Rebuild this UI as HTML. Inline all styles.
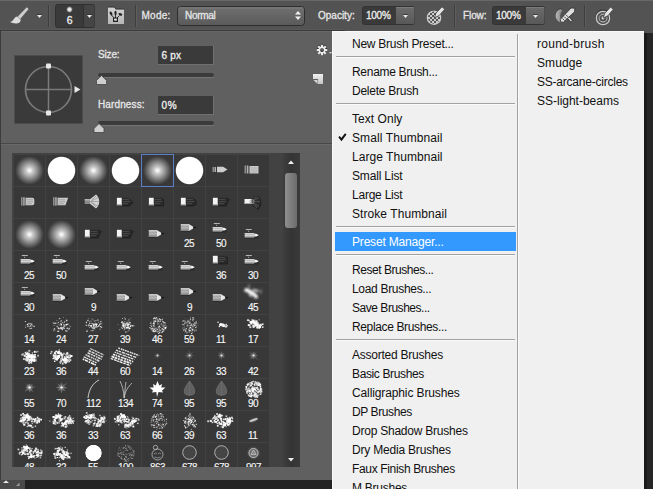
<!DOCTYPE html>
<html><head><meta charset="utf-8"><title>Brush Preset Picker</title><style>
html,body{margin:0;padding:0;background:#262626;}
body{width:653px;height:489px;overflow:hidden;position:relative;font-family:"Liberation Sans",sans-serif;}
#bg{position:absolute;left:0;top:0;}
.t{position:absolute;white-space:nowrap;line-height:1;display:block;}
#glab{position:absolute;left:12px;top:153px;width:288px;height:314px;overflow:hidden;}
.t{-webkit-text-stroke:0.3px currentColor;}
#menu{position:absolute;left:332px;top:31px;width:312px;height:458px;background:#f0f0f0;box-sizing:border-box;border-left:1px solid #f9f9f9;border-top:1px solid #f9f9f9;overflow:hidden;font-size:12px;color:#111;}
.col1{position:absolute;left:2px;top:2px;width:181px;}
.col2{position:absolute;left:187px;top:2px;width:122px;}
.vs{position:absolute;left:184px;top:2px;width:1px;height:460px;background:#a2a2a2;border-right:1px solid #fbfbfb;}
.mi{height:19px;line-height:21px;padding-left:17px;white-space:nowrap;position:relative;}
.col2 .mi{padding-left:17px;}
.mi.hl{background:#3399ff;color:#fff;}
.sep{height:9px;position:relative;}
.sep i{position:absolute;left:1px;right:1px;top:3px;height:1px;background:#a2a2a2;border-bottom:1px solid #fbfbfb;}
.chk{position:absolute;left:2.5px;top:4.500px;}
</style></head><body>
<svg id="bg" width="653" height="489" viewBox="0 0 653 489">
<rect x="0" y="0" width="653" height="33" fill="#535353"/>
<rect x="0" y="0" width="653" height="1" fill="#686868"/>
<rect x="332" y="33" width="321" height="456" fill="#262626"/>
<rect x="0" y="480" width="333" height="9" fill="#232323"/>
<rect x="644" y="33" width="3" height="456" fill="#000" opacity="0.3"/>
<rect x="0" y="29" width="345" height="1" fill="#595959"/>
<rect x="0" y="30" width="333" height="450" fill="#3c3c3c"/>
<rect x="1" y="32" width="331" height="448" fill="#606060"/>
<rect x="1" y="31" width="331" height="1" fill="#676767"/>
<rect x="0" y="30" width="345" height="1" fill="#3a3a3a"/>
<rect x="1" y="143" width="331" height="1" fill="#484848"/>
<rect x="1" y="144" width="331" height="1" fill="#686868"/>
<g transform="translate(10,7)"><path d="M16.8,0.3 L18.6,2 L10.2,12 L7.6,9.8 Z" fill="#cdcdcd"/><path d="M7,9.400 L10.600,12.400 C11.200,16.800 4.500,17.600 -0.300,14.800 C3.800,14.600 3.200,10.600 7,9.400 Z" fill="#dcdcdc"/></g>
<rect x="37" y="14" width="5" height="1" fill="#1e1e1e" opacity="0.55"/><path d="M37,15 h5 l-2.5,3 Z" fill="#e8e8e8"/>
<rect x="48" y="5" width="1" height="22" fill="#3e3e3e"/><rect x="49" y="5" width="1" height="22" fill="#5e5e5e"/>
<rect x="55.5" y="4.5" width="39" height="23" rx="2" fill="#3a3a3a" stroke="#303030"/>
<path d="M83,5 h9.5 a2,2 0 0 1 2,2 v18 a2,2 0 0 1 -2,2 h-9.5 Z" fill="#454545"/>
<rect x="83" y="5" width="1" height="22" fill="#303030"/>
<defs><radialGradient id="dot"><stop offset="0" stop-color="#fff"/><stop offset="0.5" stop-color="#ccc"/><stop offset="1" stop-color="#3a3a3a" stop-opacity="0"/></radialGradient></defs>
<circle cx="69.5" cy="9.5" r="3.8" fill="url(#dot)"/>
<rect x="87" y="14" width="5" height="1" fill="#1e1e1e" opacity="0.55"/><path d="M87,15 h5 l-2.5,3 Z" fill="#e8e8e8"/>
<defs><linearGradient id="fo" x1="0" y1="0" x2="0" y2="1"><stop offset="0" stop-color="#d2d2d2"/><stop offset="1" stop-color="#b6b6b6"/></linearGradient></defs>
<path d="M108,6.700 h6.300 l1.500,2 h8.200 v3 h-16 Z" fill="#1c1c1c"/>
<path d="M108,7.500 h6.300 l1.500,2 h8.200 v14.500 h-16 Z" fill="url(#fo)"/>
<g fill="#222" stroke="#222"><rect x="113" y="17.500" width="5" height="4.500" stroke="none"/><rect x="114.200" y="18.600" width="2.600" height="2" fill="#eee" stroke="none"/><ellipse cx="111" cy="13.500" rx="1.200" ry="2" transform="rotate(-30 111 13.500)" stroke="none"/><ellipse cx="115.500" cy="13" rx="1.100" ry="2.200" stroke="none"/><ellipse cx="120.400" cy="14.300" rx="2" ry="1.200" transform="rotate(20 120.400 14.300)" stroke="none"/><path d="M111.500,15 L114,18 M115.500,15 V18 M119.500,15.500 L117,18" stroke-width="0.9" fill="none"/></g>
<rect x="135" y="5" width="1" height="22" fill="#3e3e3e"/><rect x="136" y="5" width="1" height="22" fill="#5e5e5e"/>
<defs><linearGradient id="dd" x1="0" y1="0" x2="0" y2="1"><stop offset="0" stop-color="#707070"/><stop offset="1" stop-color="#5a5a5a"/></linearGradient></defs>
<rect x="177.5" y="6.5" width="127" height="19" rx="3" fill="url(#dd)" stroke="#2e2e2e"/>
<rect x="179" y="7.5" width="124" height="1" fill="#838383" opacity="0.7"/>
<path d="M295,14.5 h6 l-3,-3.5 Z M295,16.5 h6 l-3,3.5 Z" fill="#f0f0f0"/>
<rect x="362.5" y="6.5" width="52" height="18" rx="2" fill="#3a3a3a" stroke="#333"/>
<defs><linearGradient id="pb362" x1="0" y1="0" x2="0" y2="1"><stop offset="0" stop-color="#6c6c6c"/><stop offset="1" stop-color="#585858"/></linearGradient></defs>
<path d="M396,7 h17 a1.5,1.5 0 0 1 1.5,1.5 v14 a1.5,1.5 0 0 1 -1.5,1.5 h-17 Z" fill="url(#pb362)"/>
<rect x="396" y="7" width="18" height="1" fill="#7c7c7c"/>
<rect x="403" y="14" width="5" height="1" fill="#1e1e1e" opacity="0.55"/><path d="M403,15 h5 l-2.5,3 Z" fill="#e8e8e8"/>
<defs><pattern id="chk" x="0" y="1" width="4" height="4" patternUnits="userSpaceOnUse"><rect width="4" height="4" fill="#555"/><rect width="2" height="2" fill="#cacaca"/><rect x="2" y="2" width="2" height="2" fill="#cacaca"/></pattern><clipPath id="oc"><circle cx="434" cy="17.700" r="6.700"/></clipPath></defs>
<circle cx="434" cy="17" r="7" fill="#222" opacity="0.6"/>
<circle cx="434" cy="17.700" r="6.700" fill="url(#chk)" stroke="#cfcfcf" stroke-width="1.200"/>
<path d="M434.400,17.800 L436,13 L442,6.800 L444.700,9.300 L439,15.700 Z" fill="#e2e2e2" stroke="#3e3e3e" stroke-width="0.800"/>
<rect x="454" y="5" width="1" height="22" fill="#3e3e3e"/><rect x="455" y="5" width="1" height="22" fill="#5e5e5e"/>
<rect x="492.5" y="6.5" width="52" height="18" rx="2" fill="#3a3a3a" stroke="#333"/>
<defs><linearGradient id="pb492" x1="0" y1="0" x2="0" y2="1"><stop offset="0" stop-color="#6c6c6c"/><stop offset="1" stop-color="#585858"/></linearGradient></defs>
<path d="M526,7 h17 a1.5,1.5 0 0 1 1.5,1.5 v14 a1.5,1.5 0 0 1 -1.5,1.5 h-17 Z" fill="url(#pb492)"/>
<rect x="526" y="7" width="18" height="1" fill="#7c7c7c"/>
<rect x="533" y="14" width="5" height="1" fill="#1e1e1e" opacity="0.55"/><path d="M533,15 h5 l-2.5,3 Z" fill="#e8e8e8"/>
<defs><linearGradient id="cr" x1="0" y1="0" x2="1" y2="0"><stop offset="0" stop-color="#b8b8b8"/><stop offset="1" stop-color="#808080"/></linearGradient></defs>
<path d="M560.500,8.200 C554,10.200 554,19.200 560.500,21.700 L562.500,20.200 C559.500,17.700 559.500,12.200 562.800,9.700 Z" fill="#222" opacity="0.6"/>
<path d="M560.500,9 C554,11 554,20 560.500,22.500 L562.500,21 C559.500,18.500 559.500,13 562.800,10.500 Z" fill="url(#cr)"/>
<path d="M567.500,16.500 L571.500,21.300" stroke="#2e2e2e" stroke-width="3" fill="none"/><path d="M567.500,16.500 L571.300,21" stroke="#d8d8d8" stroke-width="1.600" fill="none"/>
<path d="M560.600,21.900 L560.400,19.300 L571,8 L574.800,8.200 L574.600,11.800 L563.400,22.200 Z" fill="#dedede" stroke="#2e2e2e" stroke-width="0.800"/>
<path d="M562.500,18.500 L564.500,20.500 M564.300,16.700 L566.300,18.700 M566.100,14.900 L568.100,16.900" stroke="#3a3a3a" stroke-width="0.900" fill="none"/>
<rect x="584" y="5" width="1" height="22" fill="#3e3e3e"/><rect x="585" y="5" width="1" height="22" fill="#5e5e5e"/>
<circle cx="603" cy="17.200" r="7" fill="none" stroke="#222" stroke-width="1.200" opacity="0.6"/>
<circle cx="603" cy="18" r="6.700" fill="none" stroke="#cdcdcd" stroke-width="1.200"/><circle cx="603" cy="18" r="3.800" fill="none" stroke="#cdcdcd" stroke-width="1.200"/><circle cx="603" cy="17.400" r="3.800" fill="none" stroke="#222" stroke-width="0.800" opacity="0.5"/><circle cx="603" cy="18" r="1.400" fill="#e4e4e4"/>
<path d="M603.200,18 L604.800,13.300 L610.600,7 L613.300,9.400 L607.800,15.800 Z" fill="#e4e4e4" stroke="#3e3e3e" stroke-width="0.800"/>
<rect x="14.5" y="55.5" width="68" height="68" fill="#3a3a3a" stroke="#4c4c4c"/>
<circle cx="48.5" cy="89.5" r="23" fill="none" stroke="#7a7a7a" stroke-width="1.7"/>
<path d="M26,89.5 H71 M48.500,67 V112" stroke="#7a7a7a" stroke-width="1.5"/>
<rect x="46" y="63.500" width="5" height="5" rx="1" fill="#e8e8e8"/><rect x="46" y="110.5" width="5" height="5" rx="1" fill="#e8e8e8"/>
<path d="M74.500,86 L80.500,89.500 L74.500,93 Z" fill="#e8e8e8"/>
<rect x="158" y="46" width="56" height="19" fill="#707070"/><rect x="158" y="46" width="55" height="18" fill="#3a3a3a"/>
<rect x="158" y="96" width="56" height="19" fill="#707070"/><rect x="158" y="96" width="55" height="18" fill="#3a3a3a"/>
<rect x="98" y="73" width="116" height="5" rx="2.5" fill="#747474"/><rect x="98" y="73" width="116" height="4" rx="2" fill="#3b3b3b"/>
<path d="M101.5,75.5 l5,5 v4 h-10 v-4 Z" fill="#cfcfcf" stroke="#444" stroke-width="0.8"/>
<rect x="98" y="121" width="116" height="5" rx="2.5" fill="#747474"/><rect x="98" y="121" width="116" height="4" rx="2" fill="#3b3b3b"/>
<path d="M99,123.5 l5,5 v4 h-10 v-4 Z" fill="#cfcfcf" stroke="#444" stroke-width="0.8"/>
<g transform="translate(322,49)" opacity="0.7"><rect x="-1" y="-5.2" width="2" height="2.2" fill="#222" transform="rotate(0)"/><rect x="-1" y="-5.2" width="2" height="2.2" fill="#222" transform="rotate(45)"/><rect x="-1" y="-5.2" width="2" height="2.2" fill="#222" transform="rotate(90)"/><rect x="-1" y="-5.2" width="2" height="2.2" fill="#222" transform="rotate(135)"/><rect x="-1" y="-5.2" width="2" height="2.2" fill="#222" transform="rotate(180)"/><rect x="-1" y="-5.2" width="2" height="2.2" fill="#222" transform="rotate(225)"/><rect x="-1" y="-5.2" width="2" height="2.2" fill="#222" transform="rotate(270)"/><rect x="-1" y="-5.2" width="2" height="2.2" fill="#222" transform="rotate(315)"/><circle r="2.8" fill="none" stroke="#222" stroke-width="1.7"/></g>
<g transform="translate(322,50)" opacity="1"><rect x="-1" y="-5.2" width="2" height="2.2" fill="#ededed" transform="rotate(0)"/><rect x="-1" y="-5.2" width="2" height="2.2" fill="#ededed" transform="rotate(45)"/><rect x="-1" y="-5.2" width="2" height="2.2" fill="#ededed" transform="rotate(90)"/><rect x="-1" y="-5.2" width="2" height="2.2" fill="#ededed" transform="rotate(135)"/><rect x="-1" y="-5.2" width="2" height="2.2" fill="#ededed" transform="rotate(180)"/><rect x="-1" y="-5.2" width="2" height="2.2" fill="#ededed" transform="rotate(225)"/><rect x="-1" y="-5.2" width="2" height="2.2" fill="#ededed" transform="rotate(270)"/><rect x="-1" y="-5.2" width="2" height="2.2" fill="#ededed" transform="rotate(315)"/><circle r="2.8" fill="none" stroke="#ededed" stroke-width="1.7"/></g>
<path d="M329,52 h3 l-1.5,2 Z" fill="#d0d0d0"/>
<defs><linearGradient id="np" x1="0" y1="0" x2="0" y2="1"><stop offset="0" stop-color="#f0f0f0"/><stop offset="1" stop-color="#c4c4c4"/></linearGradient></defs>
<path d="M313,74 h10 v10 h-5 v-5 h-5 Z" fill="url(#np)"/><path d="M313.500,80 h4 v4 Z" fill="#d8d8d8"/>
<rect x="12" y="153" width="288" height="314" fill="#424242"/>
<defs><clipPath id="gc"><rect x="12" y="153" width="288" height="314"/></clipPath>
<radialGradient id="soft"><stop offset="0" stop-color="#fff"/><stop offset="0.08" stop-color="#f0f0f0"/><stop offset="0.25" stop-color="#c6c6c6"/><stop offset="0.5" stop-color="#969696"/><stop offset="0.75" stop-color="#646464"/><stop offset="0.92" stop-color="#444"/><stop offset="1" stop-color="#383838"/></radialGradient>
<radialGradient id="hard"><stop offset="0" stop-color="#fff"/><stop offset="0.92" stop-color="#fff"/><stop offset="1" stop-color="#fff" stop-opacity="0"/></radialGradient>
<radialGradient id="glow"><stop offset="0" stop-color="#fff" stop-opacity="0.9"/><stop offset="1" stop-color="#fff" stop-opacity="0"/></radialGradient>
</defs>
<g clip-path="url(#gc)">
<rect x="14" y="155" width="31" height="31" fill="#383838"/>
<rect x="46" y="155" width="31" height="31" fill="#383838"/>
<rect x="78" y="155" width="31" height="31" fill="#383838"/>
<rect x="110" y="155" width="31" height="31" fill="#383838"/>
<rect x="142" y="155" width="31" height="31" fill="#383838"/>
<rect x="174" y="155" width="31" height="31" fill="#383838"/>
<rect x="206" y="155" width="31" height="31" fill="#383838"/>
<rect x="238" y="155" width="31" height="31" fill="#383838"/>
<rect x="14" y="187" width="31" height="31" fill="#383838"/>
<rect x="46" y="187" width="31" height="31" fill="#383838"/>
<rect x="78" y="187" width="31" height="31" fill="#383838"/>
<rect x="110" y="187" width="31" height="31" fill="#383838"/>
<rect x="142" y="187" width="31" height="31" fill="#383838"/>
<rect x="174" y="187" width="31" height="31" fill="#383838"/>
<rect x="206" y="187" width="31" height="31" fill="#383838"/>
<rect x="238" y="187" width="31" height="31" fill="#383838"/>
<rect x="14" y="219" width="31" height="31" fill="#383838"/>
<rect x="46" y="219" width="31" height="31" fill="#383838"/>
<rect x="78" y="219" width="31" height="31" fill="#383838"/>
<rect x="110" y="219" width="31" height="31" fill="#383838"/>
<rect x="142" y="219" width="31" height="31" fill="#383838"/>
<rect x="174" y="219" width="31" height="31" fill="#383838"/>
<rect x="206" y="219" width="31" height="31" fill="#383838"/>
<rect x="238" y="219" width="31" height="31" fill="#383838"/>
<rect x="14" y="251" width="31" height="31" fill="#383838"/>
<rect x="46" y="251" width="31" height="31" fill="#383838"/>
<rect x="78" y="251" width="31" height="31" fill="#383838"/>
<rect x="110" y="251" width="31" height="31" fill="#383838"/>
<rect x="142" y="251" width="31" height="31" fill="#383838"/>
<rect x="174" y="251" width="31" height="31" fill="#383838"/>
<rect x="206" y="251" width="31" height="31" fill="#383838"/>
<rect x="238" y="251" width="31" height="31" fill="#383838"/>
<rect x="14" y="283" width="31" height="31" fill="#383838"/>
<rect x="46" y="283" width="31" height="31" fill="#383838"/>
<rect x="78" y="283" width="31" height="31" fill="#383838"/>
<rect x="110" y="283" width="31" height="31" fill="#383838"/>
<rect x="142" y="283" width="31" height="31" fill="#383838"/>
<rect x="174" y="283" width="31" height="31" fill="#383838"/>
<rect x="206" y="283" width="31" height="31" fill="#383838"/>
<rect x="238" y="283" width="31" height="31" fill="#383838"/>
<rect x="14" y="315" width="31" height="31" fill="#383838"/>
<rect x="46" y="315" width="31" height="31" fill="#383838"/>
<rect x="78" y="315" width="31" height="31" fill="#383838"/>
<rect x="110" y="315" width="31" height="31" fill="#383838"/>
<rect x="142" y="315" width="31" height="31" fill="#383838"/>
<rect x="174" y="315" width="31" height="31" fill="#383838"/>
<rect x="206" y="315" width="31" height="31" fill="#383838"/>
<rect x="238" y="315" width="31" height="31" fill="#383838"/>
<rect x="14" y="347" width="31" height="31" fill="#383838"/>
<rect x="46" y="347" width="31" height="31" fill="#383838"/>
<rect x="78" y="347" width="31" height="31" fill="#383838"/>
<rect x="110" y="347" width="31" height="31" fill="#383838"/>
<rect x="142" y="347" width="31" height="31" fill="#383838"/>
<rect x="174" y="347" width="31" height="31" fill="#383838"/>
<rect x="206" y="347" width="31" height="31" fill="#383838"/>
<rect x="238" y="347" width="31" height="31" fill="#383838"/>
<rect x="14" y="379" width="31" height="31" fill="#383838"/>
<rect x="46" y="379" width="31" height="31" fill="#383838"/>
<rect x="78" y="379" width="31" height="31" fill="#383838"/>
<rect x="110" y="379" width="31" height="31" fill="#383838"/>
<rect x="142" y="379" width="31" height="31" fill="#383838"/>
<rect x="174" y="379" width="31" height="31" fill="#383838"/>
<rect x="206" y="379" width="31" height="31" fill="#383838"/>
<rect x="238" y="379" width="31" height="31" fill="#383838"/>
<rect x="14" y="411" width="31" height="31" fill="#383838"/>
<rect x="46" y="411" width="31" height="31" fill="#383838"/>
<rect x="78" y="411" width="31" height="31" fill="#383838"/>
<rect x="110" y="411" width="31" height="31" fill="#383838"/>
<rect x="142" y="411" width="31" height="31" fill="#383838"/>
<rect x="174" y="411" width="31" height="31" fill="#383838"/>
<rect x="206" y="411" width="31" height="31" fill="#383838"/>
<rect x="238" y="411" width="31" height="31" fill="#383838"/>
<rect x="14" y="443" width="31" height="31" fill="#383838"/>
<rect x="46" y="443" width="31" height="31" fill="#383838"/>
<rect x="78" y="443" width="31" height="31" fill="#383838"/>
<rect x="110" y="443" width="31" height="31" fill="#383838"/>
<rect x="142" y="443" width="31" height="31" fill="#383838"/>
<rect x="174" y="443" width="31" height="31" fill="#383838"/>
<rect x="206" y="443" width="31" height="31" fill="#383838"/>
<rect x="238" y="443" width="31" height="31" fill="#383838"/>
<circle cx="29.5" cy="170.5" r="14.500" fill="url(#soft)"/>
<circle cx="61.5" cy="170.5" r="14.3" fill="url(#hard)"/>
<circle cx="93.5" cy="170.5" r="14.500" fill="url(#soft)"/>
<circle cx="125.5" cy="170.5" r="14.3" fill="url(#hard)"/>
<circle cx="157.5" cy="170.5" r="14.500" fill="url(#soft)"/>
<circle cx="189.5" cy="170.5" r="14.3" fill="url(#hard)"/>
<g transform="translate(221.5,170)"><rect x="-9" y="-3" width="1.5" height="5" fill="#8c8c8c"/><rect x="-7" y="-3" width="1.500" height="5" fill="#b0b0b0"/><path d="M-4.5,-3.2 h6 l4.500,2.700 l-4.500,2.700 h-6 Z" fill="#cecece"/></g>
<g transform="translate(253.5,170)"><rect x="-9" y="-4.5" width="1.8" height="8" fill="#8c8c8c"/><rect x="-6.6" y="-4.5" width="1.5" height="8" fill="#b0b0b0"/><rect x="-4" y="-4" width="9" height="7.500" fill="#cacaca"/><path d="M-3,-2 h7 M-3,0 h7 M-3,2 h7" stroke="#a0a0a0" stroke-width="0.7"/></g>
<g transform="translate(29.5,202)"><rect x="-8.5" y="-4.8" width="1.6" height="8.4" fill="#8c8c8c"/><rect x="-6.3" y="-4.8" width="1.5" height="8.4" fill="#b0b0b0"/><path d="M-4,-4.2 h6.8 a2,2 0 0 1 2,2 v3.400 a2,2 0 0 1 -2,2 h-6.8 Z" fill="#c8c8c8"/><path d="M-3,-2.3 h6.500 M-3,-0.300 h6.500 M-3,1.700 h5.500" stroke="#9a9a9a" stroke-width="0.7"/></g>
<g transform="translate(61.5,202)"><rect x="-8.5" y="-4.8" width="1.6" height="8.4" fill="#8c8c8c"/><rect x="-6.3" y="-4.8" width="1.5" height="8.4" fill="#b0b0b0"/><path d="M-4,-4.2 h10.7 l-2.800,7.400 h-7.900 Z" fill="#c8c8c8"/><path d="M-3,-2.3 h6.500 M-3,-0.300 h6.500 M-3,1.700 h5.500" stroke="#9a9a9a" stroke-width="0.7"/></g>
<g transform="translate(93.5,202)"><rect x="-8.8" y="-3" width="5" height="5" fill="#8a8a8a"/><rect x="-8.8" y="-3" width="5" height="1.500" fill="#b4b4b4"/><path d="M-3.8,-2.500 L2.500,-7.500 C6.800,-4 6.800,3 2.500,6.500 L-3.800,1.500 Z" fill="#d2d2d2"/><path d="M-3,-0.500 L4.500,-4.500 M-3,-0.500 L5.500,-0.500 M-3,0 L4.500,4 M-2,-1.500 L2.500,-6 M-2,0.500 L2.500,5" stroke="#909090" stroke-width="0.7"/></g>
<g transform="translate(125.5,202)"><path d="M-4,-4.2 h7 l4,3.8 l-4,3.8 h-7 Z" fill="#181818" opacity="0.7" transform="translate(1,1)"/><path d="M-4,-4.2 h7 l4,3.8 l-4,3.8 h-7 Z" fill="#2a2a2a"/><path d="M-3,-2.400 h6.500 M-3,-0.400 h7.500 M-3,1.600 h5.500" stroke="#545454" stroke-width="0.8"/><rect x="-8.6" y="-4.2" width="4.8" height="7.600" fill="#f4f4f4"/><rect x="-8.6" y="2" width="4.800" height="1.400" fill="#b0b0b0"/><rect x="-8.6" y="3.400" width="4.800" height="1" fill="#1a1a1a" opacity="0.6"/></g>
<g transform="translate(157.5,202)"><path d="M-4,-4.2 h9.5 v7.6 h-9.5 Z" fill="#181818" opacity="0.7" transform="translate(1,1)"/><path d="M-4,-4.2 h9.5 v7.6 h-9.5 Z" fill="#2a2a2a"/><path d="M-3,-2.400 h6.500 M-3,-0.400 h7.500 M-3,1.600 h5.500" stroke="#545454" stroke-width="0.8"/><rect x="-8.6" y="-4.2" width="4.8" height="7.600" fill="#f4f4f4"/><rect x="-8.6" y="2" width="4.800" height="1.400" fill="#b0b0b0"/><rect x="-8.6" y="3.400" width="4.800" height="1" fill="#1a1a1a" opacity="0.6"/></g>
<g transform="translate(189.5,202)"><path d="M-4,-4.2 h6 a4.300,3.800 0 0 1 0,7.600 h-6 Z" fill="#181818" opacity="0.7" transform="translate(1,1)"/><path d="M-4,-4.2 h6 a4.300,3.800 0 0 1 0,7.600 h-6 Z" fill="#2a2a2a"/><path d="M-3,-2.400 h6.500 M-3,-0.400 h7.500 M-3,1.600 h5.500" stroke="#545454" stroke-width="0.8"/><rect x="-8.6" y="-4.2" width="4.8" height="7.600" fill="#f4f4f4"/><rect x="-8.6" y="2" width="4.800" height="1.400" fill="#b0b0b0"/><rect x="-8.6" y="3.400" width="4.800" height="1" fill="#1a1a1a" opacity="0.6"/></g>
<g transform="translate(221.5,202)"><path d="M-4,-4.2 h11.2 l-3.200,7.600 h-8 Z" fill="#181818" opacity="0.7" transform="translate(1,1)"/><path d="M-4,-4.2 h11.2 l-3.200,7.600 h-8 Z" fill="#2a2a2a"/><path d="M-3,-2.400 h6.500 M-3,-0.400 h7.500 M-3,1.600 h5.500" stroke="#545454" stroke-width="0.8"/><rect x="-8.6" y="-4.2" width="4.8" height="7.600" fill="#f4f4f4"/><rect x="-8.6" y="2" width="4.800" height="1.400" fill="#b0b0b0"/><rect x="-8.6" y="3.400" width="4.800" height="1" fill="#1a1a1a" opacity="0.6"/></g>
<g transform="translate(253.5,202)"><path d="M-2.500,-2.500 L3.500,-7.500 C8,-4 8,3.500 3.500,7 L-2.500,2 Z" fill="#181818" opacity="0.7" transform="translate(1,1)"/><path d="M-2.500,-2.500 L3.500,-7.500 C8,-4 8,3.500 3.500,7 L-2.500,2 Z" fill="#2c2c2c"/><path d="M-1.500,-0.500 L5.500,-4.500 M-1.500,-0.500 L6.500,-0.300 M-1.500,0 L5.500,4.500 M-0.500,-1.500 L3.500,-6.500 M-0.500,1 L3.500,6" stroke="#5c5c5c" stroke-width="0.8"/><rect x="-9" y="-3" width="7" height="5" fill="#f2f2f2"/><rect x="-9" y="1" width="7" height="1" fill="#aaa"/><circle cx="-1.500" cy="-0.400" r="2" fill="none" stroke="#999" stroke-width="0.8"/></g>
<circle cx="29.5" cy="234.5" r="14.500" fill="url(#soft)"/>
<circle cx="61.5" cy="234.5" r="14.500" fill="url(#soft)"/>
<g transform="translate(93.5,234)"><path d="M-4,-4.2 h11.2 l-3.200,7.600 h-8 Z" fill="#181818" opacity="0.7" transform="translate(1,1)"/><path d="M-4,-4.2 h11.2 l-3.200,7.600 h-8 Z" fill="#2a2a2a"/><path d="M-3,-2.400 h6.500 M-3,-0.400 h7.500 M-3,1.600 h5.500" stroke="#545454" stroke-width="0.8"/><rect x="-8.6" y="-4.2" width="4.8" height="7.600" fill="#f4f4f4"/><rect x="-8.6" y="2" width="4.800" height="1.400" fill="#b0b0b0"/><rect x="-8.6" y="3.400" width="4.800" height="1" fill="#1a1a1a" opacity="0.6"/></g>
<g transform="translate(125.5,234)"><path d="M-4,-4.2 h11.2 l-3.200,7.600 h-8 Z" fill="#181818" opacity="0.7" transform="translate(1,1)"/><path d="M-4,-4.2 h11.2 l-3.200,7.600 h-8 Z" fill="#2a2a2a"/><path d="M-3,-2.400 h6.500 M-3,-0.400 h7.500 M-3,1.600 h5.500" stroke="#545454" stroke-width="0.8"/><rect x="-8.6" y="-4.2" width="4.8" height="7.600" fill="#f4f4f4"/><rect x="-8.6" y="2" width="4.800" height="1.400" fill="#b0b0b0"/><rect x="-8.6" y="3.400" width="4.800" height="1" fill="#1a1a1a" opacity="0.6"/></g>
<g transform="translate(157.5,234)"><rect x="-8.5" y="-3" width="9" height="7" fill="#1c1c1c" opacity="0.4"/><rect x="-8.7" y="-4" width="8" height="7" fill="#a6a6a6"/><rect x="-8.7" y="-4" width="8" height="1.6" fill="#c6c6c6"/><rect x="-8.7" y="-0.6" width="8" height="0.8" fill="#bcbcbc"/><rect x="-8.7" y="1.6" width="8" height="1.4" fill="#868686"/><path d="M-0.7,-4 L3.7,-1.3 V0.4 L-0.7,3 Z" fill="#e6e6e6"/><rect x="3.7" y="-1.3" width="3" height="1.6" fill="#1e1e1e"/></g>
<g transform="translate(189.5,228)"><rect x="-8.5" y="-3" width="9" height="7" fill="#1c1c1c" opacity="0.4"/><rect x="-8.7" y="-4" width="8" height="7" fill="#a6a6a6"/><rect x="-8.7" y="-4" width="8" height="1.6" fill="#c6c6c6"/><rect x="-8.7" y="-0.6" width="8" height="0.8" fill="#bcbcbc"/><rect x="-8.7" y="1.6" width="8" height="1.4" fill="#868686"/><path d="M-0.7,-4 L3.7,-1.3 V0.4 L-0.7,3 Z" fill="#e6e6e6"/><rect x="3.7" y="-1.3" width="3" height="1.6" fill="#1e1e1e"/></g>
<g transform="translate(221.5,228)"><rect x="-9" y="0" width="14" height="4.6" fill="#1c1c1c" opacity="0.45"/><rect x="-7.7" y="-5" width="6" height="1" fill="#b4b4b4"/><rect x="-5.5" y="-3.2" width="1.2" height="1" fill="#a0a0a0"/><rect x="-8.8" y="-0.8" width="9.5" height="4.2" fill="#bcbcbc"/><rect x="-8.8" y="-0.8" width="9.5" height="0.9" fill="#dedede"/><rect x="-8.8" y="1" width="9.5" height="0.8" fill="#d8d8d8"/><rect x="-8.8" y="2.6" width="9.5" height="0.8" fill="#949494"/><path d="M0.7,-0.2 H2.6 L4.8,0.8 V1.7 L2.6,2.6 H0.7 Z" fill="#f2f2f2"/></g>
<g transform="translate(253.5,234)"><rect x="-9" y="0" width="14" height="4.6" fill="#1c1c1c" opacity="0.45"/><rect x="-7.7" y="-5" width="6" height="1" fill="#b4b4b4"/><rect x="-5.5" y="-3.2" width="1.2" height="1" fill="#a0a0a0"/><rect x="-8.8" y="-0.8" width="9.5" height="4.2" fill="#bcbcbc"/><rect x="-8.8" y="-0.8" width="9.5" height="0.9" fill="#dedede"/><rect x="-8.8" y="1" width="9.5" height="0.8" fill="#d8d8d8"/><rect x="-8.8" y="2.6" width="9.5" height="0.8" fill="#949494"/><path d="M0.7,-0.2 H2.6 L4.8,0.8 V1.7 L2.6,2.6 H0.7 Z" fill="#f2f2f2"/></g>
<g transform="translate(29.5,260)"><rect x="-9" y="0" width="14" height="4.6" fill="#1c1c1c" opacity="0.45"/><rect x="-7.7" y="-5" width="6" height="1" fill="#b4b4b4"/><rect x="-5.5" y="-3.2" width="1.2" height="1" fill="#a0a0a0"/><rect x="-8.8" y="-0.8" width="9.5" height="4.2" fill="#bcbcbc"/><rect x="-8.8" y="-0.8" width="9.5" height="0.9" fill="#dedede"/><rect x="-8.8" y="1" width="9.5" height="0.8" fill="#d8d8d8"/><rect x="-8.8" y="2.6" width="9.5" height="0.8" fill="#949494"/><path d="M0.7,-0.2 H2.6 L4.8,0.8 V1.7 L2.6,2.6 H0.7 Z" fill="#f2f2f2"/></g>
<g transform="translate(61.5,260)"><rect x="-9" y="0" width="14" height="4.6" fill="#1c1c1c" opacity="0.45"/><rect x="-7.7" y="-5" width="6" height="1" fill="#b4b4b4"/><rect x="-5.5" y="-3.2" width="1.2" height="1" fill="#a0a0a0"/><rect x="-8.8" y="-0.8" width="9.5" height="4.2" fill="#bcbcbc"/><rect x="-8.8" y="-0.8" width="9.5" height="0.9" fill="#dedede"/><rect x="-8.8" y="1" width="9.5" height="0.8" fill="#d8d8d8"/><rect x="-8.8" y="2.6" width="9.5" height="0.8" fill="#949494"/><path d="M0.7,-0.2 H2.6 L4.8,0.8 V1.7 L2.6,2.6 H0.7 Z" fill="#f2f2f2"/></g>
<g transform="translate(93.5,266)"><rect x="-9" y="0" width="14" height="4.6" fill="#1c1c1c" opacity="0.45"/><rect x="-7.7" y="-5" width="6" height="1" fill="#b4b4b4"/><rect x="-5.5" y="-3.2" width="1.2" height="1" fill="#a0a0a0"/><rect x="-8.8" y="-0.8" width="9.5" height="4.2" fill="#bcbcbc"/><rect x="-8.8" y="-0.8" width="9.5" height="0.9" fill="#dedede"/><rect x="-8.8" y="1" width="9.5" height="0.8" fill="#d8d8d8"/><rect x="-8.8" y="2.6" width="9.5" height="0.8" fill="#949494"/><path d="M0.7,-0.2 H2.6 L4.8,0.8 V1.7 L2.6,2.6 H0.7 Z" fill="#f2f2f2"/></g>
<g transform="translate(125.5,266)"><rect x="-9" y="0" width="14" height="4.6" fill="#1c1c1c" opacity="0.45"/><rect x="-7.7" y="-5" width="6" height="1" fill="#b4b4b4"/><rect x="-5.5" y="-3.2" width="1.2" height="1" fill="#a0a0a0"/><rect x="-8.8" y="-0.8" width="9.5" height="4.2" fill="#bcbcbc"/><rect x="-8.8" y="-0.8" width="9.5" height="0.9" fill="#dedede"/><rect x="-8.8" y="1" width="9.5" height="0.8" fill="#d8d8d8"/><rect x="-8.8" y="2.6" width="9.5" height="0.8" fill="#949494"/><path d="M0.7,-0.2 H2.6 L4.8,0.8 V1.7 L2.6,2.6 H0.7 Z" fill="#f2f2f2"/></g>
<g transform="translate(157.5,266)"><rect x="-9" y="0" width="14" height="4.6" fill="#1c1c1c" opacity="0.45"/><rect x="-7.7" y="-5" width="6" height="1" fill="#b4b4b4"/><rect x="-5.5" y="-3.2" width="1.2" height="1" fill="#a0a0a0"/><rect x="-8.8" y="-0.8" width="9.5" height="4.2" fill="#bcbcbc"/><rect x="-8.8" y="-0.8" width="9.5" height="0.9" fill="#dedede"/><rect x="-8.8" y="1" width="9.5" height="0.8" fill="#d8d8d8"/><rect x="-8.8" y="2.6" width="9.5" height="0.8" fill="#949494"/><path d="M0.7,-0.2 H2.6 L4.8,0.8 V1.7 L2.6,2.6 H0.7 Z" fill="#f2f2f2"/></g>
<g transform="translate(189.5,266)"><rect x="-9" y="0" width="14" height="4.6" fill="#1c1c1c" opacity="0.45"/><rect x="-7.7" y="-5" width="6" height="1" fill="#b4b4b4"/><rect x="-5.5" y="-3.2" width="1.2" height="1" fill="#a0a0a0"/><rect x="-8.8" y="-0.8" width="9.5" height="4.2" fill="#bcbcbc"/><rect x="-8.8" y="-0.8" width="9.5" height="0.9" fill="#dedede"/><rect x="-8.8" y="1" width="9.5" height="0.8" fill="#d8d8d8"/><rect x="-8.8" y="2.6" width="9.5" height="0.8" fill="#949494"/><path d="M0.7,-0.2 H2.6 L4.8,0.8 V1.7 L2.6,2.6 H0.7 Z" fill="#f2f2f2"/></g>
<g transform="translate(221.5,260)"><path d="M-4,-4.2 h9.5 v7.6 h-9.5 Z" fill="#181818" opacity="0.7" transform="translate(1,1)"/><path d="M-4,-4.2 h9.5 v7.6 h-9.5 Z" fill="#2a2a2a"/><path d="M-3,-2.400 h6.500 M-3,-0.400 h7.500 M-3,1.600 h5.500" stroke="#545454" stroke-width="0.8"/><rect x="-8.6" y="-4.2" width="4.8" height="7.600" fill="#f4f4f4"/><rect x="-8.6" y="2" width="4.800" height="1.400" fill="#b0b0b0"/><rect x="-8.6" y="3.400" width="4.800" height="1" fill="#1a1a1a" opacity="0.6"/></g>
<g transform="translate(253.5,260)"><rect x="-9" y="0" width="14" height="4.6" fill="#1c1c1c" opacity="0.45"/><rect x="-7.7" y="-5" width="6" height="1" fill="#b4b4b4"/><rect x="-5.5" y="-3.2" width="1.2" height="1" fill="#a0a0a0"/><rect x="-8.8" y="-0.8" width="9.5" height="4.2" fill="#bcbcbc"/><rect x="-8.8" y="-0.8" width="9.5" height="0.9" fill="#dedede"/><rect x="-8.8" y="1" width="9.5" height="0.8" fill="#d8d8d8"/><rect x="-8.8" y="2.6" width="9.5" height="0.8" fill="#949494"/><path d="M0.7,-0.2 H2.6 L4.8,0.8 V1.7 L2.6,2.6 H0.7 Z" fill="#f2f2f2"/></g>
<g transform="translate(29.5,292)"><rect x="-9" y="0" width="14" height="4.6" fill="#1c1c1c" opacity="0.45"/><rect x="-7.7" y="-5" width="6" height="1" fill="#b4b4b4"/><rect x="-5.5" y="-3.2" width="1.2" height="1" fill="#a0a0a0"/><rect x="-8.8" y="-0.8" width="9.5" height="4.2" fill="#bcbcbc"/><rect x="-8.8" y="-0.8" width="9.5" height="0.9" fill="#dedede"/><rect x="-8.8" y="1" width="9.5" height="0.8" fill="#d8d8d8"/><rect x="-8.8" y="2.6" width="9.5" height="0.8" fill="#949494"/><path d="M0.7,-0.2 H2.6 L4.8,0.8 V1.7 L2.6,2.6 H0.7 Z" fill="#f2f2f2"/></g>
<g transform="translate(61.5,298)"><rect x="-8.5" y="-3" width="9" height="7" fill="#1c1c1c" opacity="0.4"/><rect x="-8.7" y="-4" width="8" height="7" fill="#a6a6a6"/><rect x="-8.7" y="-4" width="8" height="1.6" fill="#c6c6c6"/><rect x="-8.7" y="-0.6" width="8" height="0.8" fill="#bcbcbc"/><rect x="-8.7" y="1.6" width="8" height="1.4" fill="#868686"/><path d="M-0.7,-4 L3.7,-1.3 V0.4 L-0.7,3 Z" fill="#e6e6e6"/><rect x="3.7" y="-1.3" width="3" height="1.6" fill="#1e1e1e"/></g>
<g transform="translate(93.5,292)"><rect x="-8.5" y="-3" width="9" height="7" fill="#1c1c1c" opacity="0.4"/><rect x="-8.7" y="-4" width="8" height="7" fill="#a6a6a6"/><rect x="-8.7" y="-4" width="8" height="1.6" fill="#c6c6c6"/><rect x="-8.7" y="-0.6" width="8" height="0.8" fill="#bcbcbc"/><rect x="-8.7" y="1.6" width="8" height="1.4" fill="#868686"/><path d="M-0.7,-4 L3.7,-1.3 V0.4 L-0.7,3 Z" fill="#e6e6e6"/><rect x="3.7" y="-1.3" width="3" height="1.6" fill="#1e1e1e"/></g>
<g transform="translate(125.5,298)"><rect x="-8.5" y="-3" width="9" height="7" fill="#1c1c1c" opacity="0.4"/><rect x="-8.7" y="-4" width="8" height="7" fill="#a6a6a6"/><rect x="-8.7" y="-4" width="8" height="1.6" fill="#c6c6c6"/><rect x="-8.7" y="-0.6" width="8" height="0.8" fill="#bcbcbc"/><rect x="-8.7" y="1.6" width="8" height="1.4" fill="#868686"/><path d="M-0.7,-4 L3.7,-1.3 V0.4 L-0.7,3 Z" fill="#e6e6e6"/><rect x="3.7" y="-1.3" width="3" height="1.6" fill="#1e1e1e"/></g>
<g transform="translate(157.5,298)"><rect x="-8.5" y="-3" width="9" height="7" fill="#1c1c1c" opacity="0.4"/><rect x="-8.7" y="-4" width="8" height="7" fill="#a6a6a6"/><rect x="-8.7" y="-4" width="8" height="1.6" fill="#c6c6c6"/><rect x="-8.7" y="-0.6" width="8" height="0.8" fill="#bcbcbc"/><rect x="-8.7" y="1.6" width="8" height="1.4" fill="#868686"/><path d="M-0.7,-4 L3.7,-1.3 V0.4 L-0.7,3 Z" fill="#e6e6e6"/><rect x="3.7" y="-1.3" width="3" height="1.6" fill="#1e1e1e"/></g>
<g transform="translate(189.5,292)"><rect x="-8.5" y="-3" width="9" height="7" fill="#1c1c1c" opacity="0.4"/><rect x="-8.7" y="-4" width="8" height="7" fill="#a6a6a6"/><rect x="-8.7" y="-4" width="8" height="1.6" fill="#c6c6c6"/><rect x="-8.7" y="-0.6" width="8" height="0.8" fill="#bcbcbc"/><rect x="-8.7" y="1.6" width="8" height="1.4" fill="#868686"/><path d="M-0.7,-4 L3.7,-1.3 V0.4 L-0.7,3 Z" fill="#e6e6e6"/><rect x="3.7" y="-1.3" width="3" height="1.6" fill="#1e1e1e"/></g>
<g transform="translate(221.5,298)"><rect x="-8.5" y="-3" width="9" height="7" fill="#1c1c1c" opacity="0.4"/><rect x="-8.7" y="-4" width="8" height="7" fill="#a6a6a6"/><rect x="-8.7" y="-4" width="8" height="1.6" fill="#c6c6c6"/><rect x="-8.7" y="-0.6" width="8" height="0.8" fill="#bcbcbc"/><rect x="-8.7" y="1.6" width="8" height="1.4" fill="#868686"/><path d="M-0.7,-4 L3.7,-1.3 V0.4 L-0.7,3 Z" fill="#e6e6e6"/><rect x="3.7" y="-1.3" width="3" height="1.6" fill="#1e1e1e"/></g>
<g transform="translate(252,293)" fill="#fff" filter="url(#bl2)"><ellipse cx="-1" cy="0" rx="7.500" ry="2.100" transform="rotate(32)" opacity="0.95"/><ellipse cx="3" cy="-3.500" rx="3.500" ry="1.200" transform="rotate(15)" opacity="0.7"/><ellipse cx="-5.500" cy="-2.500" rx="2.500" ry="1.800" opacity="0.8"/><ellipse cx="4" cy="4" rx="2" ry="1.800" opacity="0.85"/><ellipse cx="0" cy="3" rx="2.500" ry="1" transform="rotate(30)" opacity="0.6"/><ellipse cx="-3" cy="-6.500" rx="0.800" ry="2.500" opacity="0.45"/><ellipse cx="9" cy="-1.500" rx="0.800" ry="2.500" opacity="0.4"/></g>
<g transform="translate(29.5,325) rotate(0)" fill="#fff"><rect x="-0.7" y="1.2" width="1.1" height="1.1" opacity="0.54"/><rect x="-2.5" y="-0.5" width="0.6" height="0.6" opacity="0.75"/><rect x="2.8" y="0.6" width="0.7" height="0.7" opacity="0.55"/><rect x="-4.5" y="1.9" width="0.7" height="0.7" opacity="0.61"/><rect x="-4.6" y="-4.0" width="1.1" height="1.1" opacity="0.70"/><rect x="0.8" y="-0.1" width="1.3" height="1.3" opacity="0.64"/><rect x="0.8" y="0.9" width="0.8" height="0.8" opacity="0.91"/><rect x="1.5" y="2.7" width="1.1" height="1.1" opacity="0.69"/><rect x="-0.9" y="-0.2" width="0.6" height="0.6" opacity="0.60"/><rect x="-1.2" y="-2.2" width="0.9" height="0.9" opacity="0.79"/><rect x="-2.2" y="0.6" width="1.2" height="1.2" opacity="0.85"/><rect x="0.1" y="3.0" width="1.0" height="1.0" opacity="0.94"/><rect x="-0.3" y="-1.9" width="1.4" height="1.4" opacity="0.56"/><rect x="-4.0" y="1.9" width="0.7" height="0.7" opacity="0.74"/><rect x="3.9" y="0.8" width="1.2" height="1.2" opacity="0.79"/><rect x="1.7" y="-1.4" width="1.2" height="1.2" opacity="0.80"/><rect x="-2.6" y="-1.2" width="1.3" height="1.3" opacity="0.97"/><rect x="-4.0" y="0.5" width="0.6" height="0.6" opacity="0.85"/><rect x="1.0" y="-1.7" width="0.9" height="0.9" opacity="0.83"/><rect x="3.0" y="0.4" width="0.7" height="0.7" opacity="0.56"/><rect x="4.3" y="1.4" width="0.7" height="0.7" opacity="0.62"/></g>
<g transform="translate(61.5,325) rotate(0)" fill="#fff"><rect x="-6.4" y="4.7" width="0.6" height="0.6" opacity="0.72"/><rect x="-8.1" y="-2.3" width="1.2" height="1.2" opacity="0.93"/><rect x="-0.8" y="3.7" width="0.8" height="0.8" opacity="0.94"/><rect x="2.3" y="-0.5" width="0.6" height="0.6" opacity="0.62"/><rect x="0.5" y="4.2" width="1.0" height="1.0" opacity="0.63"/><rect x="4.3" y="0.1" width="0.8" height="0.8" opacity="0.78"/><rect x="6.0" y="-1.6" width="0.9" height="0.9" opacity="0.81"/><rect x="-0.6" y="-1.1" width="1.2" height="1.2" opacity="0.89"/><rect x="5.2" y="-4.6" width="0.8" height="0.8" opacity="0.70"/><rect x="4.6" y="3.1" width="0.5" height="0.5" opacity="0.53"/><rect x="0.6" y="2.1" width="0.8" height="0.8" opacity="0.53"/><rect x="2.3" y="0.0" width="0.6" height="0.6" opacity="0.68"/><rect x="8.2" y="1.2" width="1.0" height="1.0" opacity="0.57"/><rect x="-0.1" y="3.4" width="0.8" height="0.8" opacity="0.56"/><rect x="-4.6" y="0.9" width="0.6" height="0.6" opacity="0.55"/><rect x="-1.8" y="2.4" width="1.2" height="1.2" opacity="0.58"/><rect x="-2.3" y="-0.4" width="0.9" height="0.9" opacity="0.51"/><rect x="4.1" y="-4.2" width="0.7" height="0.7" opacity="0.68"/><rect x="3.5" y="5.4" width="0.9" height="0.9" opacity="0.89"/><rect x="-1.4" y="2.3" width="1.1" height="1.1" opacity="0.99"/><rect x="4.5" y="-5.3" width="1.2" height="1.2" opacity="0.87"/><rect x="0.7" y="4.3" width="0.8" height="0.8" opacity="0.51"/><rect x="3.3" y="0.5" width="0.7" height="0.7" opacity="0.85"/><rect x="4.3" y="-1.1" width="1.2" height="1.2" opacity="0.99"/><rect x="3.7" y="-1.0" width="0.7" height="0.7" opacity="0.61"/><rect x="0.9" y="2.3" width="1.0" height="1.0" opacity="0.95"/><rect x="2.5" y="-3.5" width="1.0" height="1.0" opacity="0.90"/><rect x="5.2" y="2.7" width="1.2" height="1.2" opacity="0.89"/><rect x="0.0" y="-4.1" width="0.6" height="0.6" opacity="0.89"/><rect x="-3.6" y="5.7" width="1.3" height="1.3" opacity="0.70"/><rect x="-8.1" y="5.1" width="1.1" height="1.1" opacity="0.59"/><rect x="1.6" y="1.5" width="1.2" height="1.2" opacity="0.90"/><rect x="4.6" y="5.4" width="1.3" height="1.3" opacity="0.83"/><rect x="-3.0" y="3.7" width="0.6" height="0.6" opacity="0.51"/><rect x="5.8" y="-1.0" width="0.9" height="0.9" opacity="0.97"/><rect x="-7.6" y="3.0" width="1.2" height="1.2" opacity="0.61"/><rect x="-0.0" y="3.0" width="0.7" height="0.7" opacity="0.79"/><rect x="-0.3" y="3.8" width="0.6" height="0.6" opacity="0.96"/><rect x="-2.7" y="3.2" width="1.0" height="1.0" opacity="0.95"/><rect x="-8.0" y="3.9" width="0.9" height="0.9" opacity="0.77"/><rect x="-0.8" y="-0.1" width="0.9" height="0.9" opacity="0.59"/><rect x="7.3" y="0.2" width="0.6" height="0.6" opacity="0.74"/><rect x="-0.8" y="-4.6" width="0.8" height="0.8" opacity="0.76"/><rect x="-6.7" y="-2.2" width="0.6" height="0.6" opacity="0.78"/><rect x="0.0" y="2.9" width="1.1" height="1.1" opacity="0.75"/><rect x="-6.4" y="-2.3" width="1.2" height="1.2" opacity="0.72"/><rect x="-3.7" y="-2.8" width="0.9" height="0.9" opacity="0.85"/><rect x="-4.8" y="1.3" width="0.9" height="0.9" opacity="0.97"/><rect x="-2.6" y="-7.1" width="1.3" height="1.3" opacity="0.63"/><rect x="1.2" y="-1.7" width="0.6" height="0.6" opacity="0.72"/><rect x="2.7" y="1.2" width="0.6" height="0.6" opacity="0.83"/><rect x="1.8" y="-7.6" width="0.6" height="0.6" opacity="0.86"/><rect x="-1.2" y="-1.7" width="1.2" height="1.2" opacity="0.98"/><rect x="-3.8" y="2.5" width="1.3" height="1.3" opacity="0.92"/><rect x="2.3" y="3.3" width="0.9" height="0.9" opacity="0.67"/><rect x="1.2" y="3.0" width="1.1" height="1.1" opacity="0.51"/><rect x="-4.2" y="-1.3" width="0.5" height="0.5" opacity="0.67"/><rect x="-3.5" y="-3.1" width="0.6" height="0.6" opacity="0.99"/><rect x="2.5" y="1.7" width="0.5" height="0.5" opacity="0.89"/><rect x="-0.3" y="1.9" width="0.8" height="0.8" opacity="0.96"/><rect x="1.3" y="-2.6" width="0.6" height="0.6" opacity="0.96"/><rect x="-5.7" y="-2.4" width="0.6" height="0.6" opacity="0.53"/><rect x="-1.6" y="-3.5" width="0.6" height="0.6" opacity="0.97"/><rect x="-4.9" y="-4.9" width="0.6" height="0.6" opacity="0.93"/><rect x="7.4" y="2.9" width="0.9" height="0.9" opacity="0.67"/><rect x="-8.8" y="-2.7" width="0.7" height="0.7" opacity="0.56"/><rect x="-3.0" y="-0.5" width="0.6" height="0.6" opacity="0.58"/><rect x="2.6" y="0.8" width="0.7" height="0.7" opacity="0.65"/><rect x="0.2" y="-3.0" width="0.9" height="0.9" opacity="0.59"/><rect x="-0.4" y="0.6" width="0.7" height="0.7" opacity="0.51"/><rect x="-0.5" y="-4.6" width="0.7" height="0.7" opacity="0.74"/><rect x="1.8" y="-0.7" width="1.2" height="1.2" opacity="0.72"/><rect x="-7.8" y="0.2" width="0.8" height="0.8" opacity="0.75"/><rect x="-4.3" y="5.7" width="1.1" height="1.1" opacity="0.82"/><rect x="-3.1" y="1.9" width="0.5" height="0.5" opacity="0.56"/><rect x="6.1" y="2.6" width="0.7" height="0.7" opacity="0.58"/><rect x="6.8" y="3.5" width="1.2" height="1.2" opacity="0.84"/><rect x="-0.6" y="2.7" width="0.7" height="0.7" opacity="0.73"/><rect x="2.4" y="3.3" width="0.7" height="0.7" opacity="0.98"/><rect x="5.1" y="-0.8" width="0.7" height="0.7" opacity="0.98"/><rect x="-1.4" y="3.2" width="0.5" height="0.5" opacity="0.69"/><rect x="-4.8" y="0.7" width="0.7" height="0.7" opacity="0.75"/><rect x="3.2" y="0.1" width="0.6" height="0.6" opacity="0.70"/></g>
<g transform="translate(93.5,325) rotate(0)" fill="#fff"><rect x="0.8" y="0.2" width="0.7" height="0.7" opacity="0.62"/><rect x="-4.3" y="-2.0" width="1.1" height="1.1" opacity="0.83"/><rect x="-1.8" y="-6.4" width="0.8" height="0.8" opacity="0.66"/><rect x="2.3" y="-0.2" width="1.1" height="1.1" opacity="0.82"/><rect x="7.5" y="1.6" width="1.2" height="1.2" opacity="0.81"/><rect x="-0.8" y="-5.8" width="0.6" height="0.6" opacity="0.76"/><rect x="-7.8" y="-0.2" width="1.1" height="1.1" opacity="0.91"/><rect x="-7.5" y="-3.4" width="1.0" height="1.0" opacity="0.85"/><rect x="0.1" y="0.8" width="0.6" height="0.6" opacity="0.68"/><rect x="6.1" y="3.7" width="0.9" height="0.9" opacity="0.81"/><rect x="-4.3" y="-3.4" width="0.9" height="0.9" opacity="0.50"/><rect x="2.0" y="-5.0" width="0.9" height="0.9" opacity="0.77"/><rect x="-0.8" y="-1.0" width="1.1" height="1.1" opacity="0.63"/><rect x="2.9" y="1.1" width="1.1" height="1.1" opacity="0.60"/><rect x="-4.0" y="0.1" width="0.9" height="0.9" opacity="0.84"/><rect x="0.6" y="-4.4" width="1.0" height="1.0" opacity="0.54"/><rect x="1.9" y="1.9" width="1.1" height="1.1" opacity="0.65"/><rect x="-0.6" y="-0.2" width="0.5" height="0.5" opacity="0.63"/><rect x="-3.0" y="-4.3" width="1.0" height="1.0" opacity="0.65"/><rect x="-4.5" y="-0.4" width="0.9" height="0.9" opacity="0.56"/><rect x="2.1" y="-1.3" width="1.3" height="1.3" opacity="0.97"/><rect x="4.5" y="0.4" width="1.2" height="1.2" opacity="0.98"/><rect x="-3.1" y="0.8" width="0.7" height="0.7" opacity="0.97"/><rect x="1.3" y="4.1" width="0.6" height="0.6" opacity="0.76"/><rect x="2.1" y="-0.5" width="1.2" height="1.2" opacity="0.75"/><rect x="4.8" y="-3.2" width="0.7" height="0.7" opacity="0.95"/><rect x="-0.9" y="0.1" width="0.5" height="0.5" opacity="0.75"/><rect x="-3.3" y="0.8" width="0.6" height="0.6" opacity="0.67"/><rect x="-3.2" y="5.6" width="0.5" height="0.5" opacity="0.88"/><rect x="1.1" y="-1.4" width="1.2" height="1.2" opacity="0.86"/><rect x="2.8" y="-1.5" width="0.8" height="0.8" opacity="0.70"/><rect x="5.5" y="-0.0" width="0.8" height="0.8" opacity="0.71"/><rect x="-0.2" y="1.0" width="0.6" height="0.6" opacity="0.92"/><rect x="0.0" y="2.5" width="0.9" height="0.9" opacity="0.59"/><rect x="-7.2" y="5.7" width="1.2" height="1.2" opacity="0.91"/><rect x="-6.2" y="-5.2" width="1.3" height="1.3" opacity="0.77"/><rect x="-0.2" y="-1.0" width="1.1" height="1.1" opacity="0.73"/><rect x="0.1" y="-4.6" width="0.7" height="0.7" opacity="0.52"/><rect x="1.9" y="-0.7" width="0.9" height="0.9" opacity="0.67"/><rect x="-2.0" y="5.0" width="1.3" height="1.3" opacity="0.63"/><rect x="-1.9" y="-2.2" width="0.9" height="0.9" opacity="0.70"/><rect x="1.2" y="1.6" width="0.7" height="0.7" opacity="0.95"/><rect x="-2.9" y="0.0" width="1.2" height="1.2" opacity="1.00"/><rect x="-2.1" y="0.5" width="0.7" height="0.7" opacity="0.55"/><rect x="-1.0" y="1.2" width="0.7" height="0.7" opacity="0.63"/><rect x="-7.7" y="-2.8" width="1.1" height="1.1" opacity="0.71"/><rect x="-4.3" y="2.0" width="0.8" height="0.8" opacity="0.67"/><rect x="3.1" y="1.0" width="1.3" height="1.3" opacity="0.56"/><rect x="-5.8" y="-0.1" width="1.2" height="1.2" opacity="0.61"/><rect x="-0.4" y="2.4" width="0.8" height="0.8" opacity="0.72"/><rect x="7.6" y="-1.8" width="1.2" height="1.2" opacity="0.51"/><rect x="6.3" y="1.0" width="1.2" height="1.2" opacity="0.74"/><rect x="-0.1" y="-0.0" width="0.8" height="0.8" opacity="0.96"/><rect x="3.7" y="-5.6" width="1.3" height="1.3" opacity="0.62"/><rect x="1.8" y="1.2" width="0.9" height="0.9" opacity="0.84"/><rect x="6.1" y="-1.8" width="1.0" height="1.0" opacity="0.88"/><rect x="-5.0" y="1.1" width="0.5" height="0.5" opacity="0.89"/><rect x="-2.1" y="-2.1" width="0.6" height="0.6" opacity="0.63"/><rect x="-4.2" y="-3.7" width="0.6" height="0.6" opacity="0.54"/><rect x="-5.3" y="-0.6" width="0.8" height="0.8" opacity="0.61"/><rect x="-0.5" y="-0.3" width="0.7" height="0.7" opacity="0.73"/><rect x="5.7" y="-1.2" width="1.2" height="1.2" opacity="0.74"/><rect x="0.3" y="2.4" width="1.3" height="1.3" opacity="0.85"/><rect x="-0.3" y="0.6" width="0.9" height="0.9" opacity="0.84"/><rect x="-2.8" y="1.2" width="1.0" height="1.0" opacity="0.96"/><rect x="0.2" y="0.8" width="0.8" height="0.8" opacity="0.71"/><rect x="-1.1" y="-1.9" width="1.1" height="1.1" opacity="0.87"/><rect x="-2.8" y="-0.1" width="1.3" height="1.3" opacity="0.66"/><rect x="1.3" y="-2.1" width="0.7" height="0.7" opacity="0.88"/><rect x="-2.6" y="0.1" width="0.7" height="0.7" opacity="0.71"/><rect x="-5.1" y="-6.7" width="0.6" height="0.6" opacity="0.70"/><rect x="0.8" y="0.8" width="0.5" height="0.5" opacity="0.70"/><rect x="6.8" y="-3.9" width="1.1" height="1.1" opacity="1.00"/><rect x="3.3" y="-1.2" width="0.6" height="0.6" opacity="0.97"/><rect x="-0.0" y="-0.8" width="1.0" height="1.0" opacity="0.69"/><rect x="-2.6" y="2.0" width="0.6" height="0.6" opacity="0.50"/><rect x="-0.7" y="2.9" width="1.3" height="1.3" opacity="0.56"/><rect x="2.7" y="-0.5" width="0.8" height="0.8" opacity="0.91"/><rect x="1.9" y="-3.0" width="0.5" height="0.5" opacity="0.74"/><rect x="-6.4" y="5.1" width="0.7" height="0.7" opacity="0.68"/><rect x="0.8" y="-0.5" width="0.8" height="0.8" opacity="0.91"/><rect x="0.1" y="-0.9" width="0.5" height="0.5" opacity="0.53"/><rect x="2.8" y="-1.2" width="1.1" height="1.1" opacity="0.95"/><rect x="-1.7" y="2.2" width="1.3" height="1.3" opacity="0.81"/><rect x="-0.5" y="5.0" width="0.8" height="0.8" opacity="0.64"/></g>
<g transform="translate(125.5,325) rotate(0)" fill="#fff"><rect x="6.1" y="0.1" width="1.4" height="1.4" opacity="0.82"/><rect x="0.8" y="-0.3" width="0.8" height="0.8" opacity="0.74"/><rect x="-2.1" y="1.8" width="1.0" height="1.0" opacity="0.75"/><rect x="2.1" y="-1.0" width="1.3" height="1.3" opacity="0.87"/><rect x="2.8" y="-5.6" width="1.1" height="1.1" opacity="0.66"/><rect x="-1.5" y="3.1" width="1.3" height="1.3" opacity="0.54"/><rect x="2.0" y="5.8" width="0.8" height="0.8" opacity="0.53"/><rect x="4.5" y="1.0" width="0.9" height="0.9" opacity="0.99"/><rect x="-0.1" y="1.5" width="0.7" height="0.7" opacity="0.75"/><rect x="-1.0" y="-3.8" width="0.8" height="0.8" opacity="0.71"/><rect x="-4.0" y="-3.7" width="1.3" height="1.3" opacity="0.92"/><rect x="-0.9" y="-1.6" width="1.4" height="1.4" opacity="0.65"/><rect x="-3.2" y="-1.4" width="1.3" height="1.3" opacity="0.60"/><rect x="0.0" y="2.7" width="0.7" height="0.7" opacity="0.94"/><rect x="-2.8" y="-1.5" width="1.0" height="1.0" opacity="1.00"/><rect x="-2.6" y="-0.1" width="1.3" height="1.3" opacity="0.83"/><rect x="1.7" y="-0.1" width="1.0" height="1.0" opacity="0.91"/><rect x="4.3" y="-6.8" width="0.6" height="0.6" opacity="0.65"/><rect x="1.7" y="1.6" width="1.5" height="1.5" opacity="0.79"/><rect x="3.2" y="-1.5" width="1.4" height="1.4" opacity="0.72"/><rect x="-0.4" y="6.3" width="1.5" height="1.5" opacity="0.55"/><rect x="-4.2" y="-2.9" width="0.8" height="0.8" opacity="0.68"/><rect x="1.5" y="1.9" width="0.8" height="0.8" opacity="0.80"/><rect x="-1.4" y="-2.0" width="0.6" height="0.6" opacity="0.66"/><rect x="-1.0" y="-2.1" width="0.9" height="0.9" opacity="0.60"/><rect x="1.3" y="-4.4" width="0.7" height="0.7" opacity="0.55"/><rect x="-3.6" y="2.8" width="1.2" height="1.2" opacity="0.55"/><rect x="2.9" y="4.8" width="1.0" height="1.0" opacity="0.64"/><rect x="-1.8" y="4.3" width="0.9" height="0.9" opacity="0.71"/><rect x="-1.6" y="1.8" width="1.3" height="1.3" opacity="0.60"/><rect x="7.8" y="0.3" width="1.0" height="1.0" opacity="0.91"/><rect x="-6.3" y="4.2" width="1.0" height="1.0" opacity="0.58"/><rect x="4.6" y="0.4" width="1.2" height="1.2" opacity="0.95"/><rect x="4.3" y="2.7" width="0.9" height="0.9" opacity="0.75"/><rect x="1.8" y="2.4" width="1.1" height="1.1" opacity="0.96"/><rect x="3.3" y="2.7" width="1.3" height="1.3" opacity="0.98"/><rect x="0.6" y="1.8" width="1.4" height="1.4" opacity="0.99"/><rect x="-1.2" y="0.1" width="1.4" height="1.4" opacity="0.69"/><rect x="4.2" y="-2.9" width="1.3" height="1.3" opacity="0.58"/><rect x="0.6" y="-2.5" width="1.0" height="1.0" opacity="0.92"/><rect x="1.1" y="-2.0" width="0.8" height="0.8" opacity="0.70"/><rect x="-3.6" y="-0.4" width="0.7" height="0.7" opacity="0.62"/><rect x="-1.2" y="-7.7" width="0.6" height="0.6" opacity="0.78"/><rect x="0.0" y="-1.0" width="1.4" height="1.4" opacity="0.56"/><rect x="-3.7" y="-2.7" width="1.2" height="1.2" opacity="0.65"/><rect x="-4.2" y="2.3" width="1.0" height="1.0" opacity="0.83"/><rect x="-3.7" y="1.3" width="0.6" height="0.6" opacity="0.81"/><rect x="-2.7" y="0.2" width="1.3" height="1.3" opacity="0.89"/><rect x="-2.2" y="0.6" width="1.0" height="1.0" opacity="0.55"/><rect x="2.7" y="2.8" width="0.7" height="0.7" opacity="0.72"/><rect x="-1.0" y="-0.1" width="1.2" height="1.2" opacity="0.54"/><rect x="-0.7" y="-6.3" width="1.1" height="1.1" opacity="0.53"/><rect x="-3.5" y="-0.1" width="1.5" height="1.5" opacity="0.57"/><rect x="-0.8" y="-6.6" width="0.8" height="0.8" opacity="0.99"/><rect x="1.9" y="-1.1" width="1.3" height="1.3" opacity="0.97"/><rect x="3.1" y="1.4" width="1.3" height="1.3" opacity="0.58"/><rect x="2.3" y="-1.8" width="1.3" height="1.3" opacity="0.57"/><rect x="0.7" y="2.7" width="1.1" height="1.1" opacity="0.66"/><rect x="2.2" y="0.5" width="0.7" height="0.7" opacity="0.97"/><rect x="-3.3" y="-7.0" width="0.8" height="0.8" opacity="0.89"/><rect x="3.4" y="3.0" width="1.2" height="1.2" opacity="0.68"/><rect x="3.2" y="-3.3" width="1.1" height="1.1" opacity="0.94"/><rect x="-2.5" y="-2.7" width="1.3" height="1.3" opacity="0.63"/><rect x="4.8" y="-0.3" width="0.9" height="0.9" opacity="0.88"/><rect x="-2.1" y="0.8" width="1.3" height="1.3" opacity="0.52"/><rect x="1.2" y="-2.5" width="1.2" height="1.2" opacity="0.99"/><rect x="-4.6" y="-2.8" width="0.9" height="0.9" opacity="0.50"/><rect x="2.0" y="0.4" width="1.2" height="1.2" opacity="0.72"/><rect x="-7.7" y="-0.6" width="0.7" height="0.7" opacity="0.61"/><rect x="-0.4" y="-0.6" width="0.6" height="0.6" opacity="0.68"/><rect x="2.7" y="2.1" width="0.8" height="0.8" opacity="0.79"/><rect x="-2.1" y="-1.3" width="1.2" height="1.2" opacity="0.74"/></g>
<g transform="translate(157.5,325) rotate(0)" fill="#fff"><rect x="5.4" y="6.2" width="0.6" height="0.6" opacity="0.49"/><rect x="5.6" y="3.8" width="1.0" height="1.0" opacity="0.87"/><rect x="-3.6" y="2.5" width="0.5" height="0.5" opacity="0.79"/><rect x="-4.7" y="-1.9" width="0.9" height="0.9" opacity="0.67"/><rect x="6.7" y="-2.8" width="0.6" height="0.6" opacity="0.94"/><rect x="6.0" y="1.7" width="0.7" height="0.7" opacity="0.54"/><rect x="7.0" y="2.7" width="0.5" height="0.5" opacity="0.73"/><rect x="3.0" y="-1.2" width="0.6" height="0.6" opacity="0.76"/><rect x="-6.8" y="-0.3" width="1.0" height="1.0" opacity="0.50"/><rect x="-1.7" y="4.3" width="0.5" height="0.5" opacity="0.93"/><rect x="1.5" y="-7.0" width="0.5" height="0.5" opacity="0.91"/><rect x="-0.2" y="-5.8" width="0.9" height="0.9" opacity="0.67"/><rect x="0.4" y="2.7" width="0.6" height="0.6" opacity="0.42"/><rect x="-3.8" y="6.3" width="0.9" height="0.9" opacity="0.91"/><rect x="-1.0" y="-4.3" width="0.8" height="0.8" opacity="0.66"/><rect x="1.5" y="-6.0" width="0.7" height="0.7" opacity="0.79"/><rect x="3.9" y="-0.9" width="1.0" height="1.0" opacity="0.41"/><rect x="-0.3" y="4.1" width="0.9" height="0.9" opacity="0.97"/><rect x="-0.1" y="-4.9" width="1.0" height="1.0" opacity="0.60"/><rect x="0.6" y="8.1" width="0.9" height="0.9" opacity="0.82"/><rect x="-4.3" y="-7.2" width="0.8" height="0.8" opacity="0.90"/><rect x="-2.5" y="-7.4" width="0.8" height="0.8" opacity="0.83"/><rect x="-4.3" y="-2.0" width="0.6" height="0.6" opacity="0.77"/><rect x="7.2" y="3.8" width="0.6" height="0.6" opacity="0.42"/><rect x="6.4" y="5.1" width="0.7" height="0.7" opacity="0.49"/><rect x="1.7" y="0.3" width="0.9" height="0.9" opacity="0.78"/><rect x="-2.4" y="-6.9" width="0.5" height="0.5" opacity="0.75"/><rect x="-5.0" y="5.8" width="1.0" height="1.0" opacity="0.93"/><rect x="7.2" y="3.2" width="1.0" height="1.0" opacity="0.97"/><rect x="3.0" y="2.4" width="0.6" height="0.6" opacity="0.42"/><rect x="4.4" y="-6.3" width="0.9" height="0.9" opacity="0.90"/><rect x="-3.1" y="-3.4" width="0.6" height="0.6" opacity="0.46"/><rect x="0.2" y="-3.8" width="0.7" height="0.7" opacity="0.65"/><rect x="4.3" y="0.6" width="0.7" height="0.7" opacity="0.83"/><rect x="-3.3" y="3.6" width="1.1" height="1.1" opacity="0.70"/><rect x="4.0" y="-5.4" width="0.5" height="0.5" opacity="0.65"/><rect x="-6.9" y="2.9" width="0.7" height="0.7" opacity="0.82"/><rect x="-3.8" y="-0.9" width="1.0" height="1.0" opacity="0.45"/><rect x="1.5" y="-3.2" width="0.5" height="0.5" opacity="0.52"/><rect x="0.6" y="-8.4" width="0.5" height="0.5" opacity="0.69"/><rect x="-7.6" y="0.4" width="0.6" height="0.6" opacity="0.70"/><rect x="-4.4" y="6.4" width="0.7" height="0.7" opacity="0.97"/><rect x="-0.8" y="3.9" width="0.9" height="0.9" opacity="0.70"/><rect x="5.2" y="4.3" width="0.5" height="0.5" opacity="0.87"/><rect x="-2.5" y="-7.1" width="0.9" height="0.9" opacity="0.61"/><rect x="-4.3" y="3.1" width="1.0" height="1.0" opacity="0.45"/><rect x="1.0" y="-0.9" width="0.6" height="0.6" opacity="0.56"/><rect x="4.9" y="-3.5" width="0.7" height="0.7" opacity="0.93"/><rect x="0.6" y="5.7" width="0.8" height="0.8" opacity="0.85"/><rect x="0.1" y="-6.8" width="0.7" height="0.7" opacity="0.60"/><rect x="4.4" y="6.5" width="0.9" height="0.9" opacity="0.85"/><rect x="2.7" y="4.9" width="1.0" height="1.0" opacity="0.75"/><rect x="4.1" y="4.1" width="1.0" height="1.0" opacity="0.54"/><rect x="1.7" y="4.4" width="0.9" height="0.9" opacity="0.91"/><rect x="1.9" y="2.8" width="0.6" height="0.6" opacity="0.60"/><rect x="-3.4" y="-0.5" width="0.7" height="0.7" opacity="0.51"/><rect x="7.2" y="-1.1" width="0.6" height="0.6" opacity="0.98"/><rect x="4.2" y="3.1" width="1.1" height="1.1" opacity="0.88"/><rect x="-0.6" y="-5.6" width="0.6" height="0.6" opacity="0.78"/><rect x="3.0" y="2.4" width="0.7" height="0.7" opacity="0.42"/><rect x="-6.1" y="4.5" width="0.9" height="0.9" opacity="0.70"/><rect x="-3.9" y="-4.3" width="0.6" height="0.6" opacity="0.76"/><rect x="-6.0" y="4.1" width="1.0" height="1.0" opacity="0.66"/><rect x="-6.6" y="-3.3" width="0.8" height="0.8" opacity="0.54"/><rect x="-1.4" y="-7.9" width="1.0" height="1.0" opacity="0.82"/><rect x="4.2" y="-5.6" width="0.9" height="0.9" opacity="0.67"/><rect x="-2.6" y="6.2" width="0.6" height="0.6" opacity="0.65"/><rect x="1.5" y="-7.0" width="0.9" height="0.9" opacity="0.55"/><rect x="-5.1" y="2.6" width="0.9" height="0.9" opacity="0.65"/><rect x="-3.7" y="-7.3" width="0.6" height="0.6" opacity="0.79"/><rect x="0.9" y="-5.2" width="0.8" height="0.8" opacity="0.98"/><rect x="6.1" y="1.5" width="0.6" height="0.6" opacity="0.87"/><rect x="5.7" y="-2.2" width="0.6" height="0.6" opacity="0.74"/><rect x="-7.0" y="-1.8" width="0.8" height="0.8" opacity="0.78"/><rect x="2.9" y="-5.4" width="0.7" height="0.7" opacity="0.97"/><rect x="1.7" y="6.8" width="0.7" height="0.7" opacity="0.86"/><rect x="6.1" y="5.9" width="0.7" height="0.7" opacity="0.43"/><rect x="-0.8" y="5.3" width="0.5" height="0.5" opacity="0.65"/><rect x="-6.2" y="3.4" width="0.7" height="0.7" opacity="0.56"/><rect x="1.2" y="7.2" width="1.1" height="1.1" opacity="0.72"/><rect x="1.5" y="7.5" width="0.7" height="0.7" opacity="0.53"/><rect x="5.2" y="5.4" width="1.0" height="1.0" opacity="0.78"/><rect x="-6.3" y="1.2" width="0.6" height="0.6" opacity="0.98"/><rect x="-4.1" y="5.4" width="1.0" height="1.0" opacity="0.89"/><rect x="-4.5" y="0.9" width="0.8" height="0.8" opacity="0.48"/><rect x="2.5" y="-4.4" width="1.0" height="1.0" opacity="0.56"/><rect x="-3.0" y="3.0" width="0.8" height="0.8" opacity="0.51"/><rect x="7.2" y="0.1" width="0.7" height="0.7" opacity="0.55"/><rect x="-1.9" y="5.6" width="0.8" height="0.8" opacity="0.78"/><rect x="-2.8" y="-4.3" width="1.1" height="1.1" opacity="0.91"/><rect x="7.2" y="2.7" width="1.0" height="1.0" opacity="0.87"/><rect x="4.9" y="6.0" width="0.9" height="0.9" opacity="0.41"/><rect x="8.3" y="0.6" width="0.9" height="0.9" opacity="0.55"/><rect x="2.6" y="1.9" width="0.6" height="0.6" opacity="0.87"/><rect x="-1.9" y="2.7" width="1.0" height="1.0" opacity="0.88"/><rect x="4.0" y="7.0" width="0.9" height="0.9" opacity="0.87"/><rect x="-3.9" y="-7.0" width="1.0" height="1.0" opacity="0.90"/><rect x="2.3" y="6.7" width="0.8" height="0.8" opacity="0.85"/><rect x="-7.4" y="3.0" width="0.8" height="0.8" opacity="0.56"/><rect x="0.3" y="3.2" width="0.8" height="0.8" opacity="0.44"/><rect x="-3.2" y="0.7" width="0.8" height="0.8" opacity="0.70"/><rect x="-7.7" y="-1.9" width="0.5" height="0.5" opacity="0.90"/><rect x="-6.2" y="1.3" width="0.9" height="0.9" opacity="0.90"/><rect x="-3.9" y="3.9" width="1.1" height="1.1" opacity="0.45"/><rect x="-4.4" y="-5.1" width="0.5" height="0.5" opacity="0.77"/><rect x="-3.4" y="-7.5" width="0.7" height="0.7" opacity="0.99"/><rect x="-5.9" y="-0.4" width="1.0" height="1.0" opacity="0.42"/><rect x="-1.3" y="-6.6" width="0.7" height="0.7" opacity="0.92"/><rect x="-3.9" y="4.4" width="0.8" height="0.8" opacity="0.86"/><rect x="1.4" y="5.4" width="0.8" height="0.8" opacity="0.73"/><rect x="2.1" y="-4.1" width="1.0" height="1.0" opacity="0.64"/><rect x="-4.4" y="-0.1" width="0.8" height="0.8" opacity="0.98"/><rect x="-4.3" y="-6.2" width="0.7" height="0.7" opacity="0.59"/><rect x="-2.0" y="6.2" width="0.9" height="0.9" opacity="0.87"/><rect x="7.0" y="1.8" width="1.0" height="1.0" opacity="0.73"/><rect x="4.4" y="1.4" width="0.5" height="0.5" opacity="0.51"/><rect x="5.8" y="-3.1" width="0.9" height="0.9" opacity="0.87"/><rect x="5.6" y="-3.6" width="0.9" height="0.9" opacity="0.78"/><rect x="-2.2" y="-6.2" width="0.9" height="0.9" opacity="0.53"/><rect x="-2.9" y="-5.0" width="1.0" height="1.0" opacity="0.46"/><rect x="0.7" y="1.5" width="1.0" height="1.0" opacity="0.95"/><rect x="-2.9" y="-4.3" width="1.0" height="1.0" opacity="0.87"/><rect x="-4.0" y="-1.6" width="0.7" height="0.7" opacity="0.65"/><rect x="-2.3" y="5.1" width="0.9" height="0.9" opacity="0.96"/><rect x="6.0" y="2.2" width="0.5" height="0.5" opacity="0.47"/><rect x="2.4" y="-6.0" width="1.1" height="1.1" opacity="0.67"/><rect x="5.3" y="0.5" width="0.9" height="0.9" opacity="0.96"/><rect x="5.8" y="-0.7" width="0.7" height="0.7" opacity="0.46"/><rect x="-2.4" y="-3.1" width="0.6" height="0.6" opacity="0.41"/><rect x="7.0" y="0.2" width="0.6" height="0.6" opacity="0.98"/><rect x="6.7" y="4.2" width="0.6" height="0.6" opacity="0.41"/><rect x="-0.8" y="-4.1" width="0.9" height="0.9" opacity="0.51"/><rect x="7.1" y="2.3" width="0.9" height="0.9" opacity="0.91"/><rect x="-0.3" y="-2.4" width="0.9" height="0.9" opacity="0.83"/><rect x="-8.0" y="2.0" width="0.7" height="0.7" opacity="0.98"/><rect x="-0.2" y="-0.9" width="0.5" height="0.5" opacity="0.79"/><rect x="1.0" y="-2.2" width="0.7" height="0.7" opacity="0.84"/><rect x="4.0" y="6.8" width="0.8" height="0.8" opacity="0.44"/><rect x="-4.3" y="4.8" width="0.8" height="0.8" opacity="0.81"/><rect x="4.7" y="6.0" width="0.7" height="0.7" opacity="0.79"/><rect x="-3.8" y="-4.0" width="0.7" height="0.7" opacity="0.87"/><rect x="7.1" y="-2.6" width="0.8" height="0.8" opacity="0.58"/><rect x="7.8" y="3.1" width="0.9" height="0.9" opacity="0.90"/><rect x="-3.3" y="5.8" width="1.1" height="1.1" opacity="0.90"/><rect x="-3.8" y="-2.8" width="0.8" height="0.8" opacity="0.93"/><rect x="-5.0" y="4.9" width="0.9" height="0.9" opacity="0.94"/><rect x="1.6" y="-4.2" width="0.5" height="0.5" opacity="0.56"/><rect x="-5.8" y="3.0" width="1.0" height="1.0" opacity="0.93"/><rect x="7.5" y="2.0" width="1.0" height="1.0" opacity="0.92"/><rect x="-4.0" y="-1.9" width="1.0" height="1.0" opacity="0.88"/><rect x="-3.2" y="-7.4" width="0.7" height="0.7" opacity="0.45"/><rect x="-7.2" y="-2.5" width="0.6" height="0.6" opacity="0.85"/><rect x="3.7" y="-1.7" width="0.9" height="0.9" opacity="0.81"/><rect x="-3.8" y="0.8" width="0.7" height="0.7" opacity="0.85"/><rect x="1.5" y="-5.6" width="0.6" height="0.6" opacity="0.88"/><rect x="0.6" y="-4.1" width="0.8" height="0.8" opacity="0.94"/><rect x="4.6" y="-4.1" width="0.8" height="0.8" opacity="0.75"/><rect x="1.4" y="3.5" width="0.6" height="0.6" opacity="0.82"/><rect x="-4.2" y="4.8" width="0.7" height="0.7" opacity="0.71"/><rect x="1.1" y="1.4" width="1.1" height="1.1" opacity="0.62"/><rect x="5.3" y="4.2" width="1.0" height="1.0" opacity="0.49"/><rect x="-4.1" y="-2.9" width="0.8" height="0.8" opacity="0.41"/><rect x="8.3" y="1.8" width="1.0" height="1.0" opacity="0.69"/><rect x="-4.0" y="-1.8" width="1.0" height="1.0" opacity="0.66"/><rect x="7.0" y="-2.5" width="1.0" height="1.0" opacity="0.98"/><rect x="-0.0" y="1.7" width="0.6" height="0.6" opacity="0.51"/><rect x="1.7" y="1.0" width="0.8" height="0.8" opacity="0.92"/><rect x="-8.0" y="2.1" width="1.0" height="1.0" opacity="0.44"/><rect x="-4.4" y="-3.1" width="0.6" height="0.6" opacity="0.98"/><rect x="-0.3" y="6.4" width="0.9" height="0.9" opacity="0.97"/></g>
<g transform="translate(189.5,325) rotate(0)" fill="#fff"><rect x="-2.6" y="-4.7" width="0.8" height="0.8" opacity="0.40"/><rect x="8.3" y="-1.8" width="0.6" height="0.6" opacity="0.32"/><rect x="-0.2" y="5.0" width="1.0" height="1.0" opacity="0.84"/><rect x="1.0" y="-1.6" width="1.0" height="1.0" opacity="0.73"/><rect x="-5.1" y="-6.7" width="0.5" height="0.5" opacity="0.39"/><rect x="0.3" y="-8.2" width="0.9" height="0.9" opacity="0.48"/><rect x="-6.2" y="-4.0" width="0.6" height="0.6" opacity="0.49"/><rect x="-0.1" y="3.0" width="0.8" height="0.8" opacity="0.40"/><rect x="0.2" y="3.2" width="0.9" height="0.9" opacity="0.31"/><rect x="-0.8" y="-3.7" width="0.5" height="0.5" opacity="0.86"/><rect x="1.5" y="8.1" width="1.0" height="1.0" opacity="0.83"/><rect x="3.6" y="4.4" width="0.6" height="0.6" opacity="0.86"/><rect x="3.7" y="-5.6" width="0.8" height="0.8" opacity="0.50"/><rect x="2.6" y="-5.3" width="0.9" height="0.9" opacity="0.39"/><rect x="0.4" y="2.0" width="0.9" height="0.9" opacity="0.63"/><rect x="4.9" y="6.3" width="0.7" height="0.7" opacity="0.55"/><rect x="2.5" y="3.7" width="1.0" height="1.0" opacity="0.50"/><rect x="2.9" y="5.2" width="0.7" height="0.7" opacity="0.84"/><rect x="6.3" y="5.5" width="0.5" height="0.5" opacity="0.84"/><rect x="-1.9" y="-3.4" width="0.8" height="0.8" opacity="0.47"/><rect x="-0.2" y="3.8" width="0.7" height="0.7" opacity="0.89"/><rect x="8.2" y="-0.1" width="0.6" height="0.6" opacity="0.47"/><rect x="1.6" y="-1.2" width="0.9" height="0.9" opacity="0.48"/><rect x="1.1" y="-0.1" width="1.0" height="1.0" opacity="0.50"/><rect x="0.2" y="0.3" width="1.0" height="1.0" opacity="0.62"/><rect x="2.2" y="5.2" width="1.0" height="1.0" opacity="0.43"/><rect x="-2.8" y="-1.4" width="0.6" height="0.6" opacity="0.76"/><rect x="-0.9" y="-3.7" width="0.5" height="0.5" opacity="0.35"/><rect x="-4.6" y="-3.8" width="0.7" height="0.7" opacity="0.42"/><rect x="-5.4" y="-4.6" width="1.0" height="1.0" opacity="0.65"/><rect x="0.6" y="2.1" width="0.9" height="0.9" opacity="0.54"/><rect x="-0.4" y="-2.0" width="1.0" height="1.0" opacity="0.50"/><rect x="4.3" y="-6.6" width="0.8" height="0.8" opacity="0.31"/><rect x="5.0" y="-3.1" width="1.0" height="1.0" opacity="0.46"/><rect x="3.0" y="7.1" width="0.7" height="0.7" opacity="0.40"/><rect x="-4.5" y="4.7" width="0.5" height="0.5" opacity="0.61"/><rect x="-5.8" y="2.0" width="0.6" height="0.6" opacity="0.73"/><rect x="3.2" y="-7.2" width="0.7" height="0.7" opacity="0.73"/><rect x="-5.4" y="5.0" width="0.5" height="0.5" opacity="0.82"/><rect x="5.7" y="-1.7" width="0.8" height="0.8" opacity="0.62"/><rect x="-1.2" y="-0.3" width="1.1" height="1.1" opacity="0.43"/><rect x="1.1" y="2.5" width="0.7" height="0.7" opacity="0.79"/><rect x="2.6" y="0.5" width="0.9" height="0.9" opacity="0.42"/><rect x="6.5" y="0.7" width="0.8" height="0.8" opacity="0.61"/><rect x="-0.8" y="-2.6" width="1.0" height="1.0" opacity="0.73"/><rect x="2.9" y="0.8" width="0.8" height="0.8" opacity="0.60"/><rect x="-0.5" y="2.9" width="0.7" height="0.7" opacity="0.38"/><rect x="-6.6" y="-4.3" width="0.6" height="0.6" opacity="0.64"/><rect x="-0.1" y="-3.4" width="1.0" height="1.0" opacity="0.86"/><rect x="-4.2" y="3.5" width="1.0" height="1.0" opacity="0.62"/><rect x="-6.5" y="5.0" width="1.0" height="1.0" opacity="0.50"/><rect x="0.3" y="4.9" width="0.8" height="0.8" opacity="0.89"/><rect x="2.7" y="-7.7" width="1.0" height="1.0" opacity="0.81"/><rect x="5.8" y="2.0" width="1.1" height="1.1" opacity="0.86"/><rect x="0.0" y="5.5" width="0.9" height="0.9" opacity="0.52"/><rect x="-2.2" y="-0.4" width="0.8" height="0.8" opacity="0.60"/><rect x="3.1" y="0.4" width="1.1" height="1.1" opacity="0.77"/><rect x="6.2" y="-2.6" width="1.0" height="1.0" opacity="0.83"/><rect x="1.2" y="-1.0" width="0.9" height="0.9" opacity="0.46"/><rect x="-1.9" y="-4.0" width="0.8" height="0.8" opacity="0.85"/><rect x="-3.1" y="-2.9" width="0.8" height="0.8" opacity="0.56"/><rect x="4.3" y="-1.4" width="0.7" height="0.7" opacity="0.69"/><rect x="4.8" y="4.5" width="1.1" height="1.1" opacity="0.61"/><rect x="-0.7" y="5.8" width="0.8" height="0.8" opacity="0.39"/><rect x="2.2" y="2.2" width="0.7" height="0.7" opacity="0.54"/><rect x="-1.0" y="4.1" width="0.6" height="0.6" opacity="0.63"/><rect x="3.5" y="-5.6" width="0.8" height="0.8" opacity="0.69"/><rect x="2.2" y="6.8" width="0.8" height="0.8" opacity="0.63"/><rect x="-4.4" y="-3.8" width="0.7" height="0.7" opacity="0.45"/><rect x="1.1" y="6.0" width="0.7" height="0.7" opacity="0.65"/><rect x="5.0" y="0.4" width="1.0" height="1.0" opacity="0.44"/><rect x="-5.6" y="-2.1" width="0.7" height="0.7" opacity="0.89"/><rect x="-2.1" y="7.2" width="0.6" height="0.6" opacity="0.34"/><rect x="3.9" y="-4.1" width="0.5" height="0.5" opacity="0.53"/><rect x="-6.8" y="2.7" width="0.6" height="0.6" opacity="0.44"/><rect x="7.1" y="-1.8" width="0.6" height="0.6" opacity="0.50"/><rect x="-4.2" y="5.6" width="0.9" height="0.9" opacity="0.81"/><rect x="2.6" y="-5.5" width="0.9" height="0.9" opacity="0.75"/><rect x="0.4" y="-5.8" width="1.0" height="1.0" opacity="0.73"/><rect x="2.6" y="-1.5" width="1.0" height="1.0" opacity="0.30"/><rect x="0.6" y="-6.5" width="0.8" height="0.8" opacity="0.88"/><rect x="-4.9" y="-2.4" width="1.0" height="1.0" opacity="0.82"/><rect x="-4.1" y="-3.3" width="0.8" height="0.8" opacity="0.57"/><rect x="-0.8" y="-4.5" width="0.7" height="0.7" opacity="0.63"/><rect x="-3.6" y="3.2" width="1.0" height="1.0" opacity="0.81"/><rect x="-5.7" y="0.0" width="0.6" height="0.6" opacity="0.48"/><rect x="4.0" y="5.1" width="0.8" height="0.8" opacity="0.35"/><rect x="4.2" y="-2.3" width="1.0" height="1.0" opacity="0.80"/><rect x="3.7" y="-1.0" width="0.8" height="0.8" opacity="0.85"/><rect x="1.8" y="0.1" width="0.8" height="0.8" opacity="0.60"/><rect x="6.6" y="-3.6" width="0.8" height="0.8" opacity="0.90"/><rect x="-6.1" y="-0.7" width="0.9" height="0.9" opacity="0.53"/><rect x="-4.1" y="5.1" width="0.7" height="0.7" opacity="0.87"/><rect x="-2.7" y="-5.5" width="0.6" height="0.6" opacity="0.52"/><rect x="-5.2" y="3.7" width="0.8" height="0.8" opacity="0.83"/><rect x="5.8" y="-1.3" width="0.8" height="0.8" opacity="0.67"/><rect x="5.0" y="-0.1" width="0.8" height="0.8" opacity="0.79"/><rect x="2.3" y="4.2" width="1.1" height="1.1" opacity="0.80"/><rect x="-2.8" y="-0.2" width="1.0" height="1.0" opacity="0.71"/><rect x="3.6" y="-7.6" width="1.0" height="1.0" opacity="0.55"/><rect x="2.5" y="3.8" width="0.8" height="0.8" opacity="0.60"/><rect x="1.4" y="3.4" width="0.9" height="0.9" opacity="0.66"/><rect x="-5.1" y="6.8" width="0.9" height="0.9" opacity="0.33"/><rect x="-6.4" y="4.0" width="0.7" height="0.7" opacity="0.71"/><rect x="4.7" y="0.1" width="1.0" height="1.0" opacity="0.65"/><rect x="-1.9" y="-3.3" width="0.8" height="0.8" opacity="0.63"/><rect x="-0.7" y="6.8" width="0.8" height="0.8" opacity="0.90"/><rect x="-4.9" y="-2.5" width="0.6" height="0.6" opacity="0.39"/><rect x="0.2" y="-2.8" width="0.6" height="0.6" opacity="0.40"/><rect x="-7.6" y="-1.1" width="0.9" height="0.9" opacity="0.78"/><rect x="0.9" y="0.4" width="1.0" height="1.0" opacity="0.49"/><rect x="-1.1" y="-4.9" width="0.6" height="0.6" opacity="0.46"/><rect x="6.6" y="4.7" width="0.8" height="0.8" opacity="0.51"/><rect x="-5.0" y="1.6" width="0.5" height="0.5" opacity="0.83"/><rect x="-7.2" y="-4.1" width="0.8" height="0.8" opacity="0.67"/><rect x="0.0" y="1.8" width="1.1" height="1.1" opacity="0.81"/><rect x="-3.2" y="7.4" width="1.0" height="1.0" opacity="0.48"/><rect x="-6.7" y="-5.0" width="0.8" height="0.8" opacity="0.87"/><rect x="0.2" y="5.3" width="0.9" height="0.9" opacity="0.43"/><rect x="-2.9" y="7.4" width="0.8" height="0.8" opacity="0.78"/><rect x="0.1" y="3.5" width="0.7" height="0.7" opacity="0.41"/><rect x="4.5" y="-0.8" width="0.8" height="0.8" opacity="0.37"/><rect x="-5.2" y="-1.1" width="0.7" height="0.7" opacity="0.34"/><rect x="5.5" y="5.4" width="0.7" height="0.7" opacity="0.45"/><rect x="1.6" y="4.2" width="0.6" height="0.6" opacity="0.32"/><rect x="-2.5" y="-4.3" width="0.6" height="0.6" opacity="0.72"/><rect x="3.7" y="2.4" width="1.0" height="1.0" opacity="0.38"/><rect x="-7.3" y="2.7" width="1.0" height="1.0" opacity="0.40"/><rect x="-4.4" y="5.8" width="0.7" height="0.7" opacity="0.88"/><rect x="2.2" y="8.0" width="0.8" height="0.8" opacity="0.44"/><rect x="-2.9" y="0.9" width="0.9" height="0.9" opacity="0.46"/><rect x="5.3" y="-3.8" width="0.7" height="0.7" opacity="0.45"/><rect x="-3.0" y="-2.5" width="1.0" height="1.0" opacity="0.37"/><rect x="-6.2" y="-0.5" width="0.7" height="0.7" opacity="0.76"/><rect x="-5.2" y="4.6" width="0.8" height="0.8" opacity="0.49"/><rect x="-1.9" y="1.6" width="0.6" height="0.6" opacity="0.81"/><rect x="-3.0" y="6.2" width="0.6" height="0.6" opacity="0.64"/><rect x="-3.9" y="4.6" width="0.7" height="0.7" opacity="0.34"/><rect x="-1.5" y="3.7" width="0.6" height="0.6" opacity="0.73"/><rect x="-1.1" y="5.3" width="1.0" height="1.0" opacity="0.76"/></g>
<g transform="translate(221.5,324)" fill="#fff"><rect x="0.1" y="-0.3" width="1.2" height="1.2" opacity="0.92"/><rect x="1.8" y="0.9" width="1.5" height="1.5" opacity="0.79"/><rect x="0.2" y="2.1" width="1.0" height="1.0" opacity="0.65"/><rect x="-1.1" y="-0.3" width="0.8" height="0.8" opacity="0.66"/><rect x="-0.9" y="-0.7" width="1.5" height="1.5" opacity="0.82"/><rect x="-2.3" y="-0.3" width="1.3" height="1.3" opacity="0.81"/><rect x="0.6" y="-0.1" width="1.7" height="1.7" opacity="0.64"/><rect x="4.0" y="-0.2" width="1.4" height="1.4" opacity="0.88"/><rect x="-1.2" y="-0.3" width="1.1" height="1.1" opacity="0.91"/><rect x="1.5" y="0.6" width="1.5" height="1.5" opacity="0.76"/><rect x="-1.2" y="0.5" width="1.7" height="1.7" opacity="0.77"/><rect x="0.6" y="-0.5" width="1.6" height="1.6" opacity="0.85"/><rect x="-0.8" y="0.9" width="1.0" height="1.0" opacity="0.87"/><rect x="-2.3" y="0.1" width="1.8" height="1.8" opacity="0.93"/><rect x="1.9" y="1.5" width="1.6" height="1.6" opacity="0.69"/><rect x="1.5" y="1.3" width="1.2" height="1.2" opacity="0.76"/><rect x="-1.7" y="-0.5" width="1.5" height="1.5" opacity="0.79"/><rect x="1.6" y="1.7" width="1.3" height="1.3" opacity="0.78"/><rect x="1.2" y="0.5" width="1.5" height="1.5" opacity="0.84"/><rect x="-2.8" y="1.9" width="1.3" height="1.3" opacity="0.90"/><rect x="-1.5" y="-0.6" width="1.8" height="1.8" opacity="0.94"/><rect x="1.9" y="0.6" width="1.1" height="1.1" opacity="0.74"/><rect x="3.1" y="0.7" width="1.1" height="1.1" opacity="0.64"/><rect x="0.8" y="1.2" width="1.1" height="1.1" opacity="0.79"/><rect x="1.0" y="2.2" width="0.8" height="0.8" opacity="0.79"/><rect x="3.6" y="1.8" width="1.8" height="1.8" opacity="0.83"/><rect x="-4.1" y="-2.4" width="1.3" height="1.3" opacity="0.91"/><rect x="4.9" y="1.1" width="1.4" height="1.4" opacity="0.85"/><rect x="1.2" y="0.7" width="1.5" height="1.5" opacity="0.61"/><rect x="2.2" y="0.3" width="1.0" height="1.0" opacity="0.86"/></g>
<g transform="translate(253.5,324)" fill="#fff"><rect x="5.2" y="1.4" width="1.3" height="1.3" opacity="0.85"/><rect x="5.1" y="3.7" width="1.3" height="1.3" opacity="0.75"/><rect x="0.8" y="-3.0" width="1.0" height="1.0" opacity="0.64"/><rect x="7.0" y="0.6" width="1.5" height="1.5" opacity="0.80"/><rect x="5.4" y="-0.1" width="1.7" height="1.7" opacity="0.66"/><rect x="3.4" y="1.4" width="2.2" height="2.2" opacity="0.64"/><rect x="-1.6" y="-2.8" width="1.2" height="1.2" opacity="0.75"/><rect x="-0.9" y="-4.3" width="1.9" height="1.9" opacity="0.77"/><rect x="0.6" y="-1.8" width="1.8" height="1.8" opacity="0.96"/><rect x="-5.7" y="0.1" width="2.0" height="2.0" opacity="0.96"/><rect x="1.8" y="0.1" width="1.9" height="1.9" opacity="0.87"/><rect x="-1.1" y="0.4" width="1.6" height="1.6" opacity="0.77"/><rect x="8.3" y="-0.6" width="1.7" height="1.7" opacity="0.92"/><rect x="-3.3" y="-2.8" width="1.8" height="1.8" opacity="0.83"/><rect x="5.6" y="1.7" width="1.7" height="1.7" opacity="0.72"/><rect x="-2.8" y="-2.4" width="2.0" height="2.0" opacity="0.69"/><rect x="3.7" y="1.5" width="1.7" height="1.7" opacity="0.82"/><rect x="3.3" y="2.6" width="1.5" height="1.5" opacity="0.70"/><rect x="4.2" y="2.9" width="1.6" height="1.6" opacity="0.64"/><rect x="-0.8" y="-2.8" width="1.8" height="1.8" opacity="0.88"/><rect x="0.3" y="-0.4" width="1.6" height="1.6" opacity="0.65"/><rect x="-1.2" y="-3.4" width="1.9" height="1.9" opacity="0.65"/><rect x="-6.6" y="-4.6" width="1.6" height="1.6" opacity="0.78"/><rect x="0.2" y="1.3" width="1.1" height="1.1" opacity="0.79"/><rect x="-0.7" y="1.6" width="1.0" height="1.0" opacity="0.69"/><rect x="3.0" y="-1.4" width="2.1" height="2.1" opacity="0.78"/><rect x="-3.6" y="-3.0" width="2.1" height="2.1" opacity="0.85"/><rect x="-3.2" y="-1.3" width="2.0" height="2.0" opacity="0.67"/><rect x="1.1" y="-4.3" width="0.9" height="0.9" opacity="0.70"/><rect x="-0.9" y="1.8" width="2.1" height="2.1" opacity="0.89"/><rect x="-2.2" y="-2.7" width="1.4" height="1.4" opacity="0.73"/><rect x="1.3" y="-0.1" width="1.2" height="1.2" opacity="0.74"/><rect x="8.5" y="2.4" width="1.5" height="1.5" opacity="0.92"/><rect x="6.1" y="3.1" width="1.1" height="1.1" opacity="0.82"/><rect x="2.1" y="-3.6" width="2.0" height="2.0" opacity="0.84"/><rect x="-3.0" y="-2.5" width="2.0" height="2.0" opacity="0.98"/><rect x="3.4" y="-0.0" width="1.5" height="1.5" opacity="0.79"/><rect x="-2.8" y="-1.5" width="1.1" height="1.1" opacity="0.93"/><rect x="6.2" y="-0.2" width="1.8" height="1.8" opacity="0.78"/><rect x="4.4" y="-1.5" width="1.0" height="1.0" opacity="0.73"/><rect x="1.5" y="0.7" width="1.7" height="1.7" opacity="0.68"/><rect x="-0.3" y="-3.3" width="1.5" height="1.5" opacity="0.97"/><rect x="2.6" y="-1.9" width="1.3" height="1.3" opacity="0.61"/><rect x="5.5" y="1.0" width="1.7" height="1.7" opacity="0.89"/><rect x="1.7" y="1.2" width="1.6" height="1.6" opacity="0.70"/><rect x="2.7" y="-0.0" width="1.6" height="1.6" opacity="0.91"/><rect x="2.5" y="-2.1" width="1.7" height="1.7" opacity="0.75"/><rect x="0.4" y="-3.1" width="1.9" height="1.9" opacity="0.66"/><rect x="-4.1" y="2.2" width="1.9" height="1.9" opacity="0.80"/><rect x="0.1" y="1.5" width="1.4" height="1.4" opacity="0.62"/><rect x="-2.0" y="-4.7" width="1.9" height="1.9" opacity="0.80"/><rect x="5.1" y="-4.7" width="1.1" height="1.1" opacity="0.68"/><rect x="2.8" y="2.6" width="1.9" height="1.9" opacity="0.97"/><rect x="-1.0" y="1.5" width="1.2" height="1.2" opacity="0.83"/><rect x="1.2" y="-1.6" width="2.1" height="2.1" opacity="0.83"/><rect x="-5.2" y="-4.2" width="1.4" height="1.4" opacity="0.91"/><rect x="3.4" y="-0.2" width="2.0" height="2.0" opacity="0.73"/><rect x="1.7" y="1.1" width="0.9" height="0.9" opacity="0.67"/><rect x="0.0" y="-1.7" width="1.0" height="1.0" opacity="0.78"/><rect x="1.9" y="-3.6" width="1.2" height="1.2" opacity="0.89"/><rect x="1.2" y="-0.4" width="2.0" height="2.0" opacity="0.95"/><rect x="-0.0" y="-2.1" width="1.3" height="1.3" opacity="0.86"/><rect x="-5.9" y="-4.5" width="1.2" height="1.2" opacity="0.73"/><rect x="-4.2" y="-2.6" width="1.8" height="1.8" opacity="0.74"/><rect x="-0.7" y="-3.7" width="1.0" height="1.0" opacity="0.85"/><rect x="5.5" y="1.9" width="2.1" height="2.1" opacity="0.95"/><rect x="-0.7" y="-2.2" width="2.2" height="2.2" opacity="0.62"/><rect x="0.2" y="-1.8" width="1.2" height="1.2" opacity="0.81"/><rect x="-4.2" y="0.5" width="1.3" height="1.3" opacity="0.87"/><rect x="0.1" y="-1.7" width="1.3" height="1.3" opacity="0.90"/></g>
<g transform="translate(29.5,356)" fill="#fff"><rect x="0.3" y="1.4" width="0.9" height="0.9" opacity="0.86"/><rect x="2.2" y="-1.7" width="1.6" height="1.6" opacity="0.71"/><rect x="2.4" y="3.1" width="1.8" height="1.8" opacity="0.91"/><rect x="1.5" y="4.7" width="1.4" height="1.4" opacity="0.99"/><rect x="-3.9" y="-2.7" width="1.6" height="1.6" opacity="0.68"/><rect x="1.8" y="3.4" width="1.9" height="1.9" opacity="0.96"/><rect x="-0.7" y="-0.4" width="1.8" height="1.8" opacity="0.78"/><rect x="5.0" y="3.3" width="2.1" height="2.1" opacity="0.76"/><rect x="-0.9" y="4.8" width="1.0" height="1.0" opacity="0.89"/><rect x="-1.1" y="-6.1" width="1.8" height="1.8" opacity="0.74"/><rect x="-0.8" y="-1.0" width="2.1" height="2.1" opacity="0.98"/><rect x="2.6" y="0.1" width="1.8" height="1.8" opacity="0.70"/><rect x="0.5" y="5.4" width="1.7" height="1.7" opacity="0.72"/><rect x="4.5" y="1.5" width="1.1" height="1.1" opacity="0.95"/><rect x="0.6" y="2.8" width="1.3" height="1.3" opacity="0.64"/><rect x="-8.2" y="-1.6" width="1.1" height="1.1" opacity="0.87"/><rect x="4.2" y="-0.4" width="1.9" height="1.9" opacity="0.94"/><rect x="4.0" y="3.7" width="1.5" height="1.5" opacity="0.77"/><rect x="4.5" y="-0.1" width="0.9" height="0.9" opacity="0.64"/><rect x="-1.6" y="-0.7" width="1.6" height="1.6" opacity="0.74"/><rect x="-0.9" y="0.6" width="1.4" height="1.4" opacity="0.86"/><rect x="8.1" y="-4.8" width="0.9" height="0.9" opacity="0.69"/><rect x="-0.1" y="-1.4" width="1.2" height="1.2" opacity="0.77"/><rect x="-3.1" y="-2.6" width="2.1" height="2.1" opacity="0.63"/><rect x="-0.9" y="-0.4" width="1.1" height="1.1" opacity="0.77"/><rect x="2.6" y="3.1" width="1.7" height="1.7" opacity="0.82"/><rect x="-7.7" y="-2.7" width="2.1" height="2.1" opacity="0.63"/><rect x="6.8" y="-5.3" width="1.2" height="1.2" opacity="0.63"/><rect x="4.4" y="0.2" width="2.2" height="2.2" opacity="0.68"/><rect x="-5.7" y="-0.6" width="1.4" height="1.4" opacity="0.60"/><rect x="-4.8" y="-4.1" width="1.6" height="1.6" opacity="0.88"/><rect x="-3.1" y="3.8" width="1.4" height="1.4" opacity="0.99"/><rect x="4.3" y="-5.1" width="1.9" height="1.9" opacity="0.96"/><rect x="-2.8" y="0.4" width="2.2" height="2.2" opacity="0.88"/><rect x="7.7" y="-1.2" width="1.8" height="1.8" opacity="0.63"/><rect x="-2.3" y="-2.3" width="1.8" height="1.8" opacity="0.73"/><rect x="2.3" y="-1.5" width="2.2" height="2.2" opacity="0.60"/><rect x="1.3" y="-1.2" width="2.2" height="2.2" opacity="0.69"/><rect x="3.6" y="-0.4" width="2.2" height="2.2" opacity="0.71"/><rect x="3.8" y="4.2" width="1.8" height="1.8" opacity="0.97"/><rect x="-1.4" y="5.9" width="2.0" height="2.0" opacity="0.74"/><rect x="-3.0" y="-4.3" width="1.0" height="1.0" opacity="0.90"/><rect x="-4.6" y="2.7" width="2.0" height="2.0" opacity="0.70"/><rect x="4.5" y="3.0" width="1.1" height="1.1" opacity="0.98"/><rect x="-4.0" y="-0.3" width="2.0" height="2.0" opacity="0.77"/><rect x="4.9" y="0.3" width="1.0" height="1.0" opacity="0.74"/><rect x="-2.2" y="3.2" width="1.4" height="1.4" opacity="1.00"/><rect x="-5.7" y="-1.3" width="1.9" height="1.9" opacity="0.90"/><rect x="3.6" y="0.0" width="1.5" height="1.5" opacity="0.86"/><rect x="-6.3" y="2.6" width="1.2" height="1.2" opacity="0.82"/><rect x="-3.8" y="-2.3" width="1.1" height="1.1" opacity="0.89"/><rect x="1.0" y="2.4" width="1.2" height="1.2" opacity="0.78"/><rect x="4.8" y="-2.0" width="1.5" height="1.5" opacity="0.92"/><rect x="3.2" y="1.9" width="1.4" height="1.4" opacity="0.62"/><rect x="2.1" y="2.7" width="1.7" height="1.7" opacity="0.70"/><rect x="-1.0" y="2.2" width="2.1" height="2.1" opacity="0.68"/><rect x="0.9" y="3.4" width="2.0" height="2.0" opacity="0.63"/><rect x="2.2" y="0.7" width="1.5" height="1.5" opacity="0.96"/><rect x="-0.5" y="-0.4" width="2.1" height="2.1" opacity="0.88"/><rect x="2.1" y="0.2" width="2.1" height="2.1" opacity="0.78"/><rect x="6.2" y="1.5" width="0.9" height="0.9" opacity="0.69"/><rect x="1.3" y="0.4" width="1.8" height="1.8" opacity="0.82"/><rect x="4.1" y="-2.0" width="1.2" height="1.2" opacity="0.63"/><rect x="-2.1" y="-1.5" width="1.9" height="1.9" opacity="0.83"/><rect x="-2.3" y="-3.2" width="1.3" height="1.3" opacity="0.95"/><rect x="4.6" y="-1.9" width="1.4" height="1.4" opacity="0.62"/><rect x="1.2" y="1.5" width="2.2" height="2.2" opacity="0.67"/><rect x="-2.3" y="2.9" width="1.4" height="1.4" opacity="0.87"/><rect x="-4.4" y="2.4" width="1.4" height="1.4" opacity="0.62"/><rect x="-1.0" y="4.5" width="1.5" height="1.5" opacity="0.82"/><rect x="-0.7" y="3.5" width="1.6" height="1.6" opacity="0.75"/><rect x="2.3" y="-3.6" width="1.1" height="1.1" opacity="0.97"/><rect x="1.1" y="6.2" width="1.6" height="1.6" opacity="0.62"/><rect x="0.1" y="3.0" width="2.1" height="2.1" opacity="0.93"/><rect x="-3.7" y="1.5" width="1.3" height="1.3" opacity="0.88"/><rect x="1.3" y="0.8" width="1.2" height="1.2" opacity="0.68"/><rect x="-1.9" y="1.4" width="1.0" height="1.0" opacity="0.95"/><rect x="-1.8" y="-4.2" width="0.9" height="0.9" opacity="0.89"/><rect x="-2.5" y="0.0" width="1.8" height="1.8" opacity="0.72"/><rect x="0.3" y="-0.3" width="1.9" height="1.9" opacity="0.89"/><rect x="-4.6" y="-1.7" width="1.0" height="1.0" opacity="0.62"/><rect x="0.7" y="-1.6" width="2.1" height="2.1" opacity="0.87"/><rect x="6.6" y="-4.2" width="1.1" height="1.1" opacity="0.66"/><rect x="3.6" y="0.4" width="1.7" height="1.7" opacity="0.73"/><rect x="1.2" y="1.8" width="1.6" height="1.6" opacity="0.69"/><rect x="1.4" y="0.4" width="1.4" height="1.4" opacity="0.86"/><rect x="-0.6" y="-3.2" width="1.2" height="1.2" opacity="0.66"/><rect x="-2.1" y="1.6" width="1.0" height="1.0" opacity="0.93"/><rect x="-3.9" y="-3.1" width="1.8" height="1.8" opacity="0.81"/><rect x="-3.6" y="-0.2" width="1.9" height="1.9" opacity="0.80"/><rect x="-2.4" y="-0.5" width="1.3" height="1.3" opacity="0.83"/><rect x="-2.2" y="0.2" width="1.9" height="1.9" opacity="0.91"/><rect x="-0.2" y="-1.0" width="1.7" height="1.7" opacity="0.64"/><rect x="-6.4" y="2.0" width="1.8" height="1.8" opacity="0.62"/><rect x="-3.0" y="4.4" width="1.3" height="1.3" opacity="0.75"/><rect x="-2.5" y="-3.6" width="1.0" height="1.0" opacity="0.82"/><rect x="-3.0" y="-3.0" width="1.1" height="1.1" opacity="0.76"/><rect x="-0.1" y="-1.5" width="1.0" height="1.0" opacity="0.86"/><rect x="-2.9" y="2.4" width="1.0" height="1.0" opacity="0.89"/><rect x="-0.8" y="2.8" width="1.0" height="1.0" opacity="0.60"/><rect x="3.5" y="0.5" width="1.0" height="1.0" opacity="0.70"/><rect x="-1.7" y="0.1" width="1.1" height="1.1" opacity="0.79"/><rect x="1.2" y="-0.3" width="1.2" height="1.2" opacity="0.98"/><rect x="-2.7" y="3.6" width="1.1" height="1.1" opacity="0.70"/><rect x="2.4" y="-0.3" width="2.1" height="2.1" opacity="0.80"/><rect x="1.2" y="-1.7" width="1.9" height="1.9" opacity="0.66"/><rect x="2.2" y="3.0" width="1.7" height="1.7" opacity="0.64"/><rect x="-0.2" y="-0.7" width="1.2" height="1.2" opacity="0.84"/><rect x="-2.6" y="-2.7" width="1.3" height="1.3" opacity="0.64"/><rect x="-1.4" y="-2.6" width="2.0" height="2.0" opacity="0.74"/></g>
<g transform="translate(61.5,356)" fill="#fff"><rect x="0.9" y="3.5" width="1.2" height="1.2" opacity="0.97"/><rect x="5.5" y="4.5" width="1.0" height="1.0" opacity="0.80"/><rect x="2.1" y="1.5" width="1.0" height="1.0" opacity="0.68"/><rect x="-2.5" y="-2.9" width="0.9" height="0.9" opacity="0.60"/><rect x="4.4" y="4.4" width="1.2" height="1.2" opacity="0.63"/><rect x="-6.9" y="0.2" width="1.6" height="1.6" opacity="0.94"/><rect x="4.7" y="5.3" width="1.2" height="1.2" opacity="0.66"/><rect x="0.5" y="1.8" width="1.0" height="1.0" opacity="0.93"/><rect x="9.1" y="-0.9" width="1.8" height="1.8" opacity="0.92"/><rect x="-5.0" y="2.3" width="1.6" height="1.6" opacity="0.98"/><rect x="-7.5" y="4.6" width="1.4" height="1.4" opacity="0.98"/><rect x="-1.0" y="-1.9" width="1.8" height="1.8" opacity="0.90"/><rect x="0.3" y="2.7" width="1.5" height="1.5" opacity="0.95"/><rect x="-3.5" y="-0.2" width="1.7" height="1.7" opacity="0.76"/><rect x="2.8" y="1.8" width="1.9" height="1.9" opacity="0.93"/><rect x="3.4" y="3.7" width="1.6" height="1.6" opacity="0.92"/><rect x="-4.3" y="0.1" width="1.2" height="1.2" opacity="0.72"/><rect x="-5.0" y="1.1" width="1.8" height="1.8" opacity="0.77"/><rect x="-6.3" y="1.8" width="1.5" height="1.5" opacity="0.63"/><rect x="3.6" y="2.3" width="1.2" height="1.2" opacity="0.64"/><rect x="7.4" y="4.9" width="1.3" height="1.3" opacity="0.82"/><rect x="4.4" y="2.1" width="0.8" height="0.8" opacity="0.93"/><rect x="-2.8" y="1.1" width="1.0" height="1.0" opacity="0.67"/><rect x="8.2" y="-0.8" width="1.9" height="1.9" opacity="0.76"/><rect x="0.3" y="6.8" width="1.7" height="1.7" opacity="0.84"/><rect x="-0.4" y="0.2" width="1.8" height="1.8" opacity="0.64"/><rect x="-7.0" y="1.0" width="1.1" height="1.1" opacity="0.74"/><rect x="-0.9" y="-3.2" width="1.7" height="1.7" opacity="0.87"/><rect x="7.6" y="-1.8" width="1.6" height="1.6" opacity="0.63"/><rect x="-6.8" y="2.0" width="1.2" height="1.2" opacity="0.72"/><rect x="5.4" y="3.0" width="0.9" height="0.9" opacity="0.86"/><rect x="-1.6" y="7.1" width="0.9" height="0.9" opacity="0.93"/><rect x="-7.5" y="-3.6" width="1.7" height="1.7" opacity="0.96"/><rect x="-6.0" y="0.6" width="1.2" height="1.2" opacity="0.65"/><rect x="7.5" y="3.1" width="1.5" height="1.5" opacity="0.62"/><rect x="3.2" y="5.8" width="2.0" height="2.0" opacity="0.85"/><rect x="-1.3" y="2.4" width="1.3" height="1.3" opacity="0.99"/><rect x="-3.7" y="-5.1" width="1.3" height="1.3" opacity="0.99"/><rect x="4.1" y="-0.5" width="1.0" height="1.0" opacity="0.83"/><rect x="-4.4" y="-4.3" width="1.0" height="1.0" opacity="0.81"/><rect x="-2.9" y="-0.9" width="1.0" height="1.0" opacity="0.72"/><rect x="-10.7" y="-5.1" width="1.7" height="1.7" opacity="0.74"/><rect x="-1.2" y="4.2" width="1.4" height="1.4" opacity="0.85"/><rect x="-0.5" y="5.3" width="1.2" height="1.2" opacity="0.73"/><rect x="1.9" y="5.0" width="1.9" height="1.9" opacity="0.78"/><rect x="-0.3" y="2.0" width="1.2" height="1.2" opacity="0.66"/><rect x="-8.5" y="1.4" width="1.6" height="1.6" opacity="0.90"/><rect x="1.3" y="3.0" width="1.3" height="1.3" opacity="0.92"/><rect x="-5.3" y="-0.4" width="0.8" height="0.8" opacity="0.93"/><rect x="-6.9" y="2.9" width="1.2" height="1.2" opacity="0.99"/><rect x="-4.2" y="-3.5" width="1.5" height="1.5" opacity="0.93"/><rect x="-3.6" y="-3.4" width="1.0" height="1.0" opacity="0.89"/><rect x="-4.6" y="-4.5" width="1.9" height="1.9" opacity="0.90"/><rect x="2.1" y="2.4" width="1.2" height="1.2" opacity="0.95"/><rect x="-4.8" y="-0.5" width="1.6" height="1.6" opacity="0.96"/><rect x="1.4" y="2.9" width="1.9" height="1.9" opacity="0.63"/><rect x="-2.8" y="-4.8" width="1.5" height="1.5" opacity="0.76"/><rect x="-6.5" y="-1.6" width="1.6" height="1.6" opacity="0.94"/><rect x="3.5" y="2.4" width="1.7" height="1.7" opacity="0.80"/><rect x="9.0" y="-1.0" width="1.8" height="1.8" opacity="0.86"/><rect x="8.2" y="3.3" width="1.6" height="1.6" opacity="0.84"/><rect x="3.8" y="-2.3" width="1.5" height="1.5" opacity="0.80"/><rect x="-5.7" y="2.0" width="0.9" height="0.9" opacity="0.87"/><rect x="-7.5" y="-1.2" width="0.9" height="0.9" opacity="0.94"/><rect x="5.7" y="3.2" width="1.7" height="1.7" opacity="0.78"/><rect x="-4.0" y="1.6" width="1.5" height="1.5" opacity="0.92"/><rect x="-7.7" y="-3.4" width="1.4" height="1.4" opacity="0.72"/><rect x="8.6" y="0.5" width="1.1" height="1.1" opacity="0.82"/><rect x="-2.1" y="5.3" width="1.5" height="1.5" opacity="0.89"/><rect x="0.2" y="-0.5" width="1.4" height="1.4" opacity="0.77"/><rect x="-3.1" y="-3.3" width="0.9" height="0.9" opacity="0.64"/><rect x="-0.7" y="3.8" width="1.1" height="1.1" opacity="0.95"/><rect x="-2.9" y="-6.6" width="1.2" height="1.2" opacity="0.99"/><rect x="-7.1" y="-4.5" width="1.3" height="1.3" opacity="0.99"/><rect x="-7.8" y="1.4" width="1.0" height="1.0" opacity="0.76"/><rect x="5.1" y="0.2" width="1.9" height="1.9" opacity="0.61"/><rect x="1.6" y="-3.2" width="1.7" height="1.7" opacity="0.68"/><rect x="4.9" y="-3.9" width="1.9" height="1.9" opacity="0.89"/><rect x="-3.4" y="-2.6" width="0.8" height="0.8" opacity="0.95"/><rect x="-6.2" y="2.4" width="1.0" height="1.0" opacity="0.85"/><rect x="4.7" y="1.6" width="1.0" height="1.0" opacity="0.74"/><rect x="-4.1" y="-4.6" width="0.9" height="0.9" opacity="0.64"/><rect x="-5.4" y="3.1" width="1.4" height="1.4" opacity="0.63"/><rect x="5.9" y="-1.2" width="1.8" height="1.8" opacity="0.65"/><rect x="-6.9" y="-3.2" width="1.3" height="1.3" opacity="0.74"/><rect x="-3.5" y="-3.4" width="1.1" height="1.1" opacity="0.93"/><rect x="-9.0" y="1.9" width="1.3" height="1.3" opacity="0.92"/><rect x="2.2" y="4.2" width="1.1" height="1.1" opacity="0.83"/><rect x="5.6" y="4.5" width="2.0" height="2.0" opacity="0.63"/><rect x="-4.1" y="-1.1" width="1.9" height="1.9" opacity="0.94"/><rect x="0.6" y="-1.9" width="1.4" height="1.4" opacity="0.86"/><rect x="2.7" y="0.1" width="1.2" height="1.2" opacity="0.95"/><rect x="-6.1" y="-3.4" width="1.0" height="1.0" opacity="0.78"/><rect x="-3.3" y="-0.1" width="1.9" height="1.9" opacity="0.90"/><rect x="-6.1" y="0.5" width="1.4" height="1.4" opacity="0.76"/><rect x="-0.9" y="-2.2" width="1.9" height="1.9" opacity="0.84"/><rect x="-2.2" y="-4.1" width="0.9" height="0.9" opacity="0.70"/><rect x="5.2" y="0.1" width="1.7" height="1.7" opacity="0.69"/><rect x="-4.7" y="0.3" width="1.0" height="1.0" opacity="0.60"/><rect x="3.4" y="4.3" width="1.9" height="1.9" opacity="0.69"/><rect x="-1.8" y="-3.9" width="1.9" height="1.9" opacity="0.71"/><rect x="-4.5" y="0.5" width="1.9" height="1.9" opacity="0.90"/><rect x="-3.2" y="-0.5" width="1.0" height="1.0" opacity="0.80"/><rect x="-11.3" y="-3.2" width="1.3" height="1.3" opacity="0.95"/><rect x="-3.1" y="-4.5" width="1.8" height="1.8" opacity="0.80"/><rect x="-8.7" y="-0.7" width="1.4" height="1.4" opacity="0.88"/><rect x="-7.7" y="-0.1" width="1.6" height="1.6" opacity="0.82"/><rect x="7.4" y="0.6" width="1.8" height="1.8" opacity="0.78"/><rect x="-6.1" y="-5.4" width="1.6" height="1.6" opacity="0.99"/><rect x="-3.5" y="0.7" width="1.2" height="1.2" opacity="0.64"/><rect x="4.6" y="-3.1" width="0.9" height="0.9" opacity="0.75"/><rect x="4.1" y="2.6" width="1.4" height="1.4" opacity="0.83"/><rect x="5.0" y="0.8" width="0.9" height="0.9" opacity="0.65"/><rect x="-5.6" y="2.4" width="2.0" height="2.0" opacity="0.97"/><rect x="-8.7" y="-1.7" width="1.7" height="1.7" opacity="0.92"/><rect x="-2.9" y="-5.0" width="0.8" height="0.8" opacity="0.87"/><rect x="2.2" y="3.5" width="1.5" height="1.5" opacity="0.72"/><rect x="4.4" y="-0.5" width="1.2" height="1.2" opacity="0.74"/><rect x="3.7" y="1.8" width="1.0" height="1.0" opacity="0.98"/><rect x="2.3" y="1.2" width="2.0" height="2.0" opacity="0.90"/><rect x="5.2" y="0.7" width="1.4" height="1.4" opacity="0.74"/><rect x="-2.6" y="-1.2" width="1.2" height="1.2" opacity="0.91"/><rect x="5.5" y="-2.3" width="1.4" height="1.4" opacity="0.64"/><rect x="2.6" y="1.8" width="0.9" height="0.9" opacity="0.65"/><rect x="3.3" y="5.6" width="1.6" height="1.6" opacity="0.82"/><rect x="4.2" y="3.2" width="1.7" height="1.7" opacity="0.85"/><rect x="1.3" y="3.3" width="1.9" height="1.9" opacity="0.89"/><rect x="0.7" y="-0.4" width="1.0" height="1.0" opacity="0.78"/><rect x="-2.4" y="-3.1" width="1.7" height="1.7" opacity="0.70"/><rect x="6.3" y="0.8" width="1.8" height="1.8" opacity="0.86"/></g>
<g stroke="#fff" stroke-linecap="butt" fill="none"><path d="M90.1,348.5 L104.0,355.0" stroke-width="1.3" stroke-dasharray="2.9 0.5 1.4 0.4 2.1 0.4 2.9 0.7" opacity="0.77"/><path d="M88.6,350.6 L102.6,357.1" stroke-width="1.6" stroke-dasharray="2.7 0.7 3.2 1.0 2.2 0.9 1.8 0.6" opacity="0.79"/><path d="M87.6,352.7 L101.9,359.4" stroke-width="1.5" stroke-dasharray="3.2 0.7 1.9 0.5 2.1 0.9 1.4 0.5" opacity="0.83"/><path d="M85.6,354.8 L99.9,361.4" stroke-width="1.7" stroke-dasharray="1.4 0.5 3.0 0.8 1.9 0.6 1.3 0.7" opacity="0.76"/><path d="M83.7,356.9 L96.6,362.9" stroke-width="1.4" stroke-dasharray="2.5 0.4 1.9 0.6 3.3 1.0 2.0 0.7" opacity="0.84"/><path d="M82.8,359.0 L96.1,365.2" stroke-width="1.6" stroke-dasharray="1.6 0.8 3.2 0.9 1.6 0.9 3.3 0.4" opacity="0.97"/></g>
<g stroke="#fff" stroke-linecap="butt" fill="none"><path d="M118.3,348.0 L139.2,355.6" stroke-width="1.5" stroke-dasharray="1.8 0.9 1.8 0.4 1.4 0.6 2.0 0.6" opacity="0.87"/><path d="M116.0,350.1 L136.3,357.5" stroke-width="1.4" stroke-dasharray="2.3 0.6 2.3 1.0 3.3 0.7 1.3 0.5" opacity="0.86"/><path d="M114.7,352.2 L134.6,359.4" stroke-width="1.3" stroke-dasharray="1.3 0.7 2.3 0.5 2.6 1.0 3.3 0.6" opacity="0.86"/><path d="M113.0,354.3 L133.2,361.7" stroke-width="1.7" stroke-dasharray="2.4 0.6 1.4 0.7 2.3 1.0 3.0 0.5" opacity="0.91"/><path d="M111.5,356.4 L131.3,363.6" stroke-width="1.8" stroke-dasharray="3.0 0.4 2.8 0.7 1.8 0.7 2.6 0.9" opacity="0.91"/><path d="M110.7,358.5 L130.0,365.5" stroke-width="1.3" stroke-dasharray="2.7 0.9 2.7 0.5 2.0 0.6 3.2 0.6" opacity="0.96"/></g>
<g transform="translate(157.5,355.5)"><circle r="2.4499999999999997" fill="url(#glow)" opacity="0.25"/><path d="M0,0 L3.0,0" stroke="#fff" stroke-width="0.6" opacity="0.20" transform="rotate(3)"/><path d="M0,0 L2.1,0" stroke="#fff" stroke-width="0.6" opacity="0.20" transform="rotate(48)"/><path d="M0,0 L3.1,0" stroke="#fff" stroke-width="0.6" opacity="0.20" transform="rotate(89)"/><path d="M0,0 L3.3,0" stroke="#fff" stroke-width="0.6" opacity="0.20" transform="rotate(134)"/><path d="M0,0 L3.5,0" stroke="#fff" stroke-width="0.6" opacity="0.20" transform="rotate(177)"/><path d="M0,0 L2.5,0" stroke="#fff" stroke-width="0.6" opacity="0.20" transform="rotate(230)"/><path d="M0,0 L2.4,0" stroke="#fff" stroke-width="0.6" opacity="0.20" transform="rotate(267)"/><path d="M0,0 L2.1,0" stroke="#fff" stroke-width="0.6" opacity="0.20" transform="rotate(308)"/><circle r="1.1" fill="#fff" opacity="0.5"/></g>
<g transform="translate(189.5,355.5)"><circle r="3.5" fill="url(#glow)" opacity="0.275"/><path d="M0,0 L3.7,0" stroke="#fff" stroke-width="0.6" opacity="0.22" transform="rotate(-5)"/><path d="M0,0 L3.1,0" stroke="#fff" stroke-width="0.6" opacity="0.22" transform="rotate(45)"/><path d="M0,0 L4.7,0" stroke="#fff" stroke-width="0.6" opacity="0.22" transform="rotate(88)"/><path d="M0,0 L4.3,0" stroke="#fff" stroke-width="0.6" opacity="0.22" transform="rotate(139)"/><path d="M0,0 L4.8,0" stroke="#fff" stroke-width="0.6" opacity="0.22" transform="rotate(175)"/><path d="M0,0 L3.9,0" stroke="#fff" stroke-width="0.6" opacity="0.22" transform="rotate(220)"/><path d="M0,0 L4.6,0" stroke="#fff" stroke-width="0.6" opacity="0.22" transform="rotate(267)"/><path d="M0,0 L4.9,0" stroke="#fff" stroke-width="0.6" opacity="0.22" transform="rotate(311)"/><circle r="1.1" fill="#fff" opacity="0.55"/></g>
<g transform="translate(221.5,355.5)"><circle r="3.5" fill="url(#glow)" opacity="0.31"/><path d="M0,0 L3.1,0" stroke="#fff" stroke-width="0.6" opacity="0.25" transform="rotate(4)"/><path d="M0,0 L3.8,0" stroke="#fff" stroke-width="0.6" opacity="0.25" transform="rotate(40)"/><path d="M0,0 L4.1,0" stroke="#fff" stroke-width="0.6" opacity="0.25" transform="rotate(93)"/><path d="M0,0 L3.5,0" stroke="#fff" stroke-width="0.6" opacity="0.25" transform="rotate(139)"/><path d="M0,0 L3.3,0" stroke="#fff" stroke-width="0.6" opacity="0.25" transform="rotate(185)"/><path d="M0,0 L4.2,0" stroke="#fff" stroke-width="0.6" opacity="0.25" transform="rotate(230)"/><path d="M0,0 L4.1,0" stroke="#fff" stroke-width="0.6" opacity="0.25" transform="rotate(270)"/><path d="M0,0 L3.5,0" stroke="#fff" stroke-width="0.6" opacity="0.25" transform="rotate(313)"/><circle r="1.1" fill="#fff" opacity="0.62"/></g>
<g transform="translate(253.5,355.5)"><circle r="3.8499999999999996" fill="url(#glow)" opacity="0.35"/><path d="M0,0 L3.9,0" stroke="#fff" stroke-width="0.6" opacity="0.28" transform="rotate(1)"/><path d="M0,0 L5.3,0" stroke="#fff" stroke-width="0.6" opacity="0.28" transform="rotate(44)"/><path d="M0,0 L3.6,0" stroke="#fff" stroke-width="0.6" opacity="0.28" transform="rotate(98)"/><path d="M0,0 L5.0,0" stroke="#fff" stroke-width="0.6" opacity="0.28" transform="rotate(132)"/><path d="M0,0 L4.2,0" stroke="#fff" stroke-width="0.6" opacity="0.28" transform="rotate(175)"/><path d="M0,0 L5.1,0" stroke="#fff" stroke-width="0.6" opacity="0.28" transform="rotate(218)"/><path d="M0,0 L3.9,0" stroke="#fff" stroke-width="0.6" opacity="0.28" transform="rotate(275)"/><path d="M0,0 L3.8,0" stroke="#fff" stroke-width="0.6" opacity="0.28" transform="rotate(316)"/><circle r="1.1" fill="#fff" opacity="0.7"/></g>
<g transform="translate(29.5,387.5)"><circle r="4.199999999999999" fill="url(#glow)" opacity="0.5"/><path d="M0,0 L5.4,0" stroke="#fff" stroke-width="0.6" opacity="0.40" transform="rotate(-6)"/><path d="M0,0 L5.3,0" stroke="#fff" stroke-width="0.6" opacity="0.40" transform="rotate(52)"/><path d="M0,0 L4.6,0" stroke="#fff" stroke-width="0.6" opacity="0.40" transform="rotate(84)"/><path d="M0,0 L5.9,0" stroke="#fff" stroke-width="0.6" opacity="0.40" transform="rotate(140)"/><path d="M0,0 L3.8,0" stroke="#fff" stroke-width="0.6" opacity="0.40" transform="rotate(186)"/><path d="M0,0 L4.0,0" stroke="#fff" stroke-width="0.6" opacity="0.40" transform="rotate(229)"/><path d="M0,0 L3.8,0" stroke="#fff" stroke-width="0.6" opacity="0.40" transform="rotate(264)"/><path d="M0,0 L4.3,0" stroke="#fff" stroke-width="0.6" opacity="0.40" transform="rotate(313)"/><circle r="1.1" fill="#fff" opacity="1"/></g>
<g transform="translate(61.5,387.5)"><circle r="4.55" fill="url(#glow)" opacity="0.45"/><path d="M0,0 L5.7,0" stroke="#fff" stroke-width="0.6" opacity="0.36" transform="rotate(3)"/><path d="M0,0 L5.1,0" stroke="#fff" stroke-width="0.6" opacity="0.36" transform="rotate(46)"/><path d="M0,0 L5.3,0" stroke="#fff" stroke-width="0.6" opacity="0.36" transform="rotate(90)"/><path d="M0,0 L4.9,0" stroke="#fff" stroke-width="0.6" opacity="0.36" transform="rotate(138)"/><path d="M0,0 L5.4,0" stroke="#fff" stroke-width="0.6" opacity="0.36" transform="rotate(180)"/><path d="M0,0 L5.4,0" stroke="#fff" stroke-width="0.6" opacity="0.36" transform="rotate(224)"/><path d="M0,0 L4.9,0" stroke="#fff" stroke-width="0.6" opacity="0.36" transform="rotate(266)"/><path d="M0,0 L6.4,0" stroke="#fff" stroke-width="0.6" opacity="0.36" transform="rotate(321)"/><circle r="1.1" fill="#fff" opacity="0.9"/></g>
<path d="M88,398 C89,389 93,383 99,380" stroke="#ddd" stroke-width="0.9" fill="none"/>
<path d="M124,398 C124,391 122,385 120,381 M124,398 C125,391 128,387 132,383 M124.5,398 C125,391 125,387 126,382" stroke="#ccc" stroke-width="0.8" fill="none"/>
<g transform="translate(157.5,389)"><path d="M0,-8 L1.800,-3.500 L4.500,-5 L3.800,-1.500 L8,-1.500 L4.500,1.500 L5.500,3.500 L1,3 L-0.500,8 L-1.200,3 L-5.500,3.500 L-4.500,1.500 L-8,-1.500 L-3.800,-1.500 L-4.500,-5 L-1.800,-3.500 Z" fill="#fff"/></g>
<g transform="translate(189.5,389)"><path d="M0,-8 C3,-4 6,0 5,4 C4,7 -4,7 -5,4 C-6,0 -3,-4 0,-8 Z" fill="#5e5e5e" stroke="#7c7c7c" stroke-width="0.6"/><path d="M0,-8 V7 M0,-3 L3,-1 M0,-3 L-3,-1 M0,0 L4,2.5 M0,0 L-4,2.5 M0,3 L3,5 M0,3 L-3,5" stroke="#777" stroke-width="0.4" fill="none"/></g>
<g transform="translate(221.5,389)"><path d="M0,-8 C3,-4 6,0 5,4 C4,7 -4,7 -5,4 C-6,0 -3,-4 0,-8 Z" fill="#5e5e5e" stroke="#7c7c7c" stroke-width="0.6"/><path d="M0,-8 V7 M0,-3 L3,-1 M0,-3 L-3,-1 M0,0 L4,2.5 M0,0 L-4,2.5 M0,3 L3,5 M0,3 L-3,5" stroke="#777" stroke-width="0.4" fill="none"/></g>
<g transform="translate(253.5,389) rotate(0)" fill="#fff"><rect x="-3.4" y="-4.3" width="1.5" height="1.5" opacity="0.63"/><rect x="3.1" y="-6.4" width="0.7" height="0.7" opacity="0.84"/><rect x="1.1" y="4.7" width="1.4" height="1.4" opacity="0.72"/><rect x="-4.0" y="6.3" width="1.5" height="1.5" opacity="0.94"/><rect x="-4.7" y="1.0" width="1.5" height="1.5" opacity="0.99"/><rect x="7.1" y="4.4" width="1.1" height="1.1" opacity="0.70"/><rect x="4.9" y="5.5" width="0.9" height="0.9" opacity="0.85"/><rect x="-4.4" y="4.1" width="0.9" height="0.9" opacity="1.00"/><rect x="-5.1" y="-6.1" width="0.7" height="0.7" opacity="0.75"/><rect x="5.0" y="-4.4" width="1.2" height="1.2" opacity="0.73"/><rect x="-4.7" y="1.4" width="1.1" height="1.1" opacity="0.67"/><rect x="0.3" y="-4.8" width="1.3" height="1.3" opacity="0.85"/><rect x="-3.3" y="-6.7" width="1.0" height="1.0" opacity="0.56"/><rect x="-3.2" y="-3.3" width="1.1" height="1.1" opacity="0.60"/><rect x="0.1" y="6.5" width="1.3" height="1.3" opacity="0.68"/><rect x="4.0" y="-5.5" width="0.7" height="0.7" opacity="0.53"/><rect x="-6.7" y="1.9" width="1.3" height="1.3" opacity="0.52"/><rect x="5.2" y="-4.0" width="1.0" height="1.0" opacity="0.78"/><rect x="7.5" y="1.4" width="1.4" height="1.4" opacity="0.54"/><rect x="0.0" y="3.5" width="0.8" height="0.8" opacity="0.95"/><rect x="0.9" y="-4.0" width="0.6" height="0.6" opacity="0.54"/><rect x="3.2" y="2.0" width="1.0" height="1.0" opacity="0.54"/><rect x="-2.7" y="3.7" width="1.3" height="1.3" opacity="0.94"/><rect x="-4.1" y="7.1" width="0.8" height="0.8" opacity="0.63"/><rect x="1.8" y="0.8" width="1.5" height="1.5" opacity="0.57"/><rect x="3.3" y="-3.6" width="1.1" height="1.1" opacity="0.57"/><rect x="-6.7" y="-5.2" width="1.3" height="1.3" opacity="0.88"/><rect x="2.9" y="-4.7" width="0.9" height="0.9" opacity="0.51"/><rect x="-0.9" y="2.1" width="1.0" height="1.0" opacity="0.53"/><rect x="4.4" y="6.2" width="1.0" height="1.0" opacity="0.73"/><rect x="2.6" y="-6.2" width="1.3" height="1.3" opacity="0.74"/><rect x="-0.9" y="0.4" width="1.4" height="1.4" opacity="0.61"/><rect x="3.1" y="-4.9" width="1.3" height="1.3" opacity="0.75"/><rect x="-4.9" y="-0.7" width="0.7" height="0.7" opacity="0.61"/><rect x="6.0" y="0.9" width="0.8" height="0.8" opacity="0.86"/><rect x="-3.6" y="1.1" width="0.8" height="0.8" opacity="0.99"/><rect x="8.1" y="-0.2" width="0.7" height="0.7" opacity="0.53"/><rect x="-4.8" y="1.1" width="1.2" height="1.2" opacity="0.84"/><rect x="-2.3" y="-7.3" width="1.0" height="1.0" opacity="0.76"/><rect x="-2.6" y="7.0" width="0.9" height="0.9" opacity="0.65"/><rect x="-1.9" y="3.7" width="0.8" height="0.8" opacity="0.81"/><rect x="0.0" y="1.5" width="0.9" height="0.9" opacity="0.89"/><rect x="-1.6" y="-7.8" width="1.2" height="1.2" opacity="0.74"/><rect x="-0.9" y="2.2" width="1.2" height="1.2" opacity="0.81"/><rect x="-2.0" y="0.8" width="1.3" height="1.3" opacity="0.76"/><rect x="-7.5" y="2.4" width="1.4" height="1.4" opacity="0.71"/><rect x="-1.7" y="-6.0" width="1.3" height="1.3" opacity="0.86"/><rect x="-0.8" y="1.8" width="1.3" height="1.3" opacity="0.54"/><rect x="2.7" y="-1.5" width="1.4" height="1.4" opacity="0.97"/><rect x="-2.0" y="-0.8" width="1.2" height="1.2" opacity="0.52"/><rect x="-4.3" y="-6.6" width="1.2" height="1.2" opacity="0.67"/><rect x="-3.2" y="-0.4" width="1.2" height="1.2" opacity="0.86"/><rect x="-0.1" y="-1.5" width="1.4" height="1.4" opacity="0.84"/><rect x="-7.0" y="-1.3" width="0.9" height="0.9" opacity="0.91"/><rect x="-4.3" y="-3.3" width="0.8" height="0.8" opacity="0.69"/><rect x="2.5" y="-6.7" width="0.9" height="0.9" opacity="0.95"/><rect x="-6.1" y="1.6" width="0.7" height="0.7" opacity="0.97"/><rect x="6.7" y="-2.7" width="0.9" height="0.9" opacity="0.61"/><rect x="3.0" y="7.0" width="1.3" height="1.3" opacity="0.70"/><rect x="2.2" y="7.2" width="1.3" height="1.3" opacity="0.96"/><rect x="-7.9" y="0.4" width="1.1" height="1.1" opacity="0.90"/><rect x="6.0" y="1.1" width="1.3" height="1.3" opacity="0.85"/><rect x="6.6" y="-1.0" width="0.9" height="0.9" opacity="0.86"/><rect x="4.1" y="-5.7" width="1.2" height="1.2" opacity="0.53"/><rect x="4.1" y="0.0" width="0.9" height="0.9" opacity="0.89"/><rect x="-0.0" y="1.7" width="0.6" height="0.6" opacity="1.00"/><rect x="0.7" y="4.7" width="1.4" height="1.4" opacity="0.97"/><rect x="-2.1" y="6.3" width="1.0" height="1.0" opacity="0.64"/><rect x="0.9" y="-0.3" width="1.2" height="1.2" opacity="0.88"/><rect x="0.8" y="-6.4" width="1.4" height="1.4" opacity="0.91"/><rect x="-1.2" y="-1.5" width="1.4" height="1.4" opacity="0.59"/><rect x="2.8" y="3.8" width="1.1" height="1.1" opacity="0.66"/><rect x="-4.3" y="1.8" width="0.8" height="0.8" opacity="0.86"/><rect x="-0.9" y="-1.7" width="1.4" height="1.4" opacity="0.59"/><rect x="-3.2" y="6.8" width="1.4" height="1.4" opacity="0.98"/><rect x="4.4" y="-4.5" width="1.4" height="1.4" opacity="0.90"/><rect x="4.6" y="-7.0" width="1.5" height="1.5" opacity="0.74"/><rect x="-7.1" y="1.7" width="1.4" height="1.4" opacity="0.86"/><rect x="-1.4" y="1.6" width="0.7" height="0.7" opacity="0.94"/><rect x="1.1" y="-0.8" width="0.9" height="0.9" opacity="0.81"/><rect x="-1.9" y="0.0" width="1.4" height="1.4" opacity="0.82"/><rect x="-2.2" y="5.4" width="0.9" height="0.9" opacity="0.82"/><rect x="4.9" y="-4.2" width="0.9" height="0.9" opacity="0.67"/><rect x="3.9" y="-6.2" width="0.9" height="0.9" opacity="0.96"/><rect x="-6.9" y="-5.0" width="1.4" height="1.4" opacity="0.53"/><rect x="-0.9" y="0.3" width="1.5" height="1.5" opacity="0.61"/><rect x="1.6" y="6.0" width="1.4" height="1.4" opacity="0.83"/><rect x="4.5" y="-5.2" width="1.1" height="1.1" opacity="0.73"/><rect x="-1.2" y="-0.6" width="0.7" height="0.7" opacity="1.00"/><rect x="1.9" y="4.2" width="1.1" height="1.1" opacity="0.87"/><rect x="6.1" y="4.5" width="1.1" height="1.1" opacity="0.53"/><rect x="-5.5" y="6.1" width="1.3" height="1.3" opacity="0.58"/><rect x="-1.5" y="-1.8" width="1.0" height="1.0" opacity="0.66"/><rect x="6.1" y="-0.3" width="1.5" height="1.5" opacity="0.75"/><rect x="0.0" y="-0.9" width="1.4" height="1.4" opacity="0.80"/><rect x="-5.6" y="5.4" width="1.4" height="1.4" opacity="0.58"/><rect x="6.8" y="0.8" width="1.4" height="1.4" opacity="0.56"/><rect x="-1.8" y="-0.8" width="0.6" height="0.6" opacity="0.75"/><rect x="6.4" y="-4.6" width="1.2" height="1.2" opacity="0.86"/><rect x="1.3" y="5.6" width="0.7" height="0.7" opacity="0.61"/><rect x="3.2" y="4.6" width="0.6" height="0.6" opacity="0.57"/><rect x="-2.5" y="-6.1" width="0.8" height="0.8" opacity="0.61"/><rect x="-1.4" y="-1.4" width="1.3" height="1.3" opacity="0.90"/><rect x="2.8" y="-2.0" width="1.3" height="1.3" opacity="0.77"/><rect x="0.9" y="7.7" width="0.8" height="0.8" opacity="0.59"/><rect x="5.8" y="-6.0" width="1.2" height="1.2" opacity="0.55"/><rect x="-6.4" y="1.5" width="0.8" height="0.8" opacity="0.92"/><rect x="-5.4" y="2.8" width="1.0" height="1.0" opacity="0.50"/><rect x="5.4" y="-5.8" width="1.4" height="1.4" opacity="0.78"/><rect x="-4.1" y="2.4" width="0.8" height="0.8" opacity="0.61"/><rect x="-5.2" y="-1.5" width="1.2" height="1.2" opacity="1.00"/><rect x="1.1" y="7.8" width="0.9" height="0.9" opacity="0.72"/><rect x="-2.5" y="6.3" width="1.0" height="1.0" opacity="0.57"/><rect x="-2.5" y="-1.6" width="0.9" height="0.9" opacity="0.71"/><rect x="4.0" y="-6.3" width="1.1" height="1.1" opacity="0.74"/><rect x="-1.0" y="6.0" width="1.0" height="1.0" opacity="0.75"/><rect x="-4.1" y="-0.0" width="0.9" height="0.9" opacity="0.69"/><rect x="2.4" y="1.1" width="1.3" height="1.3" opacity="0.67"/><rect x="-2.2" y="-7.5" width="1.2" height="1.2" opacity="0.73"/><rect x="3.2" y="-5.4" width="0.6" height="0.6" opacity="0.89"/><rect x="-6.0" y="0.9" width="1.2" height="1.2" opacity="0.84"/><rect x="6.4" y="-2.0" width="0.7" height="0.7" opacity="0.83"/><rect x="-0.0" y="-0.5" width="1.2" height="1.2" opacity="0.81"/><rect x="-2.4" y="-4.8" width="0.9" height="0.9" opacity="0.79"/><rect x="1.4" y="7.5" width="0.7" height="0.7" opacity="0.78"/><rect x="-2.6" y="-3.7" width="0.7" height="0.7" opacity="0.95"/><rect x="6.6" y="-1.0" width="1.3" height="1.3" opacity="0.72"/><rect x="-0.9" y="6.1" width="0.6" height="0.6" opacity="0.77"/><rect x="1.3" y="-4.7" width="1.4" height="1.4" opacity="0.56"/><rect x="-0.2" y="6.6" width="1.1" height="1.1" opacity="0.93"/><rect x="7.6" y="0.8" width="0.7" height="0.7" opacity="0.91"/><rect x="-0.6" y="-0.7" width="1.4" height="1.4" opacity="0.64"/><rect x="-8.2" y="0.3" width="0.9" height="0.9" opacity="0.54"/><rect x="1.8" y="7.1" width="0.7" height="0.7" opacity="0.66"/><rect x="1.1" y="5.5" width="0.7" height="0.7" opacity="0.99"/><rect x="2.3" y="-1.5" width="0.7" height="0.7" opacity="0.78"/><rect x="7.4" y="-1.2" width="0.7" height="0.7" opacity="0.92"/><rect x="5.8" y="1.5" width="1.3" height="1.3" opacity="0.71"/><rect x="-4.9" y="-5.2" width="0.8" height="0.8" opacity="0.56"/><rect x="-0.8" y="2.3" width="0.7" height="0.7" opacity="0.52"/><rect x="-3.3" y="6.3" width="0.8" height="0.8" opacity="0.73"/><rect x="3.0" y="2.4" width="0.9" height="0.9" opacity="0.97"/><rect x="0.9" y="2.8" width="1.4" height="1.4" opacity="0.66"/><rect x="-4.8" y="3.1" width="1.0" height="1.0" opacity="0.51"/><rect x="-3.7" y="-7.1" width="0.7" height="0.7" opacity="0.95"/><rect x="1.8" y="-6.5" width="1.2" height="1.2" opacity="0.72"/><rect x="-5.8" y="-5.6" width="1.3" height="1.3" opacity="0.77"/><rect x="0.7" y="-0.7" width="1.0" height="1.0" opacity="0.51"/><rect x="-4.6" y="-5.1" width="1.1" height="1.1" opacity="0.57"/><rect x="7.2" y="2.2" width="1.1" height="1.1" opacity="0.75"/><rect x="-1.3" y="-3.1" width="1.2" height="1.2" opacity="0.75"/><rect x="6.3" y="-3.3" width="1.4" height="1.4" opacity="0.92"/><rect x="-4.6" y="5.4" width="0.8" height="0.8" opacity="0.69"/><rect x="-2.6" y="-4.2" width="1.0" height="1.0" opacity="0.79"/><rect x="3.4" y="-0.4" width="1.4" height="1.4" opacity="0.60"/><rect x="3.9" y="-0.2" width="1.2" height="1.2" opacity="0.81"/><rect x="6.5" y="0.2" width="0.9" height="0.9" opacity="0.82"/><rect x="-7.1" y="-2.8" width="0.9" height="0.9" opacity="0.79"/><rect x="-7.9" y="-2.4" width="1.4" height="1.4" opacity="0.99"/><rect x="-7.7" y="0.4" width="0.6" height="0.6" opacity="0.71"/><rect x="4.8" y="2.7" width="0.9" height="0.9" opacity="0.75"/><rect x="-0.2" y="-0.5" width="1.1" height="1.1" opacity="0.57"/><rect x="-5.7" y="5.6" width="1.1" height="1.1" opacity="0.72"/><rect x="5.7" y="-5.1" width="0.7" height="0.7" opacity="0.72"/><rect x="-1.1" y="1.2" width="1.4" height="1.4" opacity="0.65"/><rect x="4.0" y="1.7" width="1.3" height="1.3" opacity="0.60"/><rect x="-6.0" y="-0.3" width="1.1" height="1.1" opacity="0.88"/><rect x="-2.4" y="-6.4" width="0.8" height="0.8" opacity="0.82"/><rect x="-2.9" y="6.4" width="1.2" height="1.2" opacity="0.98"/><rect x="7.4" y="2.2" width="1.3" height="1.3" opacity="0.65"/><rect x="-6.3" y="-4.7" width="1.3" height="1.3" opacity="0.97"/><rect x="-4.7" y="6.3" width="1.4" height="1.4" opacity="0.63"/><rect x="-5.7" y="-0.2" width="0.6" height="0.6" opacity="0.54"/><rect x="2.0" y="-7.7" width="0.8" height="0.8" opacity="0.80"/><rect x="1.7" y="-1.7" width="0.9" height="0.9" opacity="0.92"/><rect x="-6.4" y="-5.2" width="1.2" height="1.2" opacity="0.88"/><rect x="-4.8" y="-6.2" width="0.8" height="0.8" opacity="0.58"/><rect x="3.3" y="-2.2" width="1.4" height="1.4" opacity="0.61"/><rect x="-0.1" y="2.1" width="0.7" height="0.7" opacity="1.00"/><rect x="-2.7" y="8.0" width="0.7" height="0.7" opacity="0.69"/><rect x="-5.9" y="-5.9" width="0.8" height="0.8" opacity="0.71"/><rect x="-4.7" y="0.9" width="0.7" height="0.7" opacity="0.69"/><rect x="-3.4" y="-4.8" width="1.1" height="1.1" opacity="0.60"/><rect x="-0.3" y="6.1" width="0.7" height="0.7" opacity="0.66"/><rect x="6.2" y="-5.2" width="1.4" height="1.4" opacity="0.73"/><rect x="5.8" y="-2.6" width="0.7" height="0.7" opacity="0.75"/><rect x="4.8" y="-0.8" width="0.9" height="0.9" opacity="0.55"/><rect x="-2.1" y="2.0" width="1.5" height="1.5" opacity="0.75"/><rect x="-1.0" y="4.8" width="1.1" height="1.1" opacity="0.59"/><rect x="0.6" y="-4.8" width="1.0" height="1.0" opacity="0.98"/><rect x="-5.0" y="1.4" width="1.3" height="1.3" opacity="0.97"/><rect x="-2.0" y="-5.6" width="1.4" height="1.4" opacity="0.60"/><rect x="6.7" y="-1.8" width="0.8" height="0.8" opacity="0.59"/><rect x="1.7" y="4.3" width="1.2" height="1.2" opacity="0.85"/><rect x="-4.7" y="-2.9" width="0.8" height="0.8" opacity="0.54"/><rect x="-6.9" y="-0.6" width="1.3" height="1.3" opacity="0.62"/><rect x="3.5" y="2.9" width="0.7" height="0.7" opacity="0.60"/><rect x="-6.1" y="-3.4" width="0.8" height="0.8" opacity="0.99"/><rect x="3.8" y="2.4" width="1.4" height="1.4" opacity="0.85"/><rect x="-5.0" y="-0.5" width="1.2" height="1.2" opacity="0.77"/><rect x="2.7" y="5.8" width="1.5" height="1.5" opacity="0.95"/><rect x="0.6" y="3.8" width="0.7" height="0.7" opacity="0.79"/><rect x="-0.5" y="-8.3" width="1.2" height="1.2" opacity="0.69"/><rect x="1.4" y="-0.1" width="1.1" height="1.1" opacity="0.85"/><rect x="-6.9" y="3.5" width="1.4" height="1.4" opacity="0.76"/><rect x="-7.1" y="3.5" width="0.6" height="0.6" opacity="0.51"/><rect x="5.2" y="1.9" width="1.1" height="1.1" opacity="0.69"/><rect x="-3.6" y="3.7" width="0.7" height="0.7" opacity="0.96"/><rect x="-4.3" y="4.6" width="0.7" height="0.7" opacity="0.58"/><rect x="5.8" y="4.9" width="0.7" height="0.7" opacity="0.65"/><rect x="-2.4" y="-1.1" width="1.0" height="1.0" opacity="0.73"/><rect x="0.0" y="-7.2" width="0.8" height="0.8" opacity="0.57"/><rect x="0.6" y="-0.3" width="1.4" height="1.4" opacity="0.68"/><rect x="1.1" y="-7.7" width="1.1" height="1.1" opacity="0.71"/><rect x="-1.7" y="0.3" width="1.5" height="1.5" opacity="1.00"/><rect x="8.1" y="2.6" width="0.8" height="0.8" opacity="0.52"/><rect x="3.4" y="-1.7" width="0.8" height="0.8" opacity="0.89"/><rect x="0.1" y="-4.9" width="0.7" height="0.7" opacity="0.88"/><rect x="6.7" y="3.4" width="1.0" height="1.0" opacity="0.84"/><rect x="2.6" y="4.9" width="1.4" height="1.4" opacity="0.55"/><rect x="-8.2" y="-0.7" width="1.1" height="1.1" opacity="0.75"/><rect x="7.3" y="-0.5" width="1.3" height="1.3" opacity="0.91"/><rect x="1.1" y="-4.4" width="0.6" height="0.6" opacity="0.52"/><rect x="-7.3" y="-1.0" width="0.8" height="0.8" opacity="0.70"/><rect x="0.5" y="3.9" width="0.8" height="0.8" opacity="0.73"/><rect x="0.4" y="5.8" width="1.2" height="1.2" opacity="0.83"/><rect x="4.4" y="3.2" width="1.1" height="1.1" opacity="0.64"/><rect x="-2.8" y="3.2" width="1.2" height="1.2" opacity="0.67"/><rect x="5.3" y="1.3" width="1.4" height="1.4" opacity="0.53"/><rect x="1.7" y="1.0" width="0.8" height="0.8" opacity="0.63"/><rect x="-3.6" y="-3.8" width="1.2" height="1.2" opacity="0.63"/><rect x="6.6" y="4.8" width="1.1" height="1.1" opacity="0.72"/><rect x="6.0" y="2.5" width="1.4" height="1.4" opacity="0.56"/><rect x="5.1" y="2.3" width="1.2" height="1.2" opacity="0.51"/><rect x="3.4" y="7.7" width="1.2" height="1.2" opacity="0.89"/><rect x="0.6" y="-2.3" width="1.3" height="1.3" opacity="0.62"/><rect x="1.5" y="8.1" width="0.8" height="0.8" opacity="0.59"/><rect x="2.6" y="-4.8" width="1.3" height="1.3" opacity="0.58"/><rect x="-3.3" y="1.4" width="0.7" height="0.7" opacity="0.77"/><rect x="-3.7" y="1.7" width="1.4" height="1.4" opacity="0.83"/><rect x="-0.2" y="2.9" width="1.3" height="1.3" opacity="0.55"/><rect x="0.6" y="3.3" width="1.4" height="1.4" opacity="0.54"/><rect x="-2.3" y="6.1" width="1.4" height="1.4" opacity="0.87"/><rect x="-7.7" y="-3.0" width="1.0" height="1.0" opacity="0.98"/><rect x="1.7" y="-7.6" width="1.1" height="1.1" opacity="0.66"/><rect x="2.1" y="7.0" width="0.7" height="0.7" opacity="0.68"/><rect x="-7.9" y="-3.1" width="1.2" height="1.2" opacity="0.83"/><rect x="0.9" y="0.9" width="1.0" height="1.0" opacity="0.80"/><rect x="4.4" y="1.2" width="0.7" height="0.7" opacity="0.81"/><rect x="-4.9" y="1.7" width="1.0" height="1.0" opacity="0.85"/><rect x="4.3" y="-4.5" width="1.1" height="1.1" opacity="0.65"/><rect x="0.7" y="-1.3" width="0.8" height="0.8" opacity="0.66"/><rect x="-3.0" y="-6.6" width="1.4" height="1.4" opacity="0.85"/><rect x="-2.4" y="0.7" width="0.9" height="0.9" opacity="0.83"/><rect x="3.9" y="-7.5" width="1.0" height="1.0" opacity="0.87"/><rect x="-0.2" y="5.1" width="0.6" height="0.6" opacity="0.77"/><rect x="-3.0" y="4.6" width="1.0" height="1.0" opacity="0.80"/><rect x="6.1" y="-5.0" width="0.9" height="0.9" opacity="0.90"/><rect x="-3.1" y="4.9" width="1.2" height="1.2" opacity="0.87"/><rect x="1.1" y="2.5" width="0.8" height="0.8" opacity="0.95"/></g>
<g transform="translate(29.5,420)" fill="#fff"><rect x="-7.3" y="-7.1" width="1.8" height="1.8" opacity="0.95"/><rect x="1.7" y="4.8" width="1.0" height="1.0" opacity="0.86"/><rect x="8.7" y="0.0" width="1.9" height="1.9" opacity="0.94"/><rect x="6.8" y="1.3" width="0.9" height="0.9" opacity="0.77"/><rect x="-0.4" y="-3.1" width="0.9" height="0.9" opacity="0.96"/><rect x="-6.2" y="3.7" width="2.0" height="2.0" opacity="0.99"/><rect x="0.1" y="4.9" width="0.8" height="0.8" opacity="0.75"/><rect x="-3.3" y="-4.5" width="0.8" height="0.8" opacity="0.89"/><rect x="4.9" y="-0.6" width="1.5" height="1.5" opacity="0.72"/><rect x="-3.0" y="-5.1" width="1.1" height="1.1" opacity="0.79"/><rect x="-4.2" y="-5.4" width="0.8" height="0.8" opacity="0.73"/><rect x="8.4" y="-1.5" width="1.4" height="1.4" opacity="0.69"/><rect x="1.0" y="5.4" width="1.2" height="1.2" opacity="0.96"/><rect x="-7.2" y="-2.7" width="1.6" height="1.6" opacity="0.77"/><rect x="2.5" y="-0.1" width="0.8" height="0.8" opacity="0.92"/><rect x="-3.6" y="-3.9" width="1.7" height="1.7" opacity="0.79"/><rect x="-3.7" y="-3.5" width="1.1" height="1.1" opacity="0.85"/><rect x="-4.4" y="-5.7" width="1.9" height="1.9" opacity="0.66"/><rect x="-1.8" y="-4.3" width="1.7" height="1.7" opacity="0.98"/><rect x="-7.9" y="-1.2" width="1.6" height="1.6" opacity="0.63"/><rect x="-5.9" y="-3.9" width="1.3" height="1.3" opacity="0.78"/><rect x="7.2" y="0.2" width="1.7" height="1.7" opacity="0.64"/><rect x="-8.9" y="0.1" width="1.8" height="1.8" opacity="0.68"/><rect x="0.6" y="5.1" width="1.5" height="1.5" opacity="0.83"/><rect x="5.3" y="-2.0" width="1.7" height="1.7" opacity="0.94"/><rect x="3.0" y="-1.3" width="1.2" height="1.2" opacity="0.73"/><rect x="-2.3" y="-4.6" width="0.8" height="0.8" opacity="0.96"/><rect x="-2.9" y="-0.2" width="1.6" height="1.6" opacity="0.87"/><rect x="0.8" y="4.9" width="1.0" height="1.0" opacity="0.88"/><rect x="0.9" y="-2.9" width="1.7" height="1.7" opacity="0.61"/><rect x="1.7" y="-2.3" width="1.3" height="1.3" opacity="0.62"/><rect x="-8.3" y="0.2" width="1.0" height="1.0" opacity="0.86"/><rect x="9.1" y="1.5" width="1.4" height="1.4" opacity="0.88"/><rect x="-2.2" y="-3.9" width="1.2" height="1.2" opacity="0.82"/><rect x="-2.4" y="-4.5" width="0.9" height="0.9" opacity="0.71"/><rect x="3.4" y="-1.5" width="1.5" height="1.5" opacity="0.91"/><rect x="-5.5" y="-2.3" width="1.7" height="1.7" opacity="0.73"/><rect x="-0.9" y="-3.1" width="1.3" height="1.3" opacity="0.99"/><rect x="0.3" y="-4.1" width="0.9" height="0.9" opacity="0.85"/><rect x="-2.1" y="-1.9" width="1.7" height="1.7" opacity="0.71"/><rect x="-0.1" y="-4.1" width="1.9" height="1.9" opacity="0.61"/><rect x="-5.3" y="-1.2" width="1.8" height="1.8" opacity="0.88"/><rect x="-6.9" y="1.1" width="1.2" height="1.2" opacity="0.85"/><rect x="-5.2" y="0.3" width="0.9" height="0.9" opacity="0.63"/><rect x="-7.1" y="-0.6" width="1.6" height="1.6" opacity="0.87"/><rect x="10.7" y="-1.3" width="1.8" height="1.8" opacity="1.00"/><rect x="-3.3" y="1.6" width="1.5" height="1.5" opacity="0.60"/><rect x="-6.2" y="-5.1" width="0.9" height="0.9" opacity="0.97"/><rect x="-9.7" y="0.2" width="1.9" height="1.9" opacity="0.75"/><rect x="-10.4" y="0.7" width="1.3" height="1.3" opacity="0.68"/><rect x="-2.3" y="2.6" width="1.8" height="1.8" opacity="0.70"/><rect x="7.8" y="-0.6" width="0.9" height="0.9" opacity="0.78"/><rect x="-4.2" y="-4.1" width="1.4" height="1.4" opacity="0.61"/><rect x="-2.7" y="-6.8" width="1.6" height="1.6" opacity="0.76"/><rect x="-4.7" y="1.9" width="1.6" height="1.6" opacity="0.76"/><rect x="-6.8" y="-1.9" width="1.0" height="1.0" opacity="0.99"/><rect x="-0.4" y="-2.4" width="1.7" height="1.7" opacity="0.74"/><rect x="-2.0" y="-5.5" width="1.2" height="1.2" opacity="0.65"/><rect x="2.2" y="3.0" width="1.1" height="1.1" opacity="0.77"/><rect x="-4.5" y="-4.9" width="1.8" height="1.8" opacity="0.66"/><rect x="-9.3" y="-1.5" width="1.0" height="1.0" opacity="0.91"/><rect x="4.4" y="0.1" width="2.0" height="2.0" opacity="0.77"/><rect x="-1.4" y="4.9" width="1.9" height="1.9" opacity="0.68"/><rect x="-5.1" y="-3.2" width="1.9" height="1.9" opacity="0.73"/><rect x="9.0" y="-2.1" width="1.0" height="1.0" opacity="0.67"/><rect x="-6.4" y="-0.9" width="1.5" height="1.5" opacity="0.68"/><rect x="5.1" y="-1.1" width="0.8" height="0.8" opacity="0.97"/><rect x="-8.9" y="0.6" width="1.6" height="1.6" opacity="0.64"/><rect x="2.9" y="6.6" width="1.2" height="1.2" opacity="0.89"/><rect x="1.3" y="-1.5" width="1.2" height="1.2" opacity="0.64"/><rect x="-1.0" y="-4.4" width="1.6" height="1.6" opacity="0.66"/><rect x="-5.6" y="-3.0" width="0.9" height="0.9" opacity="0.83"/><rect x="-5.4" y="-3.0" width="1.1" height="1.1" opacity="0.93"/><rect x="2.7" y="1.1" width="1.2" height="1.2" opacity="0.78"/><rect x="5.3" y="5.5" width="1.3" height="1.3" opacity="0.90"/><rect x="-1.7" y="-5.0" width="0.9" height="0.9" opacity="0.88"/><rect x="-1.9" y="-4.9" width="1.2" height="1.2" opacity="0.73"/><rect x="-2.9" y="5.8" width="1.3" height="1.3" opacity="0.72"/><rect x="-9.3" y="-5.8" width="1.7" height="1.7" opacity="0.87"/><rect x="-6.6" y="-3.4" width="1.4" height="1.4" opacity="0.67"/><rect x="5.8" y="2.4" width="1.1" height="1.1" opacity="0.62"/><rect x="-6.1" y="-0.3" width="1.1" height="1.1" opacity="0.82"/><rect x="-1.3" y="-4.0" width="1.9" height="1.9" opacity="0.77"/><rect x="-2.5" y="-3.8" width="1.6" height="1.6" opacity="0.94"/><rect x="4.1" y="1.2" width="1.3" height="1.3" opacity="0.85"/><rect x="1.5" y="0.7" width="0.8" height="0.8" opacity="0.72"/><rect x="-0.1" y="4.5" width="1.5" height="1.5" opacity="0.73"/><rect x="0.5" y="-0.7" width="0.9" height="0.9" opacity="0.72"/><rect x="-5.6" y="-5.5" width="0.9" height="0.9" opacity="0.89"/><rect x="-3.9" y="-4.0" width="1.7" height="1.7" opacity="0.97"/><rect x="8.6" y="0.4" width="1.4" height="1.4" opacity="0.77"/><rect x="-3.9" y="-2.9" width="1.4" height="1.4" opacity="0.78"/><rect x="-7.7" y="-3.6" width="2.0" height="2.0" opacity="0.73"/><rect x="7.7" y="-2.4" width="1.4" height="1.4" opacity="0.82"/><rect x="-2.7" y="-4.8" width="1.3" height="1.3" opacity="0.95"/><rect x="1.3" y="0.8" width="1.5" height="1.5" opacity="0.74"/><rect x="-9.1" y="-0.2" width="1.9" height="1.9" opacity="0.96"/><rect x="-0.5" y="-0.7" width="0.9" height="0.9" opacity="0.85"/><rect x="9.1" y="-1.6" width="1.5" height="1.5" opacity="0.88"/><rect x="-2.4" y="-2.4" width="1.3" height="1.3" opacity="0.80"/><rect x="-1.6" y="-4.9" width="1.0" height="1.0" opacity="0.79"/><rect x="-3.1" y="-3.7" width="1.6" height="1.6" opacity="0.93"/><rect x="-6.2" y="2.0" width="1.0" height="1.0" opacity="0.93"/><rect x="-1.1" y="4.7" width="1.2" height="1.2" opacity="0.99"/><rect x="-7.0" y="-0.8" width="1.9" height="1.9" opacity="0.76"/><rect x="-6.1" y="0.3" width="1.3" height="1.3" opacity="0.83"/><rect x="-6.4" y="-2.8" width="1.1" height="1.1" opacity="0.80"/><rect x="-1.7" y="-1.2" width="1.3" height="1.3" opacity="0.73"/><rect x="-7.4" y="2.6" width="0.9" height="0.9" opacity="0.92"/><rect x="0.7" y="5.2" width="1.2" height="1.2" opacity="0.93"/><rect x="4.4" y="-1.1" width="1.3" height="1.3" opacity="0.96"/><rect x="1.7" y="-0.7" width="1.1" height="1.1" opacity="0.77"/><rect x="1.8" y="6.7" width="1.5" height="1.5" opacity="0.68"/><rect x="-9.2" y="-2.6" width="1.5" height="1.5" opacity="0.63"/><rect x="-3.4" y="-5.9" width="1.6" height="1.6" opacity="0.97"/><rect x="-1.8" y="4.6" width="0.9" height="0.9" opacity="0.86"/><rect x="-4.6" y="-2.0" width="1.4" height="1.4" opacity="0.77"/><rect x="2.9" y="-1.6" width="1.6" height="1.6" opacity="0.68"/><rect x="7.2" y="-3.3" width="1.6" height="1.6" opacity="0.76"/><rect x="-8.6" y="1.1" width="1.3" height="1.3" opacity="0.66"/><rect x="-5.9" y="-5.6" width="1.4" height="1.4" opacity="0.94"/><rect x="-1.7" y="-1.8" width="1.5" height="1.5" opacity="0.67"/><rect x="6.7" y="-0.2" width="1.7" height="1.7" opacity="0.79"/><rect x="-1.9" y="-2.8" width="1.9" height="1.9" opacity="0.67"/><rect x="-7.6" y="-1.0" width="1.0" height="1.0" opacity="0.83"/><rect x="-8.9" y="-0.4" width="1.4" height="1.4" opacity="0.66"/><rect x="-6.4" y="3.4" width="1.2" height="1.2" opacity="0.94"/><rect x="6.8" y="1.7" width="1.9" height="1.9" opacity="0.98"/><rect x="-1.5" y="-0.8" width="1.8" height="1.8" opacity="0.75"/><rect x="-1.0" y="-2.0" width="1.3" height="1.3" opacity="0.70"/></g>
<g transform="translate(61.5,420)" fill="#fff"><rect x="-4.4" y="1.7" width="1.5" height="1.5" opacity="0.80"/><rect x="-3.6" y="-0.5" width="0.9" height="0.9" opacity="0.83"/><rect x="-5.0" y="-4.5" width="1.8" height="1.8" opacity="0.61"/><rect x="5.3" y="-2.6" width="1.4" height="1.4" opacity="0.66"/><rect x="3.8" y="5.5" width="1.1" height="1.1" opacity="0.76"/><rect x="8.7" y="2.4" width="1.7" height="1.7" opacity="0.87"/><rect x="-0.5" y="-1.9" width="1.8" height="1.8" opacity="0.83"/><rect x="8.4" y="1.8" width="1.4" height="1.4" opacity="0.62"/><rect x="3.1" y="-3.9" width="1.6" height="1.6" opacity="0.87"/><rect x="2.5" y="2.4" width="1.4" height="1.4" opacity="0.90"/><rect x="9.0" y="-0.6" width="1.0" height="1.0" opacity="0.65"/><rect x="6.7" y="-3.9" width="1.0" height="1.0" opacity="0.65"/><rect x="1.2" y="3.2" width="1.2" height="1.2" opacity="0.89"/><rect x="2.9" y="2.0" width="1.0" height="1.0" opacity="0.99"/><rect x="-2.4" y="-0.7" width="0.8" height="0.8" opacity="0.95"/><rect x="4.8" y="1.0" width="1.3" height="1.3" opacity="0.94"/><rect x="-1.5" y="-4.7" width="1.2" height="1.2" opacity="0.85"/><rect x="-0.8" y="5.3" width="1.4" height="1.4" opacity="0.73"/><rect x="-6.5" y="-1.9" width="1.1" height="1.1" opacity="0.99"/><rect x="-5.3" y="-3.7" width="1.3" height="1.3" opacity="0.93"/><rect x="6.6" y="-0.9" width="0.9" height="0.9" opacity="0.75"/><rect x="7.9" y="1.2" width="1.1" height="1.1" opacity="0.85"/><rect x="-9.1" y="-4.0" width="0.9" height="0.9" opacity="0.64"/><rect x="9.9" y="0.5" width="1.8" height="1.8" opacity="0.84"/><rect x="-6.3" y="-5.7" width="1.7" height="1.7" opacity="0.94"/><rect x="10.9" y="2.3" width="1.6" height="1.6" opacity="0.71"/><rect x="-3.6" y="-6.8" width="1.1" height="1.1" opacity="0.83"/><rect x="4.8" y="5.3" width="1.5" height="1.5" opacity="0.62"/><rect x="-1.6" y="-0.3" width="1.5" height="1.5" opacity="0.97"/><rect x="-6.1" y="-2.5" width="1.3" height="1.3" opacity="0.95"/><rect x="7.4" y="-4.9" width="1.5" height="1.5" opacity="0.79"/><rect x="8.4" y="-1.3" width="1.1" height="1.1" opacity="0.87"/><rect x="-4.5" y="3.1" width="0.9" height="0.9" opacity="0.92"/><rect x="-4.7" y="-4.5" width="1.1" height="1.1" opacity="0.89"/><rect x="-2.7" y="-3.5" width="1.4" height="1.4" opacity="0.84"/><rect x="3.8" y="0.2" width="1.8" height="1.8" opacity="0.93"/><rect x="-5.9" y="-2.2" width="1.3" height="1.3" opacity="0.74"/><rect x="-5.7" y="-4.4" width="2.0" height="2.0" opacity="0.72"/><rect x="7.4" y="1.2" width="1.4" height="1.4" opacity="0.97"/><rect x="-0.9" y="-1.1" width="1.8" height="1.8" opacity="0.87"/><rect x="9.2" y="-0.5" width="1.0" height="1.0" opacity="0.65"/><rect x="4.2" y="0.8" width="1.9" height="1.9" opacity="0.94"/><rect x="0.6" y="4.0" width="1.8" height="1.8" opacity="0.93"/><rect x="0.8" y="-1.8" width="1.2" height="1.2" opacity="0.96"/><rect x="-2.9" y="-6.1" width="0.9" height="0.9" opacity="0.91"/><rect x="-4.7" y="-4.5" width="1.8" height="1.8" opacity="0.99"/><rect x="-2.3" y="-4.5" width="1.6" height="1.6" opacity="0.76"/><rect x="2.0" y="-3.3" width="1.1" height="1.1" opacity="0.70"/><rect x="-5.9" y="2.3" width="1.2" height="1.2" opacity="0.66"/><rect x="7.3" y="-3.1" width="0.9" height="0.9" opacity="0.91"/><rect x="-1.7" y="-5.0" width="1.7" height="1.7" opacity="0.97"/><rect x="5.3" y="-0.4" width="1.0" height="1.0" opacity="0.64"/><rect x="3.5" y="1.8" width="1.0" height="1.0" opacity="0.97"/><rect x="-2.9" y="-2.8" width="0.9" height="0.9" opacity="0.70"/><rect x="11.4" y="0.2" width="1.6" height="1.6" opacity="0.65"/><rect x="1.0" y="4.9" width="1.7" height="1.7" opacity="0.89"/><rect x="-4.4" y="-4.7" width="1.8" height="1.8" opacity="0.95"/><rect x="-6.5" y="-2.8" width="1.7" height="1.7" opacity="0.69"/><rect x="3.2" y="1.5" width="1.9" height="1.9" opacity="0.92"/><rect x="0.1" y="4.4" width="1.9" height="1.9" opacity="0.78"/><rect x="-9.0" y="0.7" width="1.4" height="1.4" opacity="0.76"/><rect x="-7.8" y="-1.0" width="1.0" height="1.0" opacity="0.77"/><rect x="-8.4" y="-3.8" width="1.8" height="1.8" opacity="0.96"/><rect x="-0.0" y="2.5" width="1.7" height="1.7" opacity="0.63"/><rect x="0.9" y="2.9" width="1.4" height="1.4" opacity="0.72"/><rect x="3.0" y="2.9" width="1.8" height="1.8" opacity="0.91"/><rect x="-12.1" y="0.6" width="1.0" height="1.0" opacity="0.97"/><rect x="7.7" y="-1.0" width="1.7" height="1.7" opacity="0.92"/><rect x="8.2" y="-2.3" width="1.2" height="1.2" opacity="0.93"/><rect x="-1.7" y="-0.8" width="2.0" height="2.0" opacity="0.89"/><rect x="8.8" y="-3.3" width="0.9" height="0.9" opacity="0.99"/><rect x="-2.0" y="0.4" width="1.2" height="1.2" opacity="0.86"/><rect x="10.0" y="-1.7" width="1.2" height="1.2" opacity="0.64"/><rect x="-6.4" y="-3.3" width="1.7" height="1.7" opacity="0.90"/><rect x="0.3" y="2.3" width="1.6" height="1.6" opacity="0.70"/><rect x="6.4" y="-2.0" width="1.3" height="1.3" opacity="0.70"/><rect x="9.9" y="1.0" width="0.8" height="0.8" opacity="0.80"/><rect x="-6.8" y="0.6" width="1.0" height="1.0" opacity="0.74"/><rect x="-2.1" y="-4.7" width="1.4" height="1.4" opacity="0.72"/><rect x="-7.7" y="0.4" width="1.7" height="1.7" opacity="0.67"/><rect x="-2.5" y="-3.0" width="1.9" height="1.9" opacity="0.93"/><rect x="3.9" y="1.9" width="1.2" height="1.2" opacity="0.77"/><rect x="-3.2" y="-3.5" width="0.8" height="0.8" opacity="0.89"/><rect x="7.8" y="-2.4" width="2.0" height="2.0" opacity="0.71"/><rect x="3.9" y="6.5" width="1.3" height="1.3" opacity="0.89"/><rect x="5.1" y="-0.2" width="1.7" height="1.7" opacity="0.92"/><rect x="-3.9" y="-5.2" width="2.0" height="2.0" opacity="0.87"/><rect x="-6.7" y="3.3" width="1.5" height="1.5" opacity="0.75"/><rect x="-6.8" y="-0.2" width="1.3" height="1.3" opacity="0.95"/><rect x="-4.0" y="-5.7" width="1.4" height="1.4" opacity="0.83"/><rect x="-2.9" y="2.4" width="1.2" height="1.2" opacity="0.90"/><rect x="-8.9" y="2.2" width="1.9" height="1.9" opacity="0.63"/><rect x="0.1" y="-4.9" width="0.8" height="0.8" opacity="0.82"/><rect x="-0.5" y="2.4" width="1.4" height="1.4" opacity="0.77"/><rect x="5.6" y="-1.8" width="1.4" height="1.4" opacity="0.61"/><rect x="-2.0" y="-5.6" width="1.7" height="1.7" opacity="0.88"/><rect x="2.4" y="-2.2" width="1.6" height="1.6" opacity="0.78"/><rect x="5.9" y="-3.0" width="1.1" height="1.1" opacity="0.80"/><rect x="-1.4" y="-2.4" width="1.2" height="1.2" opacity="0.74"/><rect x="-7.6" y="-0.8" width="1.0" height="1.0" opacity="0.66"/><rect x="1.9" y="3.3" width="1.7" height="1.7" opacity="0.66"/><rect x="-7.4" y="-1.6" width="1.3" height="1.3" opacity="0.86"/><rect x="3.9" y="3.5" width="1.7" height="1.7" opacity="0.88"/><rect x="-8.6" y="2.2" width="2.0" height="2.0" opacity="0.89"/><rect x="-2.7" y="0.7" width="1.0" height="1.0" opacity="0.77"/><rect x="10.6" y="1.6" width="1.2" height="1.2" opacity="0.61"/><rect x="6.9" y="2.6" width="1.6" height="1.6" opacity="0.74"/><rect x="-6.4" y="1.2" width="1.5" height="1.5" opacity="0.78"/><rect x="2.6" y="3.0" width="1.8" height="1.8" opacity="0.62"/><rect x="5.9" y="2.7" width="1.5" height="1.5" opacity="0.79"/><rect x="6.9" y="0.1" width="1.1" height="1.1" opacity="0.88"/><rect x="6.5" y="-3.1" width="0.8" height="0.8" opacity="0.88"/><rect x="3.1" y="1.4" width="1.4" height="1.4" opacity="0.94"/><rect x="4.0" y="-0.2" width="1.6" height="1.6" opacity="0.77"/><rect x="3.5" y="6.2" width="0.8" height="0.8" opacity="0.71"/><rect x="-9.0" y="-3.8" width="1.9" height="1.9" opacity="0.98"/><rect x="9.7" y="0.2" width="1.8" height="1.8" opacity="0.65"/><rect x="-4.1" y="-2.0" width="0.9" height="0.9" opacity="0.79"/><rect x="-6.0" y="-3.5" width="1.2" height="1.2" opacity="0.99"/><rect x="3.0" y="5.8" width="1.9" height="1.9" opacity="0.65"/><rect x="-6.8" y="-4.4" width="1.1" height="1.1" opacity="0.91"/><rect x="6.3" y="0.7" width="1.7" height="1.7" opacity="0.89"/><rect x="4.2" y="1.7" width="0.9" height="0.9" opacity="0.82"/><rect x="7.7" y="0.1" width="1.8" height="1.8" opacity="0.79"/><rect x="-4.5" y="-3.5" width="1.8" height="1.8" opacity="0.68"/><rect x="6.0" y="1.1" width="1.6" height="1.6" opacity="0.77"/><rect x="11.6" y="-2.2" width="0.9" height="0.9" opacity="0.88"/><rect x="8.8" y="-0.8" width="1.4" height="1.4" opacity="0.80"/><rect x="-7.8" y="-1.2" width="1.9" height="1.9" opacity="0.76"/><rect x="-7.1" y="0.5" width="1.0" height="1.0" opacity="1.00"/></g>
<g transform="translate(93.5,420)" fill="#fff"><rect x="8.7" y="-1.9" width="0.8" height="0.8" opacity="0.85"/><rect x="7.3" y="-1.4" width="1.3" height="1.3" opacity="0.98"/><rect x="-9.5" y="-3.1" width="1.4" height="1.4" opacity="0.99"/><rect x="6.6" y="3.2" width="1.7" height="1.7" opacity="0.62"/><rect x="9.7" y="0.9" width="1.0" height="1.0" opacity="0.91"/><rect x="2.4" y="3.2" width="1.9" height="1.9" opacity="0.77"/><rect x="6.3" y="1.6" width="1.9" height="1.9" opacity="0.75"/><rect x="-3.7" y="-5.1" width="1.4" height="1.4" opacity="1.00"/><rect x="0.1" y="-0.3" width="1.1" height="1.1" opacity="0.69"/><rect x="-6.6" y="-3.8" width="1.9" height="1.9" opacity="0.79"/><rect x="7.2" y="-3.3" width="1.7" height="1.7" opacity="0.72"/><rect x="7.4" y="-1.6" width="1.6" height="1.6" opacity="0.79"/><rect x="3.1" y="5.2" width="1.8" height="1.8" opacity="0.92"/><rect x="-6.3" y="-5.6" width="0.9" height="0.9" opacity="0.90"/><rect x="1.9" y="-2.1" width="1.4" height="1.4" opacity="0.82"/><rect x="6.7" y="-2.8" width="1.5" height="1.5" opacity="0.80"/><rect x="-3.4" y="-4.8" width="1.2" height="1.2" opacity="0.85"/><rect x="-8.9" y="-3.2" width="1.2" height="1.2" opacity="0.76"/><rect x="1.9" y="5.3" width="1.5" height="1.5" opacity="0.78"/><rect x="4.5" y="-1.2" width="1.3" height="1.3" opacity="0.84"/><rect x="8.8" y="1.7" width="1.0" height="1.0" opacity="0.62"/><rect x="7.6" y="0.6" width="1.2" height="1.2" opacity="0.62"/><rect x="0.5" y="-2.4" width="1.1" height="1.1" opacity="0.88"/><rect x="-1.7" y="-5.6" width="0.9" height="0.9" opacity="0.67"/><rect x="-1.1" y="-6.5" width="0.9" height="0.9" opacity="0.84"/><rect x="7.6" y="-2.6" width="1.0" height="1.0" opacity="0.62"/><rect x="8.5" y="1.4" width="1.3" height="1.3" opacity="0.83"/><rect x="-0.3" y="-6.5" width="1.5" height="1.5" opacity="0.64"/><rect x="-5.0" y="0.1" width="1.4" height="1.4" opacity="0.89"/><rect x="-8.3" y="-4.8" width="1.1" height="1.1" opacity="0.96"/><rect x="-10.3" y="-3.0" width="1.0" height="1.0" opacity="0.89"/><rect x="9.7" y="0.3" width="0.9" height="0.9" opacity="0.95"/><rect x="-4.0" y="-3.0" width="1.5" height="1.5" opacity="0.86"/><rect x="6.8" y="-1.0" width="1.2" height="1.2" opacity="0.68"/><rect x="-3.7" y="-3.7" width="1.9" height="1.9" opacity="0.81"/><rect x="8.9" y="-0.8" width="1.3" height="1.3" opacity="0.89"/><rect x="4.8" y="3.4" width="1.9" height="1.9" opacity="0.67"/><rect x="-8.7" y="0.5" width="1.7" height="1.7" opacity="0.67"/><rect x="-2.9" y="-6.0" width="1.4" height="1.4" opacity="0.76"/><rect x="-3.3" y="-4.8" width="1.8" height="1.8" opacity="0.86"/><rect x="3.8" y="-1.4" width="1.6" height="1.6" opacity="0.75"/><rect x="5.7" y="-0.0" width="1.9" height="1.9" opacity="1.00"/><rect x="-4.8" y="-4.7" width="1.0" height="1.0" opacity="0.67"/><rect x="10.1" y="0.6" width="1.1" height="1.1" opacity="0.87"/><rect x="7.5" y="-0.8" width="1.1" height="1.1" opacity="0.68"/><rect x="-3.5" y="-3.9" width="1.5" height="1.5" opacity="0.99"/><rect x="-3.3" y="-4.1" width="1.7" height="1.7" opacity="0.92"/><rect x="7.9" y="-2.9" width="1.6" height="1.6" opacity="0.83"/><rect x="-5.0" y="-3.0" width="1.4" height="1.4" opacity="0.93"/><rect x="-6.1" y="-0.9" width="1.4" height="1.4" opacity="0.82"/><rect x="-3.2" y="-4.7" width="2.0" height="2.0" opacity="0.70"/><rect x="-2.8" y="-6.0" width="1.7" height="1.7" opacity="0.91"/><rect x="-7.3" y="0.8" width="1.0" height="1.0" opacity="0.92"/><rect x="-8.9" y="-2.1" width="1.1" height="1.1" opacity="0.71"/><rect x="-5.6" y="-1.4" width="0.9" height="0.9" opacity="0.75"/><rect x="-6.2" y="1.8" width="1.9" height="1.9" opacity="0.70"/><rect x="5.8" y="-5.2" width="1.4" height="1.4" opacity="0.72"/><rect x="-6.3" y="-0.6" width="1.0" height="1.0" opacity="0.70"/><rect x="-8.1" y="-0.1" width="1.9" height="1.9" opacity="0.77"/><rect x="-7.6" y="0.1" width="1.8" height="1.8" opacity="0.61"/><rect x="5.4" y="0.6" width="0.9" height="0.9" opacity="0.67"/><rect x="3.4" y="5.1" width="1.6" height="1.6" opacity="0.64"/><rect x="9.7" y="1.6" width="1.6" height="1.6" opacity="0.82"/><rect x="4.3" y="2.1" width="1.0" height="1.0" opacity="0.76"/><rect x="-1.7" y="0.1" width="1.2" height="1.2" opacity="0.70"/><rect x="5.4" y="0.1" width="1.2" height="1.2" opacity="0.97"/><rect x="-3.0" y="-5.4" width="1.7" height="1.7" opacity="0.82"/><rect x="7.3" y="-1.3" width="1.1" height="1.1" opacity="0.64"/><rect x="3.7" y="3.0" width="1.4" height="1.4" opacity="0.64"/><rect x="9.4" y="-1.6" width="1.9" height="1.9" opacity="0.70"/><rect x="-3.4" y="-2.0" width="1.6" height="1.6" opacity="0.75"/><rect x="1.0" y="-3.1" width="1.3" height="1.3" opacity="0.86"/><rect x="-7.2" y="-2.9" width="1.4" height="1.4" opacity="0.90"/><rect x="-8.3" y="-2.2" width="1.3" height="1.3" opacity="0.94"/><rect x="-4.9" y="-5.4" width="1.3" height="1.3" opacity="0.66"/><rect x="-5.3" y="-5.2" width="0.9" height="0.9" opacity="0.68"/><rect x="6.4" y="4.7" width="1.4" height="1.4" opacity="0.82"/><rect x="-5.1" y="3.6" width="1.4" height="1.4" opacity="0.65"/><rect x="0.7" y="-0.3" width="1.6" height="1.6" opacity="0.86"/><rect x="-3.0" y="-5.0" width="1.1" height="1.1" opacity="0.69"/><rect x="8.2" y="1.6" width="1.0" height="1.0" opacity="0.81"/><rect x="-1.3" y="-3.4" width="1.8" height="1.8" opacity="0.90"/><rect x="-8.8" y="1.2" width="1.1" height="1.1" opacity="0.98"/><rect x="-2.9" y="-4.1" width="1.5" height="1.5" opacity="0.91"/><rect x="-1.4" y="-4.8" width="1.0" height="1.0" opacity="0.85"/><rect x="-7.7" y="-2.5" width="1.4" height="1.4" opacity="0.98"/><rect x="-7.6" y="-7.9" width="1.6" height="1.6" opacity="0.82"/><rect x="-5.9" y="1.3" width="1.7" height="1.7" opacity="0.93"/><rect x="4.4" y="0.8" width="1.4" height="1.4" opacity="0.97"/><rect x="4.9" y="4.9" width="1.2" height="1.2" opacity="0.70"/><rect x="0.4" y="2.7" width="1.4" height="1.4" opacity="0.94"/><rect x="-0.7" y="3.1" width="1.4" height="1.4" opacity="0.79"/><rect x="-0.7" y="-5.4" width="1.8" height="1.8" opacity="0.63"/><rect x="-9.9" y="-4.1" width="1.5" height="1.5" opacity="0.97"/><rect x="9.9" y="-4.3" width="1.1" height="1.1" opacity="0.69"/><rect x="-7.7" y="-3.3" width="0.8" height="0.8" opacity="0.77"/><rect x="8.4" y="-2.4" width="1.7" height="1.7" opacity="0.90"/><rect x="-8.2" y="-2.6" width="1.4" height="1.4" opacity="0.79"/><rect x="3.9" y="1.6" width="1.9" height="1.9" opacity="0.73"/><rect x="10.0" y="-3.4" width="1.8" height="1.8" opacity="0.93"/><rect x="3.2" y="3.2" width="1.2" height="1.2" opacity="0.84"/><rect x="-6.8" y="0.1" width="1.2" height="1.2" opacity="0.74"/><rect x="-7.0" y="-4.3" width="1.9" height="1.9" opacity="0.73"/><rect x="7.4" y="0.1" width="1.0" height="1.0" opacity="0.99"/><rect x="-4.7" y="-2.9" width="1.4" height="1.4" opacity="0.99"/><rect x="12.0" y="0.5" width="0.9" height="0.9" opacity="0.75"/><rect x="-4.1" y="3.2" width="1.1" height="1.1" opacity="0.61"/><rect x="-7.2" y="2.3" width="1.2" height="1.2" opacity="0.83"/><rect x="10.9" y="-2.0" width="1.1" height="1.1" opacity="0.93"/><rect x="-6.3" y="-3.7" width="1.2" height="1.2" opacity="0.61"/><rect x="-7.6" y="-4.5" width="1.7" height="1.7" opacity="0.86"/><rect x="-7.9" y="-4.8" width="1.4" height="1.4" opacity="0.70"/><rect x="-5.4" y="-3.5" width="2.0" height="2.0" opacity="0.92"/><rect x="0.3" y="4.3" width="1.0" height="1.0" opacity="0.89"/><rect x="-3.3" y="-3.8" width="2.0" height="2.0" opacity="0.89"/><rect x="8.2" y="-2.1" width="1.5" height="1.5" opacity="0.83"/><rect x="-2.1" y="-3.1" width="0.8" height="0.8" opacity="0.81"/><rect x="-3.7" y="1.1" width="1.8" height="1.8" opacity="0.74"/><rect x="-0.8" y="5.1" width="1.3" height="1.3" opacity="0.60"/><rect x="-4.6" y="-5.7" width="1.0" height="1.0" opacity="0.78"/><rect x="-4.3" y="-2.8" width="1.0" height="1.0" opacity="0.60"/><rect x="-0.1" y="-4.7" width="1.2" height="1.2" opacity="0.62"/><rect x="5.3" y="3.9" width="2.0" height="2.0" opacity="0.68"/><rect x="-7.2" y="-4.8" width="1.1" height="1.1" opacity="0.64"/><rect x="-5.2" y="-0.1" width="1.2" height="1.2" opacity="0.79"/><rect x="0.3" y="-3.4" width="1.0" height="1.0" opacity="0.75"/><rect x="2.5" y="4.6" width="1.6" height="1.6" opacity="0.78"/><rect x="5.3" y="5.5" width="1.6" height="1.6" opacity="0.75"/><rect x="4.2" y="0.7" width="1.3" height="1.3" opacity="0.99"/><rect x="0.7" y="2.1" width="1.3" height="1.3" opacity="0.67"/></g>
<g transform="translate(125.5,420)" fill="#fff"><rect x="1.7" y="4.7" width="1.5" height="1.5" opacity="0.96"/><rect x="-2.3" y="0.4" width="1.6" height="1.6" opacity="0.90"/><rect x="-8.0" y="0.4" width="1.8" height="1.8" opacity="0.80"/><rect x="-1.3" y="4.8" width="1.8" height="1.8" opacity="0.68"/><rect x="6.4" y="-0.7" width="0.9" height="0.9" opacity="0.65"/><rect x="-1.2" y="-4.1" width="1.9" height="1.9" opacity="0.87"/><rect x="-8.7" y="-2.9" width="1.4" height="1.4" opacity="0.68"/><rect x="-6.0" y="-0.3" width="1.7" height="1.7" opacity="0.74"/><rect x="7.7" y="0.5" width="1.5" height="1.5" opacity="0.82"/><rect x="6.9" y="5.5" width="1.9" height="1.9" opacity="0.98"/><rect x="9.3" y="-2.2" width="0.8" height="0.8" opacity="0.72"/><rect x="-8.3" y="-4.3" width="0.8" height="0.8" opacity="0.98"/><rect x="-5.3" y="-2.6" width="1.2" height="1.2" opacity="0.94"/><rect x="-2.5" y="-5.2" width="1.6" height="1.6" opacity="0.66"/><rect x="-3.4" y="-1.6" width="1.7" height="1.7" opacity="0.79"/><rect x="-7.5" y="4.0" width="1.4" height="1.4" opacity="0.61"/><rect x="5.4" y="0.7" width="1.7" height="1.7" opacity="0.63"/><rect x="2.1" y="3.9" width="1.3" height="1.3" opacity="0.64"/><rect x="5.2" y="-0.6" width="0.9" height="0.9" opacity="0.95"/><rect x="6.3" y="1.1" width="1.8" height="1.8" opacity="0.93"/><rect x="-5.1" y="-0.5" width="1.1" height="1.1" opacity="0.87"/><rect x="-1.3" y="0.1" width="1.3" height="1.3" opacity="0.91"/><rect x="-3.8" y="-5.2" width="1.4" height="1.4" opacity="0.85"/><rect x="8.6" y="-1.1" width="1.7" height="1.7" opacity="0.69"/><rect x="8.0" y="1.0" width="1.8" height="1.8" opacity="0.74"/><rect x="11.6" y="2.7" width="1.4" height="1.4" opacity="0.88"/><rect x="-5.7" y="0.1" width="2.0" height="2.0" opacity="0.68"/><rect x="0.5" y="1.0" width="1.2" height="1.2" opacity="0.94"/><rect x="7.2" y="-0.3" width="1.9" height="1.9" opacity="0.75"/><rect x="-4.2" y="-3.3" width="0.9" height="0.9" opacity="0.62"/><rect x="10.0" y="0.2" width="0.8" height="0.8" opacity="0.61"/><rect x="1.5" y="-3.7" width="1.1" height="1.1" opacity="0.83"/><rect x="2.2" y="5.4" width="1.6" height="1.6" opacity="0.74"/><rect x="3.4" y="3.6" width="1.1" height="1.1" opacity="0.80"/><rect x="-4.9" y="-4.8" width="1.1" height="1.1" opacity="0.72"/><rect x="-8.3" y="-2.0" width="1.7" height="1.7" opacity="0.82"/><rect x="12.2" y="-1.0" width="1.8" height="1.8" opacity="0.65"/><rect x="-1.9" y="-4.1" width="1.6" height="1.6" opacity="0.94"/><rect x="-1.4" y="-1.0" width="1.1" height="1.1" opacity="0.75"/><rect x="-8.3" y="-0.6" width="1.6" height="1.6" opacity="0.94"/><rect x="-4.2" y="0.1" width="1.2" height="1.2" opacity="0.61"/><rect x="-3.7" y="-3.7" width="1.6" height="1.6" opacity="0.86"/><rect x="-3.8" y="-5.0" width="1.0" height="1.0" opacity="0.93"/><rect x="2.4" y="0.8" width="1.5" height="1.5" opacity="0.65"/><rect x="6.5" y="3.5" width="1.0" height="1.0" opacity="0.84"/><rect x="-3.4" y="-4.7" width="0.8" height="0.8" opacity="0.94"/><rect x="-2.3" y="-5.7" width="1.9" height="1.9" opacity="0.65"/><rect x="1.0" y="4.8" width="1.8" height="1.8" opacity="0.93"/><rect x="-1.8" y="-5.1" width="1.0" height="1.0" opacity="0.76"/><rect x="-6.8" y="-5.0" width="1.3" height="1.3" opacity="0.64"/><rect x="-3.9" y="-5.1" width="1.8" height="1.8" opacity="0.66"/><rect x="6.8" y="-2.4" width="1.8" height="1.8" opacity="0.90"/><rect x="-10.9" y="-0.8" width="1.0" height="1.0" opacity="0.67"/><rect x="4.1" y="4.6" width="1.9" height="1.9" opacity="0.86"/><rect x="-5.1" y="-4.1" width="1.9" height="1.9" opacity="0.61"/><rect x="9.6" y="0.1" width="1.5" height="1.5" opacity="0.63"/><rect x="-5.4" y="-3.3" width="1.3" height="1.3" opacity="0.99"/><rect x="7.8" y="0.3" width="1.3" height="1.3" opacity="0.82"/><rect x="-3.3" y="-5.6" width="1.6" height="1.6" opacity="0.96"/><rect x="-5.5" y="-6.9" width="2.0" height="2.0" opacity="0.90"/><rect x="1.1" y="0.9" width="1.9" height="1.9" opacity="0.77"/><rect x="2.7" y="6.3" width="1.4" height="1.4" opacity="0.77"/><rect x="7.9" y="0.3" width="2.0" height="2.0" opacity="0.77"/><rect x="7.8" y="1.2" width="1.4" height="1.4" opacity="0.98"/><rect x="-0.9" y="4.0" width="1.6" height="1.6" opacity="0.67"/><rect x="-3.3" y="-4.6" width="1.4" height="1.4" opacity="0.63"/><rect x="-10.8" y="1.2" width="1.4" height="1.4" opacity="0.71"/><rect x="3.8" y="1.8" width="0.8" height="0.8" opacity="0.82"/><rect x="4.5" y="3.0" width="1.2" height="1.2" opacity="0.90"/><rect x="-1.7" y="2.3" width="1.0" height="1.0" opacity="0.99"/><rect x="5.4" y="2.9" width="1.0" height="1.0" opacity="0.83"/><rect x="-11.6" y="-2.1" width="1.6" height="1.6" opacity="0.84"/><rect x="-2.8" y="-3.5" width="1.7" height="1.7" opacity="0.66"/><rect x="-10.9" y="-1.5" width="1.2" height="1.2" opacity="0.77"/><rect x="0.8" y="7.3" width="1.2" height="1.2" opacity="0.71"/><rect x="-0.5" y="0.7" width="1.4" height="1.4" opacity="0.99"/><rect x="-3.3" y="-4.5" width="1.8" height="1.8" opacity="1.00"/><rect x="-6.3" y="-2.8" width="1.8" height="1.8" opacity="0.65"/><rect x="-8.9" y="-1.8" width="1.4" height="1.4" opacity="0.96"/><rect x="-1.3" y="6.2" width="1.9" height="1.9" opacity="0.65"/><rect x="-1.4" y="-3.3" width="1.5" height="1.5" opacity="0.95"/><rect x="-0.5" y="0.7" width="0.8" height="0.8" opacity="0.76"/><rect x="10.1" y="-2.1" width="1.4" height="1.4" opacity="0.84"/><rect x="-2.0" y="-4.5" width="1.8" height="1.8" opacity="0.70"/><rect x="8.6" y="-0.0" width="1.0" height="1.0" opacity="0.80"/><rect x="-6.0" y="-0.3" width="0.8" height="0.8" opacity="0.68"/><rect x="-4.3" y="-5.2" width="1.8" height="1.8" opacity="0.98"/><rect x="6.1" y="0.9" width="1.3" height="1.3" opacity="0.78"/><rect x="6.1" y="-3.4" width="0.9" height="0.9" opacity="0.70"/><rect x="2.4" y="-2.5" width="0.9" height="0.9" opacity="0.78"/><rect x="-7.9" y="0.8" width="1.0" height="1.0" opacity="0.98"/><rect x="5.4" y="4.2" width="0.9" height="0.9" opacity="0.90"/><rect x="3.5" y="4.0" width="1.7" height="1.7" opacity="0.64"/><rect x="0.6" y="-0.7" width="0.9" height="0.9" opacity="0.76"/><rect x="-8.9" y="2.3" width="0.8" height="0.8" opacity="0.81"/><rect x="-9.3" y="-0.1" width="1.7" height="1.7" opacity="0.93"/><rect x="-4.1" y="-6.0" width="0.9" height="0.9" opacity="0.64"/><rect x="-5.7" y="-2.0" width="1.5" height="1.5" opacity="0.62"/><rect x="6.0" y="0.1" width="1.8" height="1.8" opacity="0.90"/><rect x="3.8" y="3.7" width="1.4" height="1.4" opacity="0.69"/><rect x="9.4" y="0.5" width="1.5" height="1.5" opacity="0.94"/><rect x="-5.0" y="-4.2" width="1.0" height="1.0" opacity="0.83"/><rect x="0.3" y="-1.8" width="1.8" height="1.8" opacity="0.96"/><rect x="-3.3" y="-0.4" width="1.0" height="1.0" opacity="0.68"/><rect x="2.4" y="2.2" width="0.9" height="0.9" opacity="0.69"/><rect x="10.3" y="-0.2" width="1.1" height="1.1" opacity="0.89"/><rect x="-0.2" y="3.6" width="2.0" height="2.0" opacity="0.83"/><rect x="3.0" y="0.0" width="0.9" height="0.9" opacity="0.87"/><rect x="-4.5" y="1.9" width="1.6" height="1.6" opacity="0.67"/><rect x="-5.6" y="-2.0" width="0.8" height="0.8" opacity="0.66"/><rect x="-4.3" y="-5.0" width="1.5" height="1.5" opacity="0.93"/><rect x="2.9" y="3.7" width="0.9" height="0.9" opacity="0.65"/><rect x="-7.7" y="-4.2" width="1.7" height="1.7" opacity="0.80"/><rect x="4.2" y="2.0" width="1.2" height="1.2" opacity="0.87"/><rect x="5.0" y="1.8" width="1.6" height="1.6" opacity="0.61"/><rect x="-2.1" y="-5.6" width="1.5" height="1.5" opacity="0.71"/><rect x="6.5" y="2.8" width="1.7" height="1.7" opacity="0.87"/><rect x="-6.8" y="-0.9" width="1.4" height="1.4" opacity="0.94"/><rect x="2.5" y="-1.2" width="1.9" height="1.9" opacity="0.82"/><rect x="-1.0" y="4.4" width="1.1" height="1.1" opacity="0.79"/><rect x="0.3" y="4.8" width="2.0" height="2.0" opacity="0.63"/><rect x="-8.8" y="-4.1" width="1.9" height="1.9" opacity="0.90"/><rect x="-7.9" y="-3.1" width="1.3" height="1.3" opacity="0.64"/><rect x="-7.5" y="-0.0" width="1.3" height="1.3" opacity="0.93"/><rect x="-5.9" y="1.3" width="1.6" height="1.6" opacity="0.64"/><rect x="-1.8" y="-3.7" width="1.9" height="1.9" opacity="0.95"/><rect x="11.9" y="-1.9" width="1.1" height="1.1" opacity="0.98"/><rect x="1.2" y="4.7" width="1.8" height="1.8" opacity="0.88"/><rect x="-1.7" y="-1.6" width="1.8" height="1.8" opacity="0.91"/><rect x="2.8" y="3.5" width="1.5" height="1.5" opacity="0.67"/></g>
<g transform="translate(157.5,421) rotate(0)" fill="#fff"><rect x="-1.7" y="2.9" width="0.7" height="0.7" opacity="0.42"/><rect x="-4.0" y="-5.7" width="1.0" height="1.0" opacity="0.78"/><rect x="7.5" y="3.6" width="0.8" height="0.8" opacity="0.87"/><rect x="-2.6" y="0.1" width="0.9" height="0.9" opacity="0.49"/><rect x="6.6" y="-0.6" width="1.0" height="1.0" opacity="0.65"/><rect x="-3.4" y="6.1" width="0.9" height="0.9" opacity="0.63"/><rect x="-0.9" y="5.4" width="0.9" height="0.9" opacity="0.51"/><rect x="3.4" y="4.9" width="0.8" height="0.8" opacity="0.43"/><rect x="-1.2" y="8.3" width="0.6" height="0.6" opacity="0.79"/><rect x="-0.9" y="2.3" width="0.7" height="0.7" opacity="0.83"/><rect x="0.3" y="-1.8" width="0.9" height="0.9" opacity="0.71"/><rect x="-7.3" y="0.8" width="0.8" height="0.8" opacity="0.49"/><rect x="-1.1" y="-2.9" width="0.7" height="0.7" opacity="0.83"/><rect x="-5.9" y="-2.5" width="0.9" height="0.9" opacity="0.65"/><rect x="-5.0" y="4.2" width="0.5" height="0.5" opacity="0.58"/><rect x="8.7" y="2.1" width="1.0" height="1.0" opacity="0.73"/><rect x="4.5" y="6.6" width="0.6" height="0.6" opacity="0.80"/><rect x="-4.1" y="-5.4" width="0.9" height="0.9" opacity="0.53"/><rect x="3.3" y="-5.4" width="0.9" height="0.9" opacity="0.82"/><rect x="-0.2" y="5.4" width="0.7" height="0.7" opacity="0.44"/><rect x="5.3" y="-5.0" width="0.7" height="0.7" opacity="0.67"/><rect x="1.7" y="-1.5" width="0.7" height="0.7" opacity="0.74"/><rect x="-6.2" y="-1.3" width="0.6" height="0.6" opacity="0.51"/><rect x="-2.5" y="-4.4" width="1.0" height="1.0" opacity="0.85"/><rect x="4.7" y="-0.8" width="0.8" height="0.8" opacity="0.45"/><rect x="-1.6" y="1.8" width="0.8" height="0.8" opacity="0.88"/><rect x="0.4" y="-5.1" width="0.6" height="0.6" opacity="0.87"/><rect x="7.8" y="2.5" width="0.9" height="0.9" opacity="0.43"/><rect x="6.9" y="-2.1" width="0.7" height="0.7" opacity="0.61"/><rect x="-5.1" y="-3.9" width="0.9" height="0.9" opacity="0.85"/><rect x="-0.4" y="0.7" width="0.9" height="0.9" opacity="0.72"/><rect x="-1.4" y="-1.9" width="0.5" height="0.5" opacity="0.85"/><rect x="-4.1" y="4.4" width="1.0" height="1.0" opacity="0.50"/><rect x="-1.5" y="-1.6" width="0.8" height="0.8" opacity="0.77"/><rect x="4.3" y="6.2" width="1.0" height="1.0" opacity="0.81"/><rect x="2.2" y="-8.0" width="0.9" height="0.9" opacity="0.67"/><rect x="3.6" y="-6.8" width="0.8" height="0.8" opacity="0.73"/><rect x="2.3" y="4.5" width="0.7" height="0.7" opacity="0.83"/><rect x="1.0" y="-4.5" width="1.0" height="1.0" opacity="0.43"/><rect x="4.8" y="1.8" width="0.5" height="0.5" opacity="0.87"/><rect x="-3.5" y="4.1" width="0.9" height="0.9" opacity="0.67"/><rect x="-4.1" y="-4.1" width="0.7" height="0.7" opacity="0.88"/><rect x="-1.1" y="6.1" width="0.7" height="0.7" opacity="0.47"/><rect x="3.9" y="4.8" width="0.9" height="0.9" opacity="0.62"/><rect x="8.1" y="3.0" width="0.6" height="0.6" opacity="0.84"/><rect x="7.0" y="1.9" width="0.6" height="0.6" opacity="0.53"/><rect x="-6.9" y="3.5" width="0.7" height="0.7" opacity="0.61"/><rect x="-5.3" y="3.5" width="0.6" height="0.6" opacity="0.88"/><rect x="1.2" y="2.9" width="0.8" height="0.8" opacity="0.58"/><rect x="-0.3" y="-1.7" width="0.8" height="0.8" opacity="0.58"/><rect x="4.4" y="-2.1" width="0.7" height="0.7" opacity="0.56"/><rect x="-4.7" y="-0.9" width="0.8" height="0.8" opacity="0.61"/><rect x="-1.3" y="-4.4" width="0.7" height="0.7" opacity="0.68"/><rect x="-1.4" y="-6.7" width="0.7" height="0.7" opacity="0.44"/><rect x="2.6" y="2.1" width="0.6" height="0.6" opacity="0.49"/><rect x="-2.8" y="-4.2" width="1.0" height="1.0" opacity="0.52"/><rect x="0.1" y="3.6" width="0.6" height="0.6" opacity="0.74"/><rect x="-4.0" y="-2.0" width="0.9" height="0.9" opacity="0.74"/><rect x="-6.3" y="2.9" width="0.8" height="0.8" opacity="0.62"/><rect x="4.6" y="2.8" width="1.0" height="1.0" opacity="0.59"/><rect x="-1.7" y="-1.9" width="0.9" height="0.9" opacity="0.83"/><rect x="-3.8" y="3.7" width="0.8" height="0.8" opacity="0.53"/><rect x="0.8" y="3.0" width="0.8" height="0.8" opacity="0.65"/><rect x="8.5" y="-2.3" width="0.9" height="0.9" opacity="0.87"/><rect x="0.7" y="-1.1" width="0.6" height="0.6" opacity="0.89"/><rect x="5.0" y="-4.8" width="0.8" height="0.8" opacity="0.62"/><rect x="-3.1" y="1.5" width="0.8" height="0.8" opacity="0.54"/><rect x="6.1" y="5.5" width="0.8" height="0.8" opacity="0.84"/><rect x="-1.9" y="6.2" width="0.6" height="0.6" opacity="0.82"/><rect x="1.8" y="6.6" width="0.8" height="0.8" opacity="0.56"/><rect x="5.5" y="2.9" width="0.8" height="0.8" opacity="0.81"/><rect x="1.1" y="3.5" width="0.7" height="0.7" opacity="0.80"/><rect x="0.8" y="6.7" width="0.5" height="0.5" opacity="0.44"/><rect x="-1.6" y="-5.8" width="0.6" height="0.6" opacity="0.64"/><rect x="5.2" y="-1.9" width="0.8" height="0.8" opacity="0.61"/><rect x="-1.9" y="-0.1" width="0.9" height="0.9" opacity="0.69"/><rect x="-2.8" y="3.7" width="0.6" height="0.6" opacity="0.87"/><rect x="3.0" y="-4.4" width="0.8" height="0.8" opacity="0.68"/><rect x="0.5" y="1.5" width="0.9" height="0.9" opacity="0.48"/><rect x="-1.1" y="-0.4" width="0.5" height="0.5" opacity="0.48"/><rect x="-4.0" y="-5.5" width="1.0" height="1.0" opacity="0.73"/><rect x="-1.0" y="-0.1" width="1.0" height="1.0" opacity="0.64"/><rect x="1.2" y="-1.4" width="0.9" height="0.9" opacity="0.64"/><rect x="1.2" y="5.3" width="0.5" height="0.5" opacity="0.69"/><rect x="1.5" y="7.0" width="0.6" height="0.6" opacity="0.74"/><rect x="-5.6" y="-4.8" width="1.0" height="1.0" opacity="0.55"/><rect x="-2.3" y="-4.9" width="0.9" height="0.9" opacity="0.81"/><rect x="0.6" y="-6.6" width="0.6" height="0.6" opacity="0.85"/><rect x="8.6" y="-1.6" width="0.7" height="0.7" opacity="0.81"/><rect x="-3.6" y="-7.0" width="0.9" height="0.9" opacity="0.63"/><rect x="-6.3" y="4.6" width="0.8" height="0.8" opacity="0.67"/><rect x="1.1" y="-1.1" width="0.5" height="0.5" opacity="0.63"/><rect x="6.8" y="4.5" width="0.5" height="0.5" opacity="0.84"/><rect x="0.5" y="3.1" width="0.9" height="0.9" opacity="0.74"/><rect x="-5.9" y="3.5" width="0.8" height="0.8" opacity="0.87"/><rect x="-6.6" y="-0.3" width="0.7" height="0.7" opacity="0.61"/><rect x="-1.1" y="-2.6" width="0.8" height="0.8" opacity="0.86"/><rect x="0.5" y="-6.2" width="0.7" height="0.7" opacity="0.45"/><rect x="5.5" y="3.4" width="0.9" height="0.9" opacity="0.83"/><rect x="3.2" y="6.7" width="0.9" height="0.9" opacity="0.64"/><rect x="2.4" y="-2.9" width="0.7" height="0.7" opacity="0.66"/><rect x="-0.9" y="-5.6" width="0.7" height="0.7" opacity="0.83"/><rect x="-4.5" y="3.5" width="0.6" height="0.6" opacity="0.64"/><rect x="-1.5" y="-4.9" width="0.8" height="0.8" opacity="0.65"/><rect x="8.8" y="0.6" width="0.6" height="0.6" opacity="0.67"/><rect x="4.0" y="-1.0" width="0.5" height="0.5" opacity="0.50"/><rect x="4.8" y="6.4" width="0.8" height="0.8" opacity="0.42"/><rect x="-0.9" y="6.0" width="0.6" height="0.6" opacity="0.55"/><rect x="5.0" y="-3.2" width="0.6" height="0.6" opacity="0.70"/><rect x="4.9" y="4.0" width="0.8" height="0.8" opacity="0.44"/><rect x="-4.8" y="-1.4" width="0.9" height="0.9" opacity="0.71"/><rect x="5.9" y="-3.6" width="0.6" height="0.6" opacity="0.49"/><rect x="-2.3" y="-7.3" width="0.5" height="0.5" opacity="0.61"/><rect x="-1.3" y="5.7" width="0.9" height="0.9" opacity="0.68"/><rect x="-0.3" y="-7.4" width="0.6" height="0.6" opacity="0.71"/><rect x="-4.4" y="4.1" width="0.8" height="0.8" opacity="0.73"/><rect x="4.0" y="6.8" width="0.6" height="0.6" opacity="0.56"/><rect x="5.2" y="-6.8" width="0.7" height="0.7" opacity="0.88"/><rect x="8.6" y="1.9" width="0.6" height="0.6" opacity="0.42"/><rect x="0.3" y="-3.4" width="0.9" height="0.9" opacity="0.40"/><rect x="3.8" y="3.6" width="0.5" height="0.5" opacity="0.64"/><rect x="-4.4" y="6.0" width="0.7" height="0.7" opacity="0.88"/><rect x="2.1" y="-2.9" width="1.0" height="1.0" opacity="0.85"/><rect x="-6.0" y="-2.4" width="0.6" height="0.6" opacity="0.56"/><rect x="0.7" y="3.7" width="0.8" height="0.8" opacity="0.56"/><rect x="0.8" y="-6.4" width="0.9" height="0.9" opacity="0.44"/><rect x="3.7" y="-5.0" width="0.8" height="0.8" opacity="0.52"/><rect x="-1.9" y="-5.1" width="0.9" height="0.9" opacity="0.69"/><rect x="3.1" y="3.6" width="0.9" height="0.9" opacity="0.41"/><rect x="-4.5" y="-4.6" width="0.9" height="0.9" opacity="0.56"/><rect x="-6.1" y="0.8" width="0.9" height="0.9" opacity="0.44"/><rect x="-4.6" y="-0.3" width="0.8" height="0.8" opacity="0.53"/><rect x="1.2" y="3.9" width="0.9" height="0.9" opacity="0.58"/><rect x="5.6" y="-5.0" width="0.6" height="0.6" opacity="0.68"/><rect x="8.7" y="0.4" width="0.8" height="0.8" opacity="0.46"/><rect x="-6.3" y="-0.7" width="0.8" height="0.8" opacity="0.54"/><rect x="6.0" y="-3.6" width="0.5" height="0.5" opacity="0.81"/><rect x="3.7" y="-3.1" width="0.9" height="0.9" opacity="0.83"/><rect x="1.8" y="-1.5" width="0.9" height="0.9" opacity="0.52"/><rect x="2.4" y="-6.7" width="0.7" height="0.7" opacity="0.85"/><rect x="3.0" y="-8.0" width="1.0" height="1.0" opacity="0.69"/><rect x="-0.7" y="-6.9" width="0.7" height="0.7" opacity="0.65"/><rect x="-4.2" y="-0.2" width="0.6" height="0.6" opacity="0.82"/><rect x="4.3" y="-5.8" width="0.8" height="0.8" opacity="0.66"/><rect x="-6.6" y="-3.1" width="0.5" height="0.5" opacity="0.62"/><rect x="4.0" y="-0.7" width="0.7" height="0.7" opacity="0.44"/><rect x="-0.3" y="7.7" width="0.5" height="0.5" opacity="0.80"/><rect x="2.5" y="-7.6" width="0.6" height="0.6" opacity="0.87"/><rect x="-4.2" y="4.1" width="1.0" height="1.0" opacity="0.67"/><rect x="-1.3" y="-2.6" width="0.5" height="0.5" opacity="0.53"/></g>
<g transform="translate(189.5,421) rotate(0)" fill="#fff"><rect x="4.7" y="4.2" width="0.8" height="0.8" opacity="0.98"/><rect x="-0.9" y="-2.1" width="1.2" height="1.2" opacity="0.66"/><rect x="-1.2" y="-0.2" width="1.3" height="1.3" opacity="0.89"/><rect x="-4.3" y="-2.7" width="0.9" height="0.9" opacity="0.56"/><rect x="-2.4" y="5.3" width="1.1" height="1.1" opacity="0.57"/><rect x="0.2" y="4.1" width="0.6" height="0.6" opacity="0.52"/><rect x="-1.6" y="0.6" width="1.3" height="1.3" opacity="0.56"/><rect x="-0.0" y="-6.5" width="0.9" height="0.9" opacity="0.77"/><rect x="4.4" y="-0.3" width="0.9" height="0.9" opacity="0.99"/><rect x="-1.2" y="3.5" width="0.9" height="0.9" opacity="0.83"/><rect x="3.6" y="-3.7" width="0.7" height="0.7" opacity="1.00"/><rect x="-0.6" y="-4.3" width="1.3" height="1.3" opacity="0.55"/><rect x="-4.6" y="-3.7" width="1.2" height="1.2" opacity="0.84"/><rect x="3.4" y="1.6" width="0.8" height="0.8" opacity="0.80"/><rect x="-2.8" y="2.4" width="1.0" height="1.0" opacity="0.79"/><rect x="2.0" y="-1.9" width="0.8" height="0.8" opacity="0.59"/><rect x="4.7" y="4.6" width="1.3" height="1.3" opacity="0.56"/><rect x="-4.4" y="6.1" width="1.3" height="1.3" opacity="0.99"/><rect x="2.7" y="-0.1" width="0.7" height="0.7" opacity="0.62"/><rect x="-0.6" y="-0.0" width="0.8" height="0.8" opacity="0.74"/><rect x="-0.8" y="-1.9" width="0.7" height="0.7" opacity="0.67"/><rect x="1.4" y="1.0" width="0.7" height="0.7" opacity="0.90"/><rect x="0.7" y="-0.7" width="1.2" height="1.2" opacity="0.92"/><rect x="-1.6" y="-2.5" width="1.3" height="1.3" opacity="0.54"/><rect x="1.3" y="7.9" width="1.2" height="1.2" opacity="0.52"/><rect x="3.8" y="2.9" width="0.7" height="0.7" opacity="0.83"/><rect x="-1.1" y="-2.3" width="1.0" height="1.0" opacity="0.61"/><rect x="3.1" y="-3.7" width="1.2" height="1.2" opacity="0.81"/><rect x="6.2" y="2.8" width="1.2" height="1.2" opacity="0.76"/><rect x="-3.1" y="-2.3" width="1.2" height="1.2" opacity="0.77"/><rect x="-0.7" y="4.3" width="0.8" height="0.8" opacity="0.50"/><rect x="-6.4" y="-1.0" width="1.2" height="1.2" opacity="0.60"/><rect x="-4.2" y="-0.3" width="1.1" height="1.1" opacity="0.73"/><rect x="-4.8" y="-0.3" width="1.3" height="1.3" opacity="0.76"/><rect x="1.0" y="-5.4" width="0.7" height="0.7" opacity="0.63"/><rect x="-1.2" y="3.1" width="1.0" height="1.0" opacity="0.65"/><rect x="5.2" y="-0.1" width="0.9" height="0.9" opacity="0.85"/><rect x="1.7" y="-1.0" width="1.1" height="1.1" opacity="0.98"/><rect x="-4.6" y="5.3" width="1.2" height="1.2" opacity="0.66"/><rect x="3.6" y="5.2" width="0.9" height="0.9" opacity="0.68"/><rect x="-5.0" y="1.3" width="1.3" height="1.3" opacity="0.96"/><rect x="0.2" y="-2.2" width="0.9" height="0.9" opacity="0.50"/><rect x="0.9" y="3.2" width="0.7" height="0.7" opacity="0.74"/><rect x="3.1" y="3.9" width="0.9" height="0.9" opacity="0.62"/><rect x="-1.1" y="-3.0" width="0.6" height="0.6" opacity="0.92"/><rect x="0.2" y="-7.5" width="0.8" height="0.8" opacity="0.63"/><rect x="-0.6" y="-1.9" width="1.4" height="1.4" opacity="0.83"/><rect x="-1.0" y="-0.4" width="0.8" height="0.8" opacity="0.71"/><rect x="1.8" y="-0.2" width="1.1" height="1.1" opacity="0.54"/><rect x="5.2" y="-1.1" width="1.2" height="1.2" opacity="0.87"/><rect x="1.0" y="2.4" width="0.6" height="0.6" opacity="0.78"/><rect x="1.8" y="1.1" width="0.7" height="0.7" opacity="0.96"/><rect x="0.6" y="-2.9" width="1.4" height="1.4" opacity="0.58"/><rect x="2.0" y="2.8" width="1.2" height="1.2" opacity="0.55"/><rect x="1.0" y="-4.4" width="1.2" height="1.2" opacity="0.67"/><rect x="1.4" y="0.4" width="1.2" height="1.2" opacity="0.75"/><rect x="0.2" y="-2.4" width="0.8" height="0.8" opacity="0.61"/><rect x="2.9" y="-4.6" width="0.7" height="0.7" opacity="0.86"/><rect x="3.5" y="1.0" width="0.8" height="0.8" opacity="0.88"/><rect x="-0.9" y="-5.4" width="0.8" height="0.8" opacity="0.52"/><rect x="-3.1" y="-4.3" width="0.6" height="0.6" opacity="0.92"/><rect x="2.4" y="-2.1" width="1.0" height="1.0" opacity="0.83"/><rect x="4.1" y="-2.4" width="1.0" height="1.0" opacity="0.88"/><rect x="-0.8" y="0.1" width="1.0" height="1.0" opacity="0.71"/><rect x="-1.6" y="3.1" width="0.8" height="0.8" opacity="0.66"/><rect x="-0.1" y="-7.6" width="1.0" height="1.0" opacity="0.92"/><rect x="2.7" y="3.1" width="1.2" height="1.2" opacity="0.89"/><rect x="-1.5" y="1.4" width="1.4" height="1.4" opacity="0.80"/><rect x="-1.7" y="-2.7" width="0.7" height="0.7" opacity="0.79"/><rect x="-5.5" y="4.3" width="1.1" height="1.1" opacity="0.88"/><rect x="-4.8" y="-2.6" width="0.7" height="0.7" opacity="1.00"/><rect x="-3.8" y="-2.4" width="0.8" height="0.8" opacity="0.55"/><rect x="-1.4" y="-5.6" width="1.1" height="1.1" opacity="0.63"/><rect x="-5.4" y="0.5" width="1.1" height="1.1" opacity="0.95"/><rect x="4.7" y="3.3" width="0.6" height="0.6" opacity="0.81"/><rect x="-1.2" y="-0.3" width="0.9" height="0.9" opacity="0.83"/><rect x="0.9" y="-1.1" width="1.0" height="1.0" opacity="0.90"/><rect x="5.0" y="5.1" width="1.4" height="1.4" opacity="0.67"/><rect x="0.5" y="2.0" width="0.8" height="0.8" opacity="0.71"/><rect x="-4.2" y="2.4" width="0.6" height="0.6" opacity="0.71"/><rect x="1.7" y="0.3" width="1.2" height="1.2" opacity="0.56"/><rect x="-1.2" y="4.2" width="1.0" height="1.0" opacity="0.52"/><rect x="3.7" y="3.5" width="0.9" height="0.9" opacity="0.55"/><rect x="-3.0" y="0.5" width="1.4" height="1.4" opacity="0.52"/><rect x="0.5" y="1.3" width="1.0" height="1.0" opacity="0.98"/><rect x="0.3" y="-1.7" width="1.0" height="1.0" opacity="0.68"/></g>
<g transform="translate(221.5,420)" fill="#fff"><rect x="3.9" y="-1.9" width="1.1" height="1.1" opacity="0.77"/><rect x="-7.6" y="-0.2" width="1.3" height="1.3" opacity="0.93"/><rect x="3.0" y="-1.2" width="1.4" height="1.4" opacity="0.90"/><rect x="-3.2" y="-4.9" width="0.9" height="0.9" opacity="0.89"/><rect x="-1.5" y="-1.3" width="1.0" height="1.0" opacity="0.67"/><rect x="6.4" y="0.5" width="1.9" height="1.9" opacity="0.99"/><rect x="-0.2" y="-5.1" width="1.5" height="1.5" opacity="0.94"/><rect x="-10.7" y="1.1" width="0.8" height="0.8" opacity="0.91"/><rect x="7.4" y="0.2" width="0.8" height="0.8" opacity="0.60"/><rect x="-1.0" y="2.6" width="1.0" height="1.0" opacity="0.83"/><rect x="-1.1" y="3.1" width="2.0" height="2.0" opacity="0.87"/><rect x="7.8" y="2.8" width="1.5" height="1.5" opacity="0.69"/><rect x="-7.2" y="1.1" width="1.9" height="1.9" opacity="0.74"/><rect x="-2.9" y="2.8" width="1.9" height="1.9" opacity="0.88"/><rect x="1.8" y="4.0" width="1.9" height="1.9" opacity="0.68"/><rect x="-0.9" y="-4.6" width="1.2" height="1.2" opacity="0.77"/><rect x="-4.6" y="2.9" width="1.4" height="1.4" opacity="0.77"/><rect x="-4.6" y="-0.6" width="1.5" height="1.5" opacity="0.68"/><rect x="-2.7" y="-5.9" width="1.7" height="1.7" opacity="0.77"/><rect x="3.7" y="-1.6" width="1.0" height="1.0" opacity="0.78"/><rect x="-1.2" y="-2.1" width="1.9" height="1.9" opacity="0.89"/><rect x="-3.5" y="-4.9" width="1.5" height="1.5" opacity="0.69"/><rect x="-0.7" y="0.9" width="1.8" height="1.8" opacity="0.82"/><rect x="-4.5" y="-5.6" width="1.3" height="1.3" opacity="0.60"/><rect x="2.1" y="2.4" width="1.0" height="1.0" opacity="0.95"/><rect x="9.5" y="-3.3" width="1.8" height="1.8" opacity="0.80"/><rect x="7.2" y="3.5" width="1.3" height="1.3" opacity="0.93"/><rect x="6.4" y="-0.9" width="1.9" height="1.9" opacity="0.97"/><rect x="1.1" y="3.8" width="1.6" height="1.6" opacity="0.74"/><rect x="-5.0" y="3.2" width="0.9" height="0.9" opacity="0.68"/><rect x="1.0" y="4.7" width="1.7" height="1.7" opacity="0.91"/><rect x="1.4" y="5.3" width="0.8" height="0.8" opacity="0.70"/><rect x="3.8" y="-0.8" width="1.0" height="1.0" opacity="0.83"/><rect x="-0.3" y="-5.3" width="0.9" height="0.9" opacity="0.79"/><rect x="0.8" y="1.2" width="1.3" height="1.3" opacity="0.94"/><rect x="-5.9" y="1.1" width="0.9" height="0.9" opacity="0.97"/><rect x="-2.9" y="-5.2" width="1.0" height="1.0" opacity="0.78"/><rect x="8.0" y="-0.0" width="1.6" height="1.6" opacity="0.84"/><rect x="-6.2" y="-1.0" width="0.9" height="0.9" opacity="0.97"/><rect x="-3.3" y="-3.5" width="1.0" height="1.0" opacity="0.90"/><rect x="2.9" y="4.1" width="1.1" height="1.1" opacity="0.68"/><rect x="-14.3" y="0.3" width="1.9" height="1.9" opacity="0.74"/><rect x="6.0" y="0.6" width="1.9" height="1.9" opacity="0.97"/><rect x="7.5" y="-2.7" width="1.1" height="1.1" opacity="0.62"/><rect x="5.2" y="1.9" width="1.7" height="1.7" opacity="0.78"/><rect x="-4.8" y="-4.0" width="1.3" height="1.3" opacity="0.74"/><rect x="1.3" y="-1.5" width="1.8" height="1.8" opacity="0.77"/><rect x="1.6" y="2.9" width="1.2" height="1.2" opacity="0.62"/><rect x="0.8" y="6.3" width="1.1" height="1.1" opacity="0.60"/><rect x="7.9" y="-0.1" width="1.4" height="1.4" opacity="0.63"/><rect x="6.9" y="1.3" width="1.8" height="1.8" opacity="0.66"/><rect x="-3.9" y="-0.3" width="1.3" height="1.3" opacity="0.81"/><rect x="-7.9" y="-0.1" width="1.7" height="1.7" opacity="0.82"/><rect x="10.6" y="0.7" width="1.3" height="1.3" opacity="0.66"/><rect x="-6.0" y="-2.8" width="1.0" height="1.0" opacity="0.99"/><rect x="2.7" y="4.0" width="2.0" height="2.0" opacity="0.95"/><rect x="-8.6" y="-2.9" width="1.2" height="1.2" opacity="0.69"/><rect x="-5.3" y="-6.8" width="1.6" height="1.6" opacity="0.97"/><rect x="-5.3" y="-3.4" width="1.1" height="1.1" opacity="0.77"/><rect x="8.0" y="-2.5" width="1.4" height="1.4" opacity="0.91"/><rect x="-7.7" y="-1.8" width="0.8" height="0.8" opacity="0.94"/><rect x="-9.6" y="-1.8" width="1.3" height="1.3" opacity="0.87"/><rect x="-8.1" y="-2.7" width="1.4" height="1.4" opacity="0.94"/><rect x="5.0" y="-1.2" width="1.5" height="1.5" opacity="0.79"/><rect x="8.5" y="0.6" width="1.7" height="1.7" opacity="0.76"/><rect x="-6.4" y="-1.9" width="1.8" height="1.8" opacity="0.72"/><rect x="-4.8" y="-2.3" width="0.8" height="0.8" opacity="0.70"/><rect x="6.6" y="0.6" width="1.1" height="1.1" opacity="0.65"/><rect x="-7.8" y="1.4" width="1.0" height="1.0" opacity="0.71"/><rect x="9.9" y="0.1" width="1.4" height="1.4" opacity="0.90"/><rect x="-0.9" y="6.3" width="1.1" height="1.1" opacity="0.86"/><rect x="-7.5" y="-4.0" width="1.5" height="1.5" opacity="0.89"/><rect x="7.6" y="2.6" width="1.1" height="1.1" opacity="0.73"/><rect x="4.1" y="6.1" width="1.1" height="1.1" opacity="0.72"/><rect x="-4.4" y="0.7" width="1.0" height="1.0" opacity="0.76"/><rect x="5.3" y="2.3" width="1.3" height="1.3" opacity="0.71"/><rect x="3.2" y="-1.9" width="1.6" height="1.6" opacity="0.61"/><rect x="1.5" y="4.7" width="1.3" height="1.3" opacity="0.75"/><rect x="7.4" y="-3.2" width="0.9" height="0.9" opacity="0.88"/><rect x="-3.3" y="-0.8" width="0.8" height="0.8" opacity="0.71"/><rect x="7.2" y="5.3" width="0.9" height="0.9" opacity="0.95"/><rect x="7.8" y="-1.2" width="1.7" height="1.7" opacity="0.92"/><rect x="4.0" y="2.7" width="0.9" height="0.9" opacity="0.88"/><rect x="3.2" y="2.5" width="1.8" height="1.8" opacity="0.99"/><rect x="5.5" y="-0.4" width="1.7" height="1.7" opacity="0.84"/><rect x="0.5" y="6.2" width="2.0" height="2.0" opacity="0.79"/><rect x="-2.0" y="-4.6" width="1.7" height="1.7" opacity="0.94"/><rect x="5.2" y="-2.4" width="1.8" height="1.8" opacity="0.97"/><rect x="6.5" y="-1.3" width="0.8" height="0.8" opacity="0.81"/><rect x="5.3" y="-0.3" width="0.8" height="0.8" opacity="0.78"/><rect x="7.8" y="1.2" width="1.7" height="1.7" opacity="0.87"/><rect x="6.6" y="1.3" width="1.0" height="1.0" opacity="0.83"/><rect x="6.1" y="-0.7" width="1.8" height="1.8" opacity="0.80"/><rect x="-1.4" y="3.0" width="1.9" height="1.9" opacity="0.79"/><rect x="-6.7" y="-1.7" width="1.6" height="1.6" opacity="0.75"/><rect x="10.4" y="-2.0" width="1.3" height="1.3" opacity="0.74"/><rect x="4.5" y="2.8" width="1.7" height="1.7" opacity="0.71"/><rect x="-3.1" y="1.5" width="1.5" height="1.5" opacity="1.00"/><rect x="7.6" y="-0.7" width="1.3" height="1.3" opacity="0.85"/><rect x="4.0" y="-4.6" width="1.7" height="1.7" opacity="0.69"/><rect x="-4.6" y="5.0" width="1.7" height="1.7" opacity="0.92"/><rect x="5.5" y="3.7" width="2.0" height="2.0" opacity="0.96"/><rect x="-0.9" y="-0.4" width="1.5" height="1.5" opacity="0.91"/><rect x="7.9" y="-2.3" width="1.6" height="1.6" opacity="0.75"/><rect x="-1.9" y="-6.1" width="1.7" height="1.7" opacity="0.64"/><rect x="7.5" y="-0.9" width="1.4" height="1.4" opacity="0.86"/><rect x="-2.8" y="-6.5" width="1.4" height="1.4" opacity="0.76"/><rect x="1.3" y="1.2" width="1.2" height="1.2" opacity="0.77"/><rect x="6.5" y="0.4" width="1.0" height="1.0" opacity="0.87"/><rect x="6.1" y="-1.3" width="1.5" height="1.5" opacity="0.86"/><rect x="6.5" y="0.6" width="1.8" height="1.8" opacity="0.96"/><rect x="-2.8" y="-4.3" width="1.8" height="1.8" opacity="0.86"/><rect x="1.6" y="1.8" width="2.0" height="2.0" opacity="0.90"/><rect x="7.1" y="-1.4" width="1.5" height="1.5" opacity="0.73"/><rect x="-2.1" y="-2.9" width="1.9" height="1.9" opacity="0.68"/><rect x="7.7" y="-0.7" width="1.8" height="1.8" opacity="0.82"/><rect x="-9.9" y="1.6" width="1.6" height="1.6" opacity="0.77"/><rect x="-4.3" y="-0.5" width="1.3" height="1.3" opacity="0.96"/><rect x="1.7" y="3.9" width="1.5" height="1.5" opacity="0.76"/><rect x="-6.1" y="-3.4" width="1.4" height="1.4" opacity="0.69"/><rect x="-1.0" y="-0.4" width="0.9" height="0.9" opacity="0.71"/><rect x="-5.0" y="-2.1" width="1.3" height="1.3" opacity="0.63"/><rect x="-7.5" y="-5.1" width="1.6" height="1.6" opacity="0.66"/><rect x="-8.6" y="-3.2" width="0.9" height="0.9" opacity="0.94"/><rect x="4.5" y="0.3" width="1.9" height="1.9" opacity="0.88"/><rect x="-6.2" y="1.0" width="1.9" height="1.9" opacity="0.95"/><rect x="-2.5" y="-5.3" width="1.6" height="1.6" opacity="0.83"/><rect x="-11.7" y="-0.1" width="2.0" height="2.0" opacity="0.97"/><rect x="-3.5" y="-4.0" width="1.6" height="1.6" opacity="0.99"/><rect x="1.9" y="4.8" width="1.9" height="1.9" opacity="0.63"/></g>
<ellipse cx="253.5" cy="420" rx="4.500" ry="1.300" fill="#ccc" transform="rotate(-20 253.5 420)" filter="url(#bl)"/>
<g transform="translate(29.5,452)" fill="#fff"><rect x="-3.3" y="-6.4" width="1.1" height="1.1" opacity="0.64"/><rect x="-6.9" y="-0.9" width="1.4" height="1.4" opacity="0.68"/><rect x="6.1" y="-3.2" width="1.4" height="1.4" opacity="0.82"/><rect x="10.6" y="-0.2" width="1.9" height="1.9" opacity="0.71"/><rect x="1.3" y="1.6" width="1.6" height="1.6" opacity="0.80"/><rect x="-3.8" y="-4.6" width="1.8" height="1.8" opacity="0.72"/><rect x="0.6" y="3.5" width="1.6" height="1.6" opacity="0.76"/><rect x="4.8" y="-1.0" width="1.4" height="1.4" opacity="0.71"/><rect x="11.4" y="0.1" width="1.7" height="1.7" opacity="0.80"/><rect x="11.3" y="-1.7" width="1.9" height="1.9" opacity="0.63"/><rect x="-4.5" y="1.6" width="1.4" height="1.4" opacity="0.92"/><rect x="3.2" y="3.9" width="1.5" height="1.5" opacity="0.68"/><rect x="-4.4" y="-5.6" width="1.8" height="1.8" opacity="0.88"/><rect x="-3.9" y="-5.9" width="0.9" height="0.9" opacity="0.87"/><rect x="-0.3" y="-4.8" width="1.3" height="1.3" opacity="0.66"/><rect x="-1.6" y="-4.0" width="0.9" height="0.9" opacity="0.69"/><rect x="8.4" y="-1.3" width="1.2" height="1.2" opacity="0.67"/><rect x="6.1" y="0.7" width="0.9" height="0.9" opacity="0.94"/><rect x="-7.7" y="1.5" width="1.4" height="1.4" opacity="0.94"/><rect x="-3.0" y="-4.6" width="0.9" height="0.9" opacity="0.66"/><rect x="10.8" y="2.4" width="1.8" height="1.8" opacity="0.65"/><rect x="-5.7" y="-1.1" width="0.9" height="0.9" opacity="0.99"/><rect x="-3.0" y="-1.8" width="1.6" height="1.6" opacity="0.98"/><rect x="-5.1" y="-2.6" width="0.9" height="0.9" opacity="0.73"/><rect x="-4.7" y="-4.5" width="1.8" height="1.8" opacity="0.75"/><rect x="6.9" y="2.0" width="1.4" height="1.4" opacity="0.98"/><rect x="-2.4" y="0.9" width="2.0" height="2.0" opacity="0.88"/><rect x="-2.1" y="3.7" width="1.1" height="1.1" opacity="0.90"/><rect x="-10.4" y="1.8" width="1.1" height="1.1" opacity="0.62"/><rect x="9.7" y="2.8" width="1.5" height="1.5" opacity="0.71"/><rect x="-2.9" y="-5.5" width="1.2" height="1.2" opacity="0.71"/><rect x="-3.8" y="-4.6" width="1.6" height="1.6" opacity="0.89"/><rect x="10.5" y="-2.6" width="1.3" height="1.3" opacity="0.67"/><rect x="-2.5" y="-4.8" width="1.5" height="1.5" opacity="0.64"/><rect x="-3.8" y="-4.5" width="1.7" height="1.7" opacity="0.95"/><rect x="-4.9" y="-2.6" width="1.5" height="1.5" opacity="0.94"/><rect x="-7.2" y="0.3" width="1.6" height="1.6" opacity="0.87"/><rect x="5.9" y="-3.9" width="1.0" height="1.0" opacity="0.97"/><rect x="10.1" y="4.8" width="1.6" height="1.6" opacity="0.64"/><rect x="0.1" y="-1.7" width="1.9" height="1.9" opacity="0.85"/><rect x="-0.9" y="4.2" width="1.9" height="1.9" opacity="0.72"/><rect x="-3.3" y="-6.3" width="1.9" height="1.9" opacity="0.95"/><rect x="5.1" y="-1.8" width="1.9" height="1.9" opacity="0.61"/><rect x="4.7" y="5.4" width="1.2" height="1.2" opacity="0.75"/><rect x="-5.3" y="-3.9" width="0.9" height="0.9" opacity="0.80"/><rect x="-0.3" y="-4.3" width="1.5" height="1.5" opacity="0.63"/><rect x="-2.3" y="-4.9" width="1.6" height="1.6" opacity="0.68"/><rect x="-3.7" y="-4.9" width="1.0" height="1.0" opacity="0.98"/><rect x="5.6" y="-4.5" width="1.8" height="1.8" opacity="0.79"/><rect x="-4.5" y="-5.2" width="1.6" height="1.6" opacity="0.80"/><rect x="1.3" y="2.6" width="1.0" height="1.0" opacity="0.78"/><rect x="-5.8" y="-1.8" width="1.2" height="1.2" opacity="0.62"/><rect x="3.1" y="3.7" width="1.6" height="1.6" opacity="0.86"/><rect x="-0.6" y="-3.7" width="1.3" height="1.3" opacity="0.90"/><rect x="-10.8" y="0.5" width="1.5" height="1.5" opacity="0.70"/><rect x="0.4" y="3.8" width="1.5" height="1.5" opacity="0.81"/><rect x="7.8" y="3.8" width="1.5" height="1.5" opacity="0.91"/><rect x="7.6" y="0.6" width="0.9" height="0.9" opacity="0.63"/><rect x="-4.1" y="-4.5" width="1.7" height="1.7" opacity="0.66"/><rect x="3.5" y="3.4" width="1.7" height="1.7" opacity="0.80"/><rect x="-4.0" y="-3.6" width="1.8" height="1.8" opacity="0.84"/><rect x="7.6" y="-1.7" width="1.9" height="1.9" opacity="0.62"/><rect x="-5.9" y="-5.2" width="1.0" height="1.0" opacity="0.80"/><rect x="7.0" y="2.3" width="1.2" height="1.2" opacity="0.90"/><rect x="-3.3" y="-4.6" width="1.9" height="1.9" opacity="0.92"/><rect x="6.3" y="2.8" width="1.5" height="1.5" opacity="1.00"/><rect x="-8.2" y="-2.5" width="0.9" height="0.9" opacity="0.97"/><rect x="-4.2" y="-5.1" width="1.3" height="1.3" opacity="0.83"/><rect x="0.8" y="4.4" width="1.7" height="1.7" opacity="0.88"/><rect x="-5.5" y="2.1" width="0.9" height="0.9" opacity="0.89"/><rect x="0.1" y="-2.6" width="1.9" height="1.9" opacity="0.73"/><rect x="-6.5" y="-6.3" width="1.9" height="1.9" opacity="0.91"/><rect x="4.8" y="3.0" width="1.1" height="1.1" opacity="0.96"/><rect x="1.3" y="-1.9" width="1.4" height="1.4" opacity="0.66"/><rect x="-0.7" y="-0.7" width="1.8" height="1.8" opacity="0.94"/><rect x="-1.5" y="5.6" width="1.5" height="1.5" opacity="0.87"/><rect x="-11.9" y="-3.4" width="1.7" height="1.7" opacity="0.82"/><rect x="7.7" y="3.2" width="1.3" height="1.3" opacity="0.87"/><rect x="-2.5" y="-5.3" width="1.5" height="1.5" opacity="0.68"/><rect x="10.1" y="0.7" width="1.1" height="1.1" opacity="0.73"/><rect x="-8.7" y="-0.4" width="1.1" height="1.1" opacity="0.84"/><rect x="-8.1" y="-4.8" width="1.3" height="1.3" opacity="0.76"/><rect x="7.4" y="-0.8" width="1.8" height="1.8" opacity="0.83"/><rect x="-7.1" y="-2.9" width="1.0" height="1.0" opacity="0.63"/><rect x="-5.9" y="-3.8" width="1.3" height="1.3" opacity="0.84"/><rect x="-4.1" y="-2.4" width="1.1" height="1.1" opacity="0.96"/><rect x="-3.1" y="-4.0" width="1.3" height="1.3" opacity="0.88"/><rect x="3.1" y="-0.9" width="1.7" height="1.7" opacity="0.90"/><rect x="4.9" y="-1.6" width="0.9" height="0.9" opacity="0.74"/><rect x="-3.3" y="1.0" width="1.4" height="1.4" opacity="0.61"/><rect x="-3.9" y="-1.2" width="0.9" height="0.9" opacity="0.96"/><rect x="-3.8" y="-7.5" width="1.0" height="1.0" opacity="0.92"/><rect x="1.6" y="-2.3" width="0.9" height="0.9" opacity="0.68"/><rect x="-8.0" y="-1.4" width="1.4" height="1.4" opacity="0.83"/><rect x="5.0" y="-2.4" width="1.0" height="1.0" opacity="0.74"/><rect x="7.7" y="-3.2" width="1.4" height="1.4" opacity="0.78"/><rect x="-3.9" y="-5.7" width="1.6" height="1.6" opacity="0.72"/><rect x="-5.3" y="0.3" width="1.3" height="1.3" opacity="0.79"/><rect x="1.2" y="4.3" width="1.8" height="1.8" opacity="0.70"/><rect x="6.5" y="-0.4" width="1.8" height="1.8" opacity="0.98"/><rect x="-6.0" y="-5.7" width="1.9" height="1.9" opacity="0.92"/><rect x="-9.6" y="-0.1" width="1.2" height="1.2" opacity="0.83"/><rect x="6.8" y="5.0" width="1.0" height="1.0" opacity="0.83"/><rect x="0.1" y="0.6" width="1.8" height="1.8" opacity="0.78"/><rect x="0.3" y="2.2" width="0.9" height="0.9" opacity="0.99"/><rect x="-5.7" y="-4.1" width="0.8" height="0.8" opacity="0.90"/><rect x="8.2" y="2.7" width="1.5" height="1.5" opacity="0.70"/><rect x="7.7" y="1.9" width="1.7" height="1.7" opacity="0.64"/><rect x="7.6" y="1.9" width="1.8" height="1.8" opacity="0.77"/><rect x="1.9" y="3.3" width="1.8" height="1.8" opacity="0.65"/><rect x="9.2" y="0.0" width="1.8" height="1.8" opacity="0.70"/><rect x="-8.7" y="2.2" width="1.3" height="1.3" opacity="0.75"/><rect x="4.5" y="-2.5" width="2.0" height="2.0" opacity="0.73"/><rect x="-1.0" y="4.0" width="1.7" height="1.7" opacity="0.87"/><rect x="8.8" y="0.7" width="1.1" height="1.1" opacity="0.97"/><rect x="3.2" y="0.9" width="1.3" height="1.3" opacity="0.68"/><rect x="-2.5" y="-5.0" width="1.8" height="1.8" opacity="0.83"/><rect x="-6.4" y="0.6" width="1.6" height="1.6" opacity="0.86"/><rect x="-7.4" y="-1.6" width="1.4" height="1.4" opacity="0.73"/><rect x="-6.6" y="-2.7" width="1.8" height="1.8" opacity="0.88"/><rect x="1.8" y="4.2" width="1.3" height="1.3" opacity="0.87"/><rect x="-7.6" y="-0.0" width="1.9" height="1.9" opacity="0.93"/><rect x="-8.4" y="-1.4" width="1.0" height="1.0" opacity="0.79"/><rect x="1.2" y="2.3" width="1.2" height="1.2" opacity="0.87"/><rect x="1.0" y="4.4" width="0.8" height="0.8" opacity="0.93"/><rect x="0.6" y="3.1" width="1.9" height="1.9" opacity="0.89"/><rect x="2.6" y="3.7" width="1.2" height="1.2" opacity="0.79"/><rect x="-10.3" y="-0.3" width="1.2" height="1.2" opacity="0.70"/><rect x="3.7" y="4.7" width="0.9" height="0.9" opacity="0.72"/><rect x="2.0" y="-3.9" width="1.1" height="1.1" opacity="1.00"/></g>
<g transform="translate(61.5,452)" fill="#fff"><rect x="5.4" y="-1.3" width="0.8" height="0.8" opacity="0.83"/><rect x="2.2" y="-0.0" width="1.3" height="1.3" opacity="0.93"/><rect x="1.2" y="4.6" width="1.7" height="1.7" opacity="0.84"/><rect x="-1.2" y="-5.5" width="0.8" height="0.8" opacity="0.76"/><rect x="5.6" y="3.7" width="1.6" height="1.6" opacity="0.81"/><rect x="-1.7" y="4.4" width="1.0" height="1.0" opacity="0.95"/><rect x="-7.0" y="-3.5" width="0.9" height="0.9" opacity="0.99"/><rect x="-3.1" y="1.3" width="1.7" height="1.7" opacity="0.75"/><rect x="-3.8" y="-4.9" width="1.9" height="1.9" opacity="0.78"/><rect x="6.9" y="4.3" width="1.7" height="1.7" opacity="0.74"/><rect x="2.1" y="0.8" width="1.5" height="1.5" opacity="0.70"/><rect x="6.4" y="4.0" width="1.6" height="1.6" opacity="0.90"/><rect x="-2.5" y="-2.5" width="1.5" height="1.5" opacity="0.63"/><rect x="-8.4" y="1.0" width="1.8" height="1.8" opacity="0.86"/><rect x="0.1" y="5.9" width="1.3" height="1.3" opacity="0.90"/><rect x="1.1" y="4.9" width="2.0" height="2.0" opacity="0.62"/><rect x="-1.9" y="1.9" width="1.0" height="1.0" opacity="0.80"/><rect x="5.3" y="-2.6" width="1.1" height="1.1" opacity="0.77"/><rect x="2.0" y="2.0" width="1.6" height="1.6" opacity="0.72"/><rect x="-5.9" y="1.9" width="2.0" height="2.0" opacity="0.73"/><rect x="-3.0" y="1.6" width="0.8" height="0.8" opacity="0.78"/><rect x="0.7" y="2.3" width="1.1" height="1.1" opacity="0.96"/><rect x="-0.4" y="4.3" width="1.3" height="1.3" opacity="0.90"/><rect x="1.7" y="-0.2" width="1.4" height="1.4" opacity="0.98"/><rect x="-4.6" y="-4.0" width="1.0" height="1.0" opacity="0.80"/><rect x="-2.9" y="5.1" width="1.2" height="1.2" opacity="0.78"/><rect x="-4.1" y="-0.7" width="1.6" height="1.6" opacity="0.73"/><rect x="-7.3" y="3.3" width="1.5" height="1.5" opacity="0.89"/><rect x="-2.7" y="2.6" width="1.0" height="1.0" opacity="0.73"/><rect x="3.8" y="2.3" width="1.7" height="1.7" opacity="0.81"/><rect x="4.1" y="2.4" width="1.5" height="1.5" opacity="0.83"/><rect x="2.9" y="4.8" width="1.4" height="1.4" opacity="0.99"/><rect x="-1.7" y="1.0" width="1.3" height="1.3" opacity="0.91"/><rect x="2.3" y="0.3" width="0.8" height="0.8" opacity="0.75"/><rect x="-4.1" y="0.3" width="1.5" height="1.5" opacity="0.77"/><rect x="-1.0" y="2.5" width="1.7" height="1.7" opacity="0.87"/><rect x="1.2" y="-1.5" width="1.6" height="1.6" opacity="0.95"/><rect x="-6.9" y="0.5" width="0.8" height="0.8" opacity="0.94"/><rect x="-1.1" y="3.2" width="1.8" height="1.8" opacity="0.67"/><rect x="0.2" y="4.5" width="1.1" height="1.1" opacity="0.85"/><rect x="5.4" y="2.9" width="1.7" height="1.7" opacity="0.88"/><rect x="3.9" y="2.2" width="1.6" height="1.6" opacity="0.69"/><rect x="7.0" y="4.1" width="1.5" height="1.5" opacity="0.97"/><rect x="4.7" y="5.2" width="1.5" height="1.5" opacity="0.75"/><rect x="-0.4" y="3.0" width="2.0" height="2.0" opacity="0.96"/><rect x="5.1" y="2.9" width="1.4" height="1.4" opacity="0.80"/><rect x="0.1" y="5.7" width="1.0" height="1.0" opacity="0.69"/><rect x="-4.6" y="-2.4" width="2.0" height="2.0" opacity="0.76"/><rect x="2.6" y="2.2" width="0.8" height="0.8" opacity="0.95"/><rect x="-3.5" y="-1.9" width="1.3" height="1.3" opacity="0.76"/><rect x="3.3" y="1.6" width="1.9" height="1.9" opacity="0.93"/><rect x="5.2" y="1.3" width="0.9" height="0.9" opacity="0.65"/><rect x="-1.1" y="3.8" width="0.8" height="0.8" opacity="0.81"/><rect x="3.0" y="2.5" width="1.7" height="1.7" opacity="0.67"/><rect x="1.3" y="-2.1" width="1.3" height="1.3" opacity="0.68"/><rect x="-0.7" y="2.0" width="0.8" height="0.8" opacity="0.62"/><rect x="-4.9" y="2.4" width="1.3" height="1.3" opacity="0.86"/><rect x="-2.0" y="-3.8" width="1.1" height="1.1" opacity="0.66"/><rect x="-0.8" y="4.2" width="1.0" height="1.0" opacity="0.89"/><rect x="0.8" y="2.6" width="1.3" height="1.3" opacity="0.64"/><rect x="-4.9" y="1.2" width="1.1" height="1.1" opacity="0.62"/><rect x="2.5" y="-0.9" width="1.7" height="1.7" opacity="0.71"/><rect x="1.8" y="4.2" width="1.5" height="1.5" opacity="0.68"/><rect x="-3.5" y="0.9" width="0.9" height="0.9" opacity="0.79"/><rect x="-4.9" y="2.4" width="1.5" height="1.5" opacity="0.72"/><rect x="0.2" y="-1.5" width="1.3" height="1.3" opacity="0.78"/><rect x="5.6" y="1.1" width="1.5" height="1.5" opacity="0.69"/><rect x="4.5" y="1.8" width="1.6" height="1.6" opacity="0.64"/><rect x="-0.6" y="-3.2" width="1.8" height="1.8" opacity="0.89"/><rect x="1.7" y="0.5" width="1.9" height="1.9" opacity="0.84"/><rect x="7.0" y="4.7" width="1.9" height="1.9" opacity="0.84"/><rect x="-6.0" y="1.5" width="1.0" height="1.0" opacity="0.79"/><rect x="5.9" y="0.5" width="1.9" height="1.9" opacity="0.75"/><rect x="-6.2" y="-4.1" width="1.3" height="1.3" opacity="0.92"/><rect x="2.4" y="4.4" width="1.0" height="1.0" opacity="0.94"/><rect x="-0.6" y="5.2" width="1.4" height="1.4" opacity="1.00"/><rect x="5.1" y="2.4" width="1.5" height="1.5" opacity="0.87"/><rect x="1.1" y="6.4" width="1.7" height="1.7" opacity="0.74"/><rect x="-5.6" y="0.4" width="1.9" height="1.9" opacity="0.74"/><rect x="-0.7" y="2.2" width="1.1" height="1.1" opacity="0.96"/><rect x="-4.5" y="2.1" width="1.3" height="1.3" opacity="0.96"/><rect x="-3.8" y="-2.2" width="1.5" height="1.5" opacity="0.73"/><rect x="2.3" y="4.8" width="0.9" height="0.9" opacity="0.73"/><rect x="-3.4" y="1.5" width="1.1" height="1.1" opacity="0.77"/><rect x="-5.3" y="1.7" width="0.9" height="0.9" opacity="0.96"/><rect x="0.2" y="-4.6" width="1.3" height="1.3" opacity="0.81"/><rect x="-7.0" y="5.0" width="1.9" height="1.9" opacity="0.71"/><rect x="0.9" y="3.5" width="1.3" height="1.3" opacity="0.91"/><rect x="-2.6" y="8.0" width="1.2" height="1.2" opacity="0.71"/><rect x="-4.6" y="5.0" width="1.1" height="1.1" opacity="0.96"/><rect x="-4.9" y="-3.7" width="0.8" height="0.8" opacity="0.65"/><rect x="9.0" y="0.7" width="1.1" height="1.1" opacity="0.97"/><rect x="1.0" y="1.6" width="1.2" height="1.2" opacity="0.90"/><rect x="-4.2" y="2.7" width="1.0" height="1.0" opacity="0.71"/><rect x="4.4" y="-0.6" width="1.9" height="1.9" opacity="0.96"/><rect x="-7.5" y="1.3" width="1.5" height="1.5" opacity="0.95"/><rect x="0.3" y="-0.2" width="1.4" height="1.4" opacity="0.85"/><rect x="-1.7" y="4.3" width="1.3" height="1.3" opacity="0.67"/><rect x="3.1" y="-5.2" width="1.2" height="1.2" opacity="0.82"/><rect x="4.0" y="1.2" width="1.6" height="1.6" opacity="0.73"/><rect x="1.1" y="6.8" width="1.2" height="1.2" opacity="0.99"/><rect x="-2.8" y="-4.4" width="1.9" height="1.9" opacity="0.71"/><rect x="-2.9" y="1.7" width="2.0" height="2.0" opacity="0.83"/><rect x="-3.4" y="0.8" width="1.2" height="1.2" opacity="0.77"/><rect x="-3.2" y="2.1" width="1.2" height="1.2" opacity="0.69"/><rect x="-2.4" y="-2.8" width="1.2" height="1.2" opacity="0.71"/><rect x="-4.8" y="-1.5" width="2.0" height="2.0" opacity="0.81"/><rect x="-0.2" y="3.9" width="1.4" height="1.4" opacity="0.86"/><rect x="-0.5" y="3.6" width="1.6" height="1.6" opacity="0.65"/><rect x="-3.2" y="-2.4" width="1.3" height="1.3" opacity="0.83"/></g>
<circle cx="93.5" cy="453.0" r="8.5" fill="url(#hard)"/>
<g transform="translate(125.5,453) rotate(0)" fill="#fff"><rect x="5.6" y="4.9" width="0.7" height="0.7" opacity="0.55"/><rect x="-6.9" y="3.2" width="0.8" height="0.8" opacity="0.35"/><rect x="-4.2" y="-1.3" width="0.8" height="0.8" opacity="0.45"/><rect x="0.3" y="1.5" width="0.9" height="0.9" opacity="0.35"/><rect x="-0.1" y="8.2" width="0.5" height="0.5" opacity="0.46"/><rect x="-6.4" y="2.9" width="0.8" height="0.8" opacity="0.69"/><rect x="-1.0" y="2.2" width="0.6" height="0.6" opacity="0.30"/><rect x="-0.8" y="6.6" width="0.9" height="0.9" opacity="0.34"/><rect x="-0.9" y="8.0" width="0.7" height="0.7" opacity="0.46"/><rect x="1.8" y="0.9" width="0.6" height="0.6" opacity="0.55"/><rect x="5.6" y="2.1" width="0.8" height="0.8" opacity="0.30"/><rect x="-1.3" y="5.3" width="0.7" height="0.7" opacity="0.59"/><rect x="-2.4" y="-5.0" width="0.6" height="0.6" opacity="0.55"/><rect x="-7.9" y="2.1" width="0.7" height="0.7" opacity="0.53"/><rect x="-3.0" y="-5.1" width="0.7" height="0.7" opacity="0.57"/><rect x="-6.9" y="-5.0" width="0.6" height="0.6" opacity="0.50"/><rect x="7.6" y="-1.2" width="0.7" height="0.7" opacity="0.42"/><rect x="2.4" y="4.9" width="0.7" height="0.7" opacity="0.47"/><rect x="-0.2" y="5.9" width="0.7" height="0.7" opacity="0.34"/><rect x="-3.9" y="-6.0" width="0.6" height="0.6" opacity="0.40"/><rect x="5.7" y="1.4" width="0.8" height="0.8" opacity="0.46"/><rect x="-5.6" y="-3.5" width="0.5" height="0.5" opacity="0.32"/><rect x="-8.2" y="-0.4" width="0.8" height="0.8" opacity="0.48"/><rect x="-0.2" y="3.1" width="0.8" height="0.8" opacity="0.61"/><rect x="-1.9" y="1.5" width="0.6" height="0.6" opacity="0.58"/><rect x="0.7" y="-5.3" width="0.9" height="0.9" opacity="0.46"/><rect x="3.8" y="0.6" width="0.9" height="0.9" opacity="0.58"/><rect x="3.9" y="2.4" width="0.7" height="0.7" opacity="0.49"/><rect x="8.1" y="1.3" width="0.7" height="0.7" opacity="0.41"/><rect x="6.3" y="1.3" width="0.9" height="0.9" opacity="0.59"/><rect x="5.0" y="-6.2" width="0.8" height="0.8" opacity="0.32"/><rect x="-2.4" y="6.0" width="0.7" height="0.7" opacity="0.39"/><rect x="7.2" y="3.3" width="0.8" height="0.8" opacity="0.42"/><rect x="-7.8" y="1.5" width="0.6" height="0.6" opacity="0.55"/><rect x="0.9" y="8.0" width="0.8" height="0.8" opacity="0.68"/><rect x="-4.5" y="4.1" width="0.6" height="0.6" opacity="0.44"/><rect x="8.0" y="-2.4" width="0.9" height="0.9" opacity="0.66"/><rect x="-6.9" y="0.5" width="0.9" height="0.9" opacity="0.47"/><rect x="6.6" y="-3.7" width="0.6" height="0.6" opacity="0.44"/><rect x="-1.3" y="-3.2" width="0.6" height="0.6" opacity="0.38"/><rect x="6.3" y="5.0" width="0.9" height="0.9" opacity="0.63"/><rect x="-7.3" y="-0.2" width="0.8" height="0.8" opacity="0.48"/><rect x="-3.0" y="-0.4" width="0.6" height="0.6" opacity="0.44"/><rect x="-4.3" y="5.4" width="0.6" height="0.6" opacity="0.40"/><rect x="5.3" y="-5.3" width="0.9" height="0.9" opacity="0.61"/><rect x="2.0" y="5.6" width="0.8" height="0.8" opacity="0.62"/><rect x="0.8" y="5.8" width="0.7" height="0.7" opacity="0.30"/><rect x="0.3" y="7.3" width="0.8" height="0.8" opacity="0.48"/><rect x="-5.6" y="-2.7" width="0.6" height="0.6" opacity="0.33"/><rect x="-0.4" y="-7.5" width="0.7" height="0.7" opacity="0.61"/><rect x="3.3" y="-6.2" width="0.8" height="0.8" opacity="0.69"/><rect x="8.0" y="2.0" width="0.7" height="0.7" opacity="0.61"/><rect x="-0.2" y="-2.7" width="0.7" height="0.7" opacity="0.34"/><rect x="-0.6" y="-4.9" width="0.7" height="0.7" opacity="0.41"/><rect x="2.5" y="-6.3" width="0.6" height="0.6" opacity="0.60"/><rect x="3.0" y="7.0" width="0.7" height="0.7" opacity="0.61"/><rect x="-6.3" y="-5.6" width="0.8" height="0.8" opacity="0.49"/><rect x="-5.4" y="-3.4" width="0.6" height="0.6" opacity="0.42"/><rect x="2.3" y="-7.3" width="0.9" height="0.9" opacity="0.57"/><rect x="-5.3" y="-0.2" width="0.8" height="0.8" opacity="0.56"/><rect x="6.9" y="-2.6" width="0.7" height="0.7" opacity="0.41"/><rect x="7.2" y="2.1" width="0.7" height="0.7" opacity="0.46"/><rect x="5.7" y="1.9" width="0.9" height="0.9" opacity="0.41"/><rect x="-0.3" y="-7.4" width="0.8" height="0.8" opacity="0.54"/><rect x="0.0" y="7.0" width="0.7" height="0.7" opacity="0.69"/><rect x="-5.0" y="-0.5" width="0.9" height="0.9" opacity="0.55"/><rect x="-3.7" y="5.8" width="0.6" height="0.6" opacity="0.38"/><rect x="4.3" y="-3.8" width="0.8" height="0.8" opacity="0.39"/><rect x="-4.1" y="0.8" width="0.8" height="0.8" opacity="0.54"/><rect x="-4.1" y="3.3" width="0.6" height="0.6" opacity="0.38"/><rect x="-1.7" y="-4.4" width="0.5" height="0.5" opacity="0.45"/><rect x="-8.1" y="2.5" width="0.7" height="0.7" opacity="0.46"/><rect x="7.1" y="-1.3" width="0.7" height="0.7" opacity="0.46"/><rect x="0.5" y="3.3" width="0.7" height="0.7" opacity="0.56"/><rect x="4.6" y="3.6" width="0.6" height="0.6" opacity="0.54"/><rect x="-3.9" y="5.7" width="0.8" height="0.8" opacity="0.46"/><rect x="-1.8" y="1.6" width="0.6" height="0.6" opacity="0.55"/><rect x="1.1" y="-3.0" width="0.9" height="0.9" opacity="0.67"/><rect x="-4.1" y="4.7" width="0.8" height="0.8" opacity="0.43"/><rect x="-4.8" y="5.4" width="0.7" height="0.7" opacity="0.47"/><rect x="-2.7" y="-1.1" width="0.7" height="0.7" opacity="0.42"/><rect x="3.1" y="5.3" width="0.8" height="0.8" opacity="0.51"/><rect x="-7.0" y="0.0" width="0.7" height="0.7" opacity="0.69"/><rect x="0.2" y="0.8" width="0.7" height="0.7" opacity="0.58"/><rect x="-4.0" y="3.6" width="0.6" height="0.6" opacity="0.40"/><rect x="2.0" y="-7.6" width="0.6" height="0.6" opacity="0.53"/><rect x="-3.0" y="0.8" width="0.8" height="0.8" opacity="0.51"/><rect x="8.1" y="-0.5" width="0.9" height="0.9" opacity="0.40"/><rect x="5.9" y="4.9" width="0.5" height="0.5" opacity="0.57"/><rect x="3.2" y="6.4" width="0.5" height="0.5" opacity="0.34"/><rect x="4.1" y="-4.5" width="0.7" height="0.7" opacity="0.69"/><rect x="0.9" y="-3.9" width="0.8" height="0.8" opacity="0.45"/><rect x="-4.6" y="1.1" width="0.6" height="0.6" opacity="0.42"/><rect x="-0.5" y="3.7" width="0.8" height="0.8" opacity="0.45"/><rect x="-7.1" y="-2.8" width="0.8" height="0.8" opacity="0.36"/><rect x="7.8" y="-2.4" width="0.8" height="0.8" opacity="0.43"/><rect x="3.3" y="-6.0" width="0.5" height="0.5" opacity="0.45"/><rect x="-2.0" y="-5.9" width="0.9" height="0.9" opacity="0.62"/><rect x="4.3" y="-7.2" width="0.6" height="0.6" opacity="0.66"/><rect x="7.6" y="0.1" width="0.5" height="0.5" opacity="0.50"/><rect x="-2.1" y="0.8" width="0.8" height="0.8" opacity="0.62"/><rect x="0.7" y="4.2" width="0.8" height="0.8" opacity="0.51"/><rect x="4.7" y="0.5" width="0.9" height="0.9" opacity="0.41"/><rect x="-1.4" y="5.5" width="0.9" height="0.9" opacity="0.62"/><rect x="-5.2" y="4.6" width="0.5" height="0.5" opacity="0.33"/><rect x="-4.7" y="4.9" width="0.6" height="0.6" opacity="0.32"/><rect x="2.2" y="-2.9" width="0.5" height="0.5" opacity="0.33"/><rect x="4.0" y="2.2" width="0.7" height="0.7" opacity="0.56"/><rect x="-1.4" y="5.9" width="0.6" height="0.6" opacity="0.53"/><rect x="5.2" y="4.3" width="0.5" height="0.5" opacity="0.67"/><rect x="1.6" y="6.1" width="0.6" height="0.6" opacity="0.48"/><rect x="-0.6" y="6.8" width="0.8" height="0.8" opacity="0.64"/><rect x="5.7" y="-0.9" width="0.7" height="0.7" opacity="0.44"/><rect x="-1.4" y="5.9" width="0.9" height="0.9" opacity="0.32"/><rect x="-0.1" y="-4.8" width="0.7" height="0.7" opacity="0.41"/><rect x="-1.2" y="-5.9" width="0.6" height="0.6" opacity="0.48"/><rect x="2.7" y="0.1" width="0.9" height="0.9" opacity="0.33"/><rect x="-5.6" y="4.2" width="0.5" height="0.5" opacity="0.67"/><rect x="2.2" y="8.0" width="0.7" height="0.7" opacity="0.53"/><rect x="-2.0" y="-1.5" width="0.7" height="0.7" opacity="0.60"/></g>
<g transform="translate(157.5,453)" fill="none" stroke="#bbb" stroke-width="0.8"><circle cy="1.500" r="5.500"/><circle cx="-2" cy="-5.500" r="2.200"/><path d="M-3.500,1 q1.500,-2 3,0 M0.500,1 q1.500,-2 3,0 M-3,4 q3,2 6,0" stroke-width="0.6"/></g>
<g transform="translate(189.5,452.5)"><circle r="6.800" fill="#454545" stroke="#bbb" stroke-width="0.9"/></g>
<g transform="translate(221.5,452.5)"><circle r="6.800" fill="#454545" stroke="#bbb" stroke-width="0.9"/></g>
<g transform="translate(253.5,453)"><circle r="7" fill="url(#glow)" opacity="0.5"/><circle r="4.500" fill="none" stroke="#ccc" stroke-width="0.9"/><path d="M0,-3 L2.600,1.500 L-2.600,1.500 Z" fill="none" stroke="#ccc" stroke-width="0.7"/></g>
<rect x="141.5" y="154.5" width="32" height="32" fill="none" stroke="#5a7fc8" stroke-width="1"/>
<defs><linearGradient id="sb" x1="0" y1="0" x2="1" y2="0"><stop offset="0" stop-color="#3e3e3e"/><stop offset="0.5" stop-color="#343434"/><stop offset="1" stop-color="#3a3a3a"/></linearGradient><linearGradient id="th" x1="0" y1="0" x2="1" y2="0"><stop offset="0" stop-color="#8e8e8e"/><stop offset="1" stop-color="#6c6c6c"/></linearGradient><filter id="bl"><feGaussianBlur stdDeviation="0.6"/></filter><filter id="bl2" x="-30%" y="-30%" width="160%" height="160%"><feGaussianBlur stdDeviation="0.9"/></filter></defs>
<rect x="283" y="153" width="17" height="314" fill="url(#sb)"/>
<rect x="285" y="173" width="12" height="55" rx="3" fill="url(#th)"/>
<path d="M288,164 h6 l-3,-3.500 Z" fill="#eee"/><path d="M288,458 h6 l-3,3.500 Z" fill="#eee"/>
</g>
<rect x="0" y="480" width="25" height="9" fill="#4a4a4a"/><path d="M3,483 h6 l-3,-2.500 Z" fill="#eee"/><path d="M16,486 h3.500 v-3.500 Z" fill="#999"/>
</svg>
<span class="t " style="left:66.8px;top:15px;font-size:10.5px;color:#f0f0f0;">6</span>
<span class="t " style="left:141.5px;top:11px;font-size:10px;color:#e6e6e6;letter-spacing:0.25px;">Mode:</span>
<span class="t " style="left:185px;top:11px;font-size:10px;color:#e6e6e6;letter-spacing:-0.3px;">Normal</span>
<span class="t " style="left:318px;top:11px;font-size:10px;color:#e6e6e6;letter-spacing:0.0px;">Opacity:</span>
<span class="t " style="left:366px;top:11px;font-size:10px;color:#f0f0f0;letter-spacing:-0.25px;">100%</span>
<span class="t " style="left:463px;top:11px;font-size:10px;color:#e6e6e6;letter-spacing:-0.1px;">Flow:</span>
<span class="t " style="left:496px;top:11px;font-size:10px;color:#f0f0f0;letter-spacing:-0.25px;">100%</span>
<span class="t " style="left:98px;top:50px;font-size:10px;color:#e6e6e6;letter-spacing:-0.15px;">Size:</span>
<span class="t " style="left:98px;top:100px;font-size:10px;color:#e6e6e6;letter-spacing:0.12px;">Hardness:</span>
<span class="t " style="left:161.5px;top:51px;font-size:10px;color:#f0f0f0;letter-spacing:0.2px;">6 px</span>
<span class="t " style="left:161.5px;top:101px;font-size:10px;color:#f0f0f0;letter-spacing:0.8px;">0%</span>
<div id="glab"><span class="t g" style="left:172px;top:86px;font-size:10px;color:#f6f6f6;letter-spacing:-0.5px;-webkit-text-stroke-width:0.15px;">25</span>
<span class="t g" style="left:204px;top:86px;font-size:10px;color:#f6f6f6;letter-spacing:-0.5px;-webkit-text-stroke-width:0.15px;">50</span>
<span class="t g" style="left:12px;top:118px;font-size:10px;color:#f6f6f6;letter-spacing:-0.5px;-webkit-text-stroke-width:0.15px;">25</span>
<span class="t g" style="left:44px;top:118px;font-size:10px;color:#f6f6f6;letter-spacing:-0.5px;-webkit-text-stroke-width:0.15px;">50</span>
<span class="t g" style="left:204px;top:118px;font-size:10px;color:#f6f6f6;letter-spacing:-0.5px;-webkit-text-stroke-width:0.15px;">36</span>
<span class="t g" style="left:236px;top:118px;font-size:10px;color:#f6f6f6;letter-spacing:-0.5px;-webkit-text-stroke-width:0.15px;">30</span>
<span class="t g" style="left:12px;top:150px;font-size:10px;color:#f6f6f6;letter-spacing:-0.5px;-webkit-text-stroke-width:0.15px;">30</span>
<span class="t g" style="left:79px;top:150px;font-size:10px;color:#f6f6f6;letter-spacing:-0.5px;-webkit-text-stroke-width:0.15px;">9</span>
<span class="t g" style="left:175px;top:150px;font-size:10px;color:#f6f6f6;letter-spacing:-0.5px;-webkit-text-stroke-width:0.15px;">9</span>
<span class="t g" style="left:236px;top:150px;font-size:10px;color:#f6f6f6;letter-spacing:-0.5px;-webkit-text-stroke-width:0.15px;">45</span>
<span class="t g" style="left:12px;top:182px;font-size:10px;color:#f6f6f6;letter-spacing:-0.5px;-webkit-text-stroke-width:0.15px;">14</span>
<span class="t g" style="left:44px;top:182px;font-size:10px;color:#f6f6f6;letter-spacing:-0.5px;-webkit-text-stroke-width:0.15px;">24</span>
<span class="t g" style="left:76px;top:182px;font-size:10px;color:#f6f6f6;letter-spacing:-0.5px;-webkit-text-stroke-width:0.15px;">27</span>
<span class="t g" style="left:108px;top:182px;font-size:10px;color:#f6f6f6;letter-spacing:-0.5px;-webkit-text-stroke-width:0.15px;">39</span>
<span class="t g" style="left:140px;top:182px;font-size:10px;color:#f6f6f6;letter-spacing:-0.5px;-webkit-text-stroke-width:0.15px;">46</span>
<span class="t g" style="left:172px;top:182px;font-size:10px;color:#f6f6f6;letter-spacing:-0.5px;-webkit-text-stroke-width:0.15px;">59</span>
<span class="t g" style="left:204px;top:182px;font-size:10px;color:#f6f6f6;letter-spacing:-0.5px;-webkit-text-stroke-width:0.15px;">11</span>
<span class="t g" style="left:236px;top:182px;font-size:10px;color:#f6f6f6;letter-spacing:-0.5px;-webkit-text-stroke-width:0.15px;">17</span>
<span class="t g" style="left:12px;top:214px;font-size:10px;color:#f6f6f6;letter-spacing:-0.5px;-webkit-text-stroke-width:0.15px;">23</span>
<span class="t g" style="left:44px;top:214px;font-size:10px;color:#f6f6f6;letter-spacing:-0.5px;-webkit-text-stroke-width:0.15px;">36</span>
<span class="t g" style="left:76px;top:214px;font-size:10px;color:#f6f6f6;letter-spacing:-0.5px;-webkit-text-stroke-width:0.15px;">44</span>
<span class="t g" style="left:108px;top:214px;font-size:10px;color:#f6f6f6;letter-spacing:-0.5px;-webkit-text-stroke-width:0.15px;">60</span>
<span class="t g" style="left:140px;top:214px;font-size:10px;color:#f6f6f6;letter-spacing:-0.5px;-webkit-text-stroke-width:0.15px;">14</span>
<span class="t g" style="left:172px;top:214px;font-size:10px;color:#f6f6f6;letter-spacing:-0.5px;-webkit-text-stroke-width:0.15px;">26</span>
<span class="t g" style="left:204px;top:214px;font-size:10px;color:#f6f6f6;letter-spacing:-0.5px;-webkit-text-stroke-width:0.15px;">33</span>
<span class="t g" style="left:236px;top:214px;font-size:10px;color:#f6f6f6;letter-spacing:-0.5px;-webkit-text-stroke-width:0.15px;">42</span>
<span class="t g" style="left:12px;top:246px;font-size:10px;color:#f6f6f6;letter-spacing:-0.5px;-webkit-text-stroke-width:0.15px;">55</span>
<span class="t g" style="left:44px;top:246px;font-size:10px;color:#f6f6f6;letter-spacing:-0.5px;-webkit-text-stroke-width:0.15px;">70</span>
<span class="t g" style="left:74px;top:246px;font-size:10px;color:#f6f6f6;letter-spacing:-0.5px;-webkit-text-stroke-width:0.15px;">112</span>
<span class="t g" style="left:106px;top:246px;font-size:10px;color:#f6f6f6;letter-spacing:-0.5px;-webkit-text-stroke-width:0.15px;">134</span>
<span class="t g" style="left:140px;top:246px;font-size:10px;color:#f6f6f6;letter-spacing:-0.5px;-webkit-text-stroke-width:0.15px;">74</span>
<span class="t g" style="left:172px;top:246px;font-size:10px;color:#f6f6f6;letter-spacing:-0.5px;-webkit-text-stroke-width:0.15px;">95</span>
<span class="t g" style="left:204px;top:246px;font-size:10px;color:#f6f6f6;letter-spacing:-0.5px;-webkit-text-stroke-width:0.15px;">95</span>
<span class="t g" style="left:236px;top:246px;font-size:10px;color:#f6f6f6;letter-spacing:-0.5px;-webkit-text-stroke-width:0.15px;">90</span>
<span class="t g" style="left:12px;top:278px;font-size:10px;color:#f6f6f6;letter-spacing:-0.5px;-webkit-text-stroke-width:0.15px;">36</span>
<span class="t g" style="left:44px;top:278px;font-size:10px;color:#f6f6f6;letter-spacing:-0.5px;-webkit-text-stroke-width:0.15px;">36</span>
<span class="t g" style="left:76px;top:278px;font-size:10px;color:#f6f6f6;letter-spacing:-0.5px;-webkit-text-stroke-width:0.15px;">33</span>
<span class="t g" style="left:108px;top:278px;font-size:10px;color:#f6f6f6;letter-spacing:-0.5px;-webkit-text-stroke-width:0.15px;">63</span>
<span class="t g" style="left:140px;top:278px;font-size:10px;color:#f6f6f6;letter-spacing:-0.5px;-webkit-text-stroke-width:0.15px;">66</span>
<span class="t g" style="left:172px;top:278px;font-size:10px;color:#f6f6f6;letter-spacing:-0.5px;-webkit-text-stroke-width:0.15px;">39</span>
<span class="t g" style="left:204px;top:278px;font-size:10px;color:#f6f6f6;letter-spacing:-0.5px;-webkit-text-stroke-width:0.15px;">63</span>
<span class="t g" style="left:236px;top:278px;font-size:10px;color:#f6f6f6;letter-spacing:-0.5px;-webkit-text-stroke-width:0.15px;">11</span>
<span class="t g" style="left:12px;top:310px;font-size:10px;color:#f6f6f6;letter-spacing:-0.5px;-webkit-text-stroke-width:0.15px;">48</span>
<span class="t g" style="left:44px;top:310px;font-size:10px;color:#f6f6f6;letter-spacing:-0.5px;-webkit-text-stroke-width:0.15px;">32</span>
<span class="t g" style="left:76px;top:310px;font-size:10px;color:#f6f6f6;letter-spacing:-0.5px;-webkit-text-stroke-width:0.15px;">55</span>
<span class="t g" style="left:106px;top:310px;font-size:10px;color:#f6f6f6;letter-spacing:-0.5px;-webkit-text-stroke-width:0.15px;">100</span>
<span class="t g" style="left:138px;top:310px;font-size:10px;color:#f6f6f6;letter-spacing:-0.5px;-webkit-text-stroke-width:0.15px;">863</span>
<span class="t g" style="left:170px;top:310px;font-size:10px;color:#f6f6f6;letter-spacing:-0.5px;-webkit-text-stroke-width:0.15px;">678</span>
<span class="t g" style="left:202px;top:310px;font-size:10px;color:#f6f6f6;letter-spacing:-0.5px;-webkit-text-stroke-width:0.15px;">678</span>
<span class="t g" style="left:234px;top:310px;font-size:10px;color:#f6f6f6;letter-spacing:-0.5px;-webkit-text-stroke-width:0.15px;">997</span></div>
<div id="menu">
<div class="col1">
<div class="mi"><span style="letter-spacing:-0.264px">New Brush Preset...</span></div>
<div class="sep"><i></i></div>
<div class="mi"><span style="letter-spacing:-0.296px">Rename Brush...</span></div>
<div class="mi"><span style="letter-spacing:-0.24px">Delete Brush</span></div>
<div class="sep"><i></i></div>
<div class="mi"><span style="letter-spacing:0.043px">Text Only</span></div>
<div class="mi"><svg class="chk" width="9" height="9" viewBox="0 0 9 9"><path d="M0.300,4.200 L1.800,3 L3.300,5 L7,0.300 L8.500,1.400 L3.500,8.200 Z" fill="#111"/></svg><span style="letter-spacing:0.096px">Small Thumbnail</span></div>
<div class="mi"><span style="letter-spacing:0.05px">Large Thumbnail</span></div>
<div class="mi"><span style="letter-spacing:-0.162px">Small List</span></div>
<div class="mi"><span style="letter-spacing:-0.23px">Large List</span></div>
<div class="mi"><span style="letter-spacing:0.067px">Stroke Thumbnail</span></div>
<div class="sep"><i></i></div>
<div class="mi hl"><span style="letter-spacing:-0.183px">Preset Manager...</span></div>
<div class="sep"><i></i></div>
<div class="mi"><span style="letter-spacing:-0.451px">Reset Brushes...</span></div>
<div class="mi"><span style="letter-spacing:-0.311px">Load Brushes...</span></div>
<div class="mi"><span style="letter-spacing:-0.468px">Save Brushes...</span></div>
<div class="mi"><span style="letter-spacing:-0.361px">Replace Brushes...</span></div>
<div class="sep"><i></i></div>
<div class="mi"><span style="letter-spacing:-0.239px">Assorted Brushes</span></div>
<div class="mi"><span style="letter-spacing:-0.369px">Basic Brushes</span></div>
<div class="mi"><span style="letter-spacing:-0.118px">Calligraphic Brushes</span></div>
<div class="mi"><span style="letter-spacing:-0.391px">DP Brushes</span></div>
<div class="mi"><span style="letter-spacing:-0.23px">Drop Shadow Brushes</span></div>
<div class="mi"><span style="letter-spacing:-0.197px">Dry Media Brushes</span></div>
<div class="mi"><span style="letter-spacing:-0.347px">Faux Finish Brushes</span></div>
<div class="mi"><span style="letter-spacing:-0.251px">M Brushes</span></div>
</div><div class="vs"></div><div class="col2">
<div class="mi"><span style="letter-spacing:0.271px">round-brush</span></div>
<div class="mi"><span style="letter-spacing:0.116px">Smudge</span></div>
<div class="mi"><span style="letter-spacing:-0.224px">SS-arcane-circles</span></div>
<div class="mi"><span style="letter-spacing:-0.009px">SS-light-beams</span></div>
</div></div>
</body></html>
